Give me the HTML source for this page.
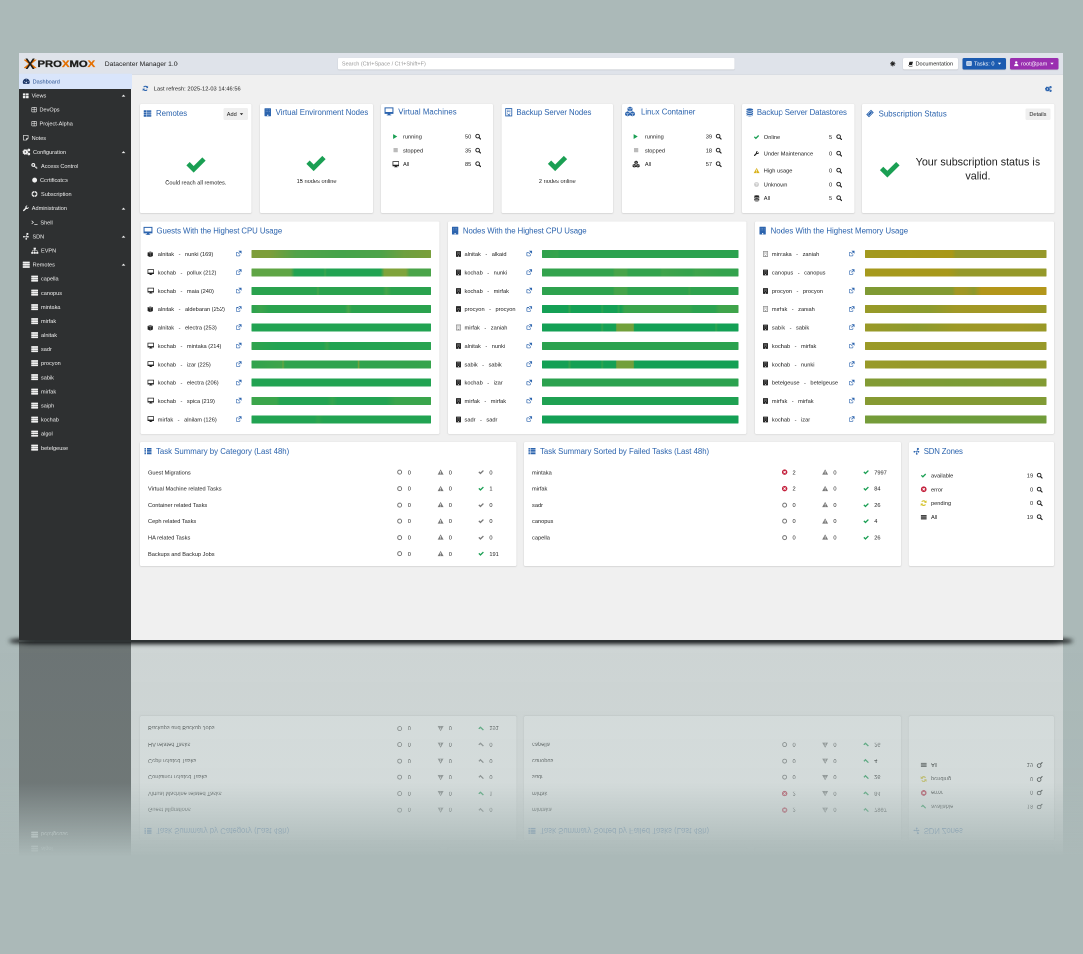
<!DOCTYPE html>
<html lang="en"><head><meta charset="utf-8"><title>Proxmox Datacenter Manager</title>
<style>
html,body{margin:0;padding:0}
body{width:1083px;height:954px;overflow:hidden;position:relative;background:#abb9b8;font-family:"Liberation Sans",sans-serif}
.app{position:absolute;left:0;top:0;width:2088.0px;height:1175.4px;transform-origin:0 0;overflow:hidden;color:#222;will-change:transform}
.cbg{position:absolute;left:224px;top:43.4px;right:0;bottom:-6px;background:#f0f0f0}
.abs{position:absolute;white-space:nowrap}
svg.i{display:block}
.hdr{position:absolute;left:0;top:0;width:100%;height:43.8px;background:#dfe3ea;box-shadow:inset 0 -1.6px 0 #d8dbe1;z-index:2}
.logo{position:absolute;width:142px;height:22px}
.lt{position:absolute;top:0;font-size:18px;line-height:22px;letter-spacing:0;font-weight:bold;transform:scaleX(1.253);transform-origin:0 0;white-space:nowrap;-webkit-text-stroke:.55px}
.htitle{position:absolute;top:0;line-height:43.4px;font-size:13.500px;color:#222;white-space:nowrap}
.search{position:absolute;background:#fff;border-radius:2px;box-shadow:0 1px 2px rgba(0,0,0,.18)}
.search span{position:absolute;left:8px;top:0;line-height:23.6px;font-size:11px;color:#9a9a9a;white-space:nowrap}
.hbtn{position:absolute;border-radius:3px;display:flex;align-items:center;justify-content:center;gap:4px;font-size:11.200px;white-space:nowrap;box-shadow:0 1px 2px rgba(0,0,0,.2)}
.hbtn.doc{background:#fff;color:#222}
.hbtn.tasks{background:#1c5bb0;color:#fff}
.hbtn.user{background:#9a2fb0;color:#fff}
.side{z-index:3;position:absolute;left:0;top:43.4px;width:224px;bottom:-6px;background:#2e3031;color:#f0f0f0}
.sitem{position:absolute;left:0;width:224px;height:28.18px;font-size:11.100px;line-height:28.18px}
.sitem.sel{background:#d9e5fb;color:#27508f;width:226px;height:29.2px;box-shadow:0 -1.6px 0 #d9e5fb}
.st{top:0}
.content{position:absolute;left:0;top:0;width:100%;height:100%}
.card{position:absolute;background:#fff;border-radius:2px;box-shadow:0 1px 3px rgba(0,0,0,.16),0 0 1px rgba(0,0,0,.10)}
.ct{font-size:15.600px;line-height:21px;color:#2c64ae}
.bt{font-size:11.300px;line-height:16px;color:#222}
.bt.c{text-align:center}
.bt.r{text-align:right}
.sub{font-size:21.500px;line-height:28.400px;text-align:center;color:#222;white-space:nowrap}
.sbtn{background:#efefef;border-radius:3px;font-size:11.200px;display:flex;align-items:center;justify-content:center;gap:4px;color:#222}
.bar{height:16px;border-radius:1px}
</style></head><body>
<div style="position:absolute;left:0;top:0;width:1083px;height:954px;overflow:hidden">
<div class="app" style="transform:translate(19.0px,1229.2px) scale(0.5,-0.5)"><div class="hdr"><div class="logo" style="left:10px;top:10.8px"><svg width="24.400" height="21.500" viewBox="0 0 24 21" preserveAspectRatio="none" style="position:absolute;left:.2px;top:.2px;overflow:hidden"><clipPath id="lgc"><rect x="-1" y="2.300" width="26" height="16.400"/></clipPath><g clip-path="url(#lgc)" stroke="#e57000" stroke-width="3.700" fill="none"><path d="M-1.800 -.6L25.800 21.600M25.800 -.6L-1.800 21.600"/></g><g stroke="#1d1d1b" stroke-width="3.100" fill="none"><path d="M3.300 -2.100L20.700 23.100M20.700 -2.100L3.300 23.100"/></g></svg><span class="lt" style="left:27px"><b style="color:#1d1d1b">PRO</b><b style="color:#e57000">X</b><b style="color:#1d1d1b">MO</b><b style="color:#e57000">X</b></span></div><div class="htitle" style="left:171.4px">Datacenter Manager 1.0</div><div class="search" style="left:637.8px;width:792.8px;top:9.9px;height:23.6px"><span>Search (Ctrl+Space / Ctrl+Shift+F)</span></div><div class="abs" style="left:1742.1px;top:15.5px;color:#222"><svg class="i" width="11" height="11" viewBox="0 0 16 16" fill="currentColor" style=""><circle cx="8" cy="8" r="3.600"/><path d="M8 .5v15M.5 8h15M2.700 2.700l10.600 10.600M13.300 2.700L2.700 13.300" stroke="currentColor" stroke-width="2.600"/></svg></div><div class="hbtn doc" style="left:1768.2px;width:109.8px;top:9.7px;height:23.3px"><svg class="i" width="11" height="11" viewBox="0 0 16 16" fill="currentColor" style=""><path d="M4.500 2h10l-2.800 10H3.200A1.700 1.700 0 0 0 3.200 14.500H12l.5-1.500 1 .3-.8 2.700H3A3 3 0 0 1 1 12z"/></svg><span>Documentation</span></div><div class="hbtn tasks" style="left:1886.6px;width:87.8px;top:9.7px;height:23.3px"><svg class="i" width="12" height="12" viewBox="0 0 16 16" fill="currentColor" style=""><rect x="1" y="2" width="14" height="12" rx="1"/><path d="M3 5.500h10M3 8h10M3 10.500h10" stroke="#1c5bb0" stroke-width="1"/></svg><span>Tasks: 0</span><svg class="i" width="12" height="12" viewBox="0 0 16 16" fill="currentColor" style=""><path d="M3.500 6h9L8 11z"/></svg></div><div class="hbtn user" style="left:1982.2px;width:97.2px;top:9.7px;height:23.3px"><svg class="i" width="11" height="11" viewBox="0 0 16 16" fill="currentColor" style=""><circle cx="8" cy="4.300" r="3.500"/><path d="M1.800 15c0-4.500 2.200-6.500 6.200-6.500s6.200 2 6.200 6.500z"/></svg><span>root@pam</span><svg class="i" width="12" height="12" viewBox="0 0 16 16" fill="currentColor" style=""><path d="M3.500 6h9L8 11z"/></svg></div></div><div class="side"><div class="sitem sel" style="top:-0.55px"><span class="abs" style="left:7.4px;top:6.59px"><svg class="i" width="15" height="15" viewBox="0 0 16 16" fill="currentColor" style="color:#1b3566;"><path d="M8 2.5a7.3 7.3 0 0 0-6.2 11.2h12.4A7.3 7.3 0 0 0 8 2.5z"/><circle cx="8" cy="10.6" r="1.7" fill="#d9e5fb"/><circle cx="4" cy="9" r=".9" fill="#d9e5fb"/><circle cx="12" cy="9" r=".9" fill="#d9e5fb"/><circle cx="8" cy="5" r=".9" fill="#d9e5fb"/></svg></span><span class="abs st" style="left:27.3px">Dashboard</span></div><div class="sitem" style="top:27.63px"><span class="abs" style="left:7.1px;top:7.59px"><svg class="i" width="13" height="13" viewBox="0 0 16 16" fill="currentColor" style=""><rect x="1" y="2" width="6.3" height="5.3" rx=".6"/><rect x="8.7" y="2" width="6.3" height="5.3" rx=".6"/><rect x="1" y="8.7" width="6.3" height="5.3" rx=".6"/><rect x="8.7" y="8.7" width="6.3" height="5.3" rx=".6"/></svg></span><span class="abs st" style="left:25.2px">Views</span><span class="abs" style="left:202.8px;top:8.100px"><svg class="i" width="12" height="12" viewBox="0 0 16 16" fill="currentColor" style=""><path d="M3 11l5-5.500 5 5.500z"/></svg></span></div><div class="sitem" style="top:55.81px"><span class="abs" style="left:23.75px;top:7.84px"><svg class="i" width="12.5" height="12.5" viewBox="0 0 16 16" fill="currentColor" style=""><rect x="2" y="2" width="12" height="12" rx="1.5" fill="none" stroke="currentColor" stroke-width="1.5"/><path d="M8 2v12M2 8h12" stroke="currentColor" stroke-width="1.5" fill="none"/></svg></span><span class="abs st" style="left:41.1px">DevOps</span></div><div class="sitem" style="top:83.99px"><span class="abs" style="left:23.75px;top:7.84px"><svg class="i" width="12.5" height="12.5" viewBox="0 0 16 16" fill="currentColor" style=""><rect x="2" y="2" width="12" height="12" rx="1.5" fill="none" stroke="currentColor" stroke-width="1.5"/><path d="M8 2v12M2 8h12" stroke="currentColor" stroke-width="1.5" fill="none"/></svg></span><span class="abs st" style="left:41.1px">Project-Alpha</span></div><div class="sitem" style="top:112.17px"><span class="abs" style="left:7.1px;top:7.59px"><svg class="i" width="13" height="13" viewBox="0 0 16 16" fill="currentColor" style=""><path d="M2.2 2.2h11.6v7.3l-4.3 4.3H2.2z" fill="none" stroke="currentColor" stroke-width="1.6"/><path d="M9.5 13.8V9.5h4.3" fill="none" stroke="currentColor" stroke-width="1.3"/></svg></span><span class="abs st" style="left:25.2px">Notes</span></div><div class="sitem" style="top:140.35px"><span class="abs" style="left:7.3px;top:6.09px"><svg class="i" width="16" height="16" viewBox="0 0 16 16" fill="currentColor" style=""><circle cx="5.600" cy="8" r="3.100" fill="none" stroke="currentColor" stroke-width="3.400"/><circle cx="5.600" cy="8" r="4.900" fill="none" stroke="currentColor" stroke-width="1.400" stroke-dasharray="2.100 1.750"/><circle cx="12.600" cy="3.900" r="1.600" fill="none" stroke="currentColor" stroke-width="2.300"/><circle cx="12.600" cy="12.100" r="1.600" fill="none" stroke="currentColor" stroke-width="2.300"/></svg></span><span class="abs st" style="left:28.1px">Configuration</span><span class="abs" style="left:202.8px;top:8.100px"><svg class="i" width="12" height="12" viewBox="0 0 16 16" fill="currentColor" style=""><path d="M3 11l5-5.500 5 5.500z"/></svg></span></div><div class="sitem" style="top:168.53px"><span class="abs" style="left:24.0px;top:7.09px"><svg class="i" width="14" height="14" viewBox="0 0 16 16" fill="currentColor" style=""><circle cx="5.2" cy="5.6" r="3.2" fill="none" stroke="currentColor" stroke-width="2.6"/><path d="M7.6 8l5.6 5.6M11 11.4l1.6-1.6M13 13.4l1.4-1.4" stroke="currentColor" stroke-width="2" fill="none"/></svg></span><span class="abs st" style="left:44px">Access Control</span></div><div class="sitem" style="top:196.71px"><span class="abs" style="left:24.75px;top:7.84px"><svg class="i" width="12.5" height="12.5" viewBox="0 0 16 16" fill="currentColor" style=""><circle cx="8" cy="8" r="6.3"/></svg></span><span class="abs st" style="left:42px">Certificates</span></div><div class="sitem" style="top:224.89px"><span class="abs" style="left:24.0px;top:7.09px"><svg class="i" width="14" height="14" viewBox="0 0 16 16" fill="currentColor" style=""><circle cx="8" cy="8" r="5.2" fill="none" stroke="currentColor" stroke-width="3.4"/><path d="M8 1v4M8 11v4M1 8h4M11 8h4" stroke="#2e3031" stroke-width="1.1"/></svg></span><span class="abs st" style="left:44px">Subscription</span></div><div class="sitem" style="top:253.07px"><span class="abs" style="left:6.85px;top:7.34px"><svg class="i" width="13.5" height="13.5" viewBox="0 0 16 16" fill="currentColor" style=""><path d="M14.6 4.3l-2.5 2.5-2.3-.5-.5-2.3 2.5-2.5a4 4 0 0 0-5 5.2L1.6 11.900a1.700 1.700 0 0 0 2.400 2.400l5.200-5.200a4 4 0 0 0 5.400-4.800z"/></svg></span><span class="abs st" style="left:25.6px">Administration</span><span class="abs" style="left:202.8px;top:8.100px"><svg class="i" width="12" height="12" viewBox="0 0 16 16" fill="currentColor" style=""><path d="M3 11l5-5.500 5 5.500z"/></svg></span></div><div class="sitem" style="top:281.25px"><span class="abs" style="left:24.0px;top:7.09px"><svg class="i" width="14" height="14" viewBox="0 0 16 16" fill="currentColor" style=""><path d="M1.5 4l4 3.6-4 3.600" fill="none" stroke="currentColor" stroke-width="1.6"/><path d="M7.5 12.5h7.500" stroke="currentColor" stroke-width="1.600"/></svg></span><span class="abs st" style="left:42.8px">Shell</span></div><div class="sitem" style="top:309.43px"><span class="abs" style="left:7.4px;top:6.59px"><svg class="i" width="15" height="15" viewBox="0 0 16 16" fill="currentColor" style=""><circle cx="3" cy="9" r="1.900"/><circle cx="10.500" cy="3" r="2.300"/><circle cx="11.500" cy="9" r="1.900"/><circle cx="8" cy="13.500" r="1.900"/><path d="M3 9h8.500M7.500 9l3-6M7.500 9l.5 4.500" stroke="currentColor" stroke-width="1.200" fill="none"/></svg></span><span class="abs st" style="left:26.9px">SDN</span><span class="abs" style="left:202.8px;top:8.100px"><svg class="i" width="12" height="12" viewBox="0 0 16 16" fill="currentColor" style=""><path d="M3 11l5-5.500 5 5.500z"/></svg></span></div><div class="sitem" style="top:337.61px"><span class="abs" style="left:24.0px;top:6.59px"><svg class="i" width="15" height="15" viewBox="0 0 16 16" fill="currentColor" style=""><rect x="5.500" y="1.500" width="5" height="4"/><rect x="0.500" y="10.500" width="4.400" height="4"/><rect x="5.800" y="10.500" width="4.400" height="4"/><rect x="11.100" y="10.500" width="4.400" height="4"/><path d="M8 5v5.500M2.700 10.500V8h10.600v2.500" stroke="currentColor" stroke-width="1.100" fill="none"/></svg></span><span class="abs st" style="left:44px">EVPN</span></div><div class="sitem" style="top:365.79px"><span class="abs" style="left:7.4px;top:6.59px"><svg class="i" width="15" height="15" viewBox="0 0 16 16" fill="currentColor" style=""><rect x=".5" y="1.400" width="15" height="3.800" rx=".5"/><rect x=".5" y="6.100" width="15" height="3.800" rx=".5"/><rect x=".5" y="10.800" width="15" height="3.800" rx=".5"/><path d="M5.500 1.400v13.200" stroke="#fff" stroke-width=".9" opacity=".5"/><path d="M6 2.700h9M6 3.900h9M6 7.400h9M6 8.600h9M6 12.100h9M6 13.300h9" stroke="#fff" stroke-width=".45" opacity=".45"/></svg></span><span class="abs st" style="left:27.3px">Remotes</span><span class="abs" style="left:202.8px;top:8.100px"><svg class="i" width="12" height="12" viewBox="0 0 16 16" fill="currentColor" style=""><path d="M3 11l5-5.500 5 5.500z"/></svg></span></div><div class="sitem" style="top:393.97px"><span class="abs" style="left:24.05px;top:6.84px"><svg class="i" width="14.5" height="14.5" viewBox="0 0 16 16" fill="currentColor" style=""><rect x=".5" y="1.400" width="15" height="3.800" rx=".5"/><rect x=".5" y="6.100" width="15" height="3.800" rx=".5"/><rect x=".5" y="10.800" width="15" height="3.800" rx=".5"/><path d="M5.500 1.400v13.200" stroke="#fff" stroke-width=".9" opacity=".5"/><path d="M6 2.700h9M6 3.900h9M6 7.400h9M6 8.600h9M6 12.100h9M6 13.300h9" stroke="#fff" stroke-width=".45" opacity=".45"/></svg></span><span class="abs st" style="left:44px">capella</span></div><div class="sitem" style="top:422.15px"><span class="abs" style="left:24.05px;top:6.84px"><svg class="i" width="14.5" height="14.5" viewBox="0 0 16 16" fill="currentColor" style=""><rect x=".5" y="1.400" width="15" height="3.800" rx=".5"/><rect x=".5" y="6.100" width="15" height="3.800" rx=".5"/><rect x=".5" y="10.800" width="15" height="3.800" rx=".5"/><path d="M5.500 1.400v13.200" stroke="#fff" stroke-width=".9" opacity=".5"/><path d="M6 2.700h9M6 3.900h9M6 7.400h9M6 8.600h9M6 12.100h9M6 13.300h9" stroke="#fff" stroke-width=".45" opacity=".45"/></svg></span><span class="abs st" style="left:44px">canopus</span></div><div class="sitem" style="top:450.33px"><span class="abs" style="left:24.05px;top:6.84px"><svg class="i" width="14.5" height="14.5" viewBox="0 0 16 16" fill="currentColor" style=""><rect x=".5" y="1.400" width="15" height="3.800" rx=".5"/><rect x=".5" y="6.100" width="15" height="3.800" rx=".5"/><rect x=".5" y="10.800" width="15" height="3.800" rx=".5"/><path d="M5.500 1.400v13.200" stroke="#fff" stroke-width=".9" opacity=".5"/><path d="M6 2.700h9M6 3.900h9M6 7.400h9M6 8.600h9M6 12.100h9M6 13.300h9" stroke="#fff" stroke-width=".45" opacity=".45"/></svg></span><span class="abs st" style="left:44px">mintaka</span></div><div class="sitem" style="top:478.51px"><span class="abs" style="left:24.05px;top:6.84px"><svg class="i" width="14.5" height="14.5" viewBox="0 0 16 16" fill="currentColor" style=""><rect x=".5" y="1.400" width="15" height="3.800" rx=".5"/><rect x=".5" y="6.100" width="15" height="3.800" rx=".5"/><rect x=".5" y="10.800" width="15" height="3.800" rx=".5"/><path d="M5.500 1.400v13.200" stroke="#fff" stroke-width=".9" opacity=".5"/><path d="M6 2.700h9M6 3.900h9M6 7.400h9M6 8.600h9M6 12.100h9M6 13.300h9" stroke="#fff" stroke-width=".45" opacity=".45"/></svg></span><span class="abs st" style="left:44px">mirfak</span></div><div class="sitem" style="top:506.69px"><span class="abs" style="left:24.05px;top:6.84px"><svg class="i" width="14.5" height="14.5" viewBox="0 0 16 16" fill="currentColor" style=""><rect x=".5" y="1.400" width="15" height="3.800" rx=".5"/><rect x=".5" y="6.100" width="15" height="3.800" rx=".5"/><rect x=".5" y="10.800" width="15" height="3.800" rx=".5"/><path d="M5.500 1.400v13.200" stroke="#fff" stroke-width=".9" opacity=".5"/><path d="M6 2.700h9M6 3.900h9M6 7.400h9M6 8.600h9M6 12.100h9M6 13.300h9" stroke="#fff" stroke-width=".45" opacity=".45"/></svg></span><span class="abs st" style="left:44px">alnitak</span></div><div class="sitem" style="top:534.87px"><span class="abs" style="left:24.05px;top:6.84px"><svg class="i" width="14.5" height="14.5" viewBox="0 0 16 16" fill="currentColor" style=""><rect x=".5" y="1.400" width="15" height="3.800" rx=".5"/><rect x=".5" y="6.100" width="15" height="3.800" rx=".5"/><rect x=".5" y="10.800" width="15" height="3.800" rx=".5"/><path d="M5.500 1.400v13.200" stroke="#fff" stroke-width=".9" opacity=".5"/><path d="M6 2.700h9M6 3.900h9M6 7.400h9M6 8.600h9M6 12.100h9M6 13.300h9" stroke="#fff" stroke-width=".45" opacity=".45"/></svg></span><span class="abs st" style="left:44px">sadr</span></div><div class="sitem" style="top:563.05px"><span class="abs" style="left:24.05px;top:6.84px"><svg class="i" width="14.5" height="14.5" viewBox="0 0 16 16" fill="currentColor" style=""><rect x=".5" y="1.400" width="15" height="3.800" rx=".5"/><rect x=".5" y="6.100" width="15" height="3.800" rx=".5"/><rect x=".5" y="10.800" width="15" height="3.800" rx=".5"/><path d="M5.500 1.400v13.200" stroke="#fff" stroke-width=".9" opacity=".5"/><path d="M6 2.700h9M6 3.900h9M6 7.400h9M6 8.600h9M6 12.100h9M6 13.300h9" stroke="#fff" stroke-width=".45" opacity=".45"/></svg></span><span class="abs st" style="left:44px">procyon</span></div><div class="sitem" style="top:591.23px"><span class="abs" style="left:24.05px;top:6.84px"><svg class="i" width="14.5" height="14.5" viewBox="0 0 16 16" fill="currentColor" style=""><rect x=".5" y="1.400" width="15" height="3.800" rx=".5"/><rect x=".5" y="6.100" width="15" height="3.800" rx=".5"/><rect x=".5" y="10.800" width="15" height="3.800" rx=".5"/><path d="M5.500 1.400v13.200" stroke="#fff" stroke-width=".9" opacity=".5"/><path d="M6 2.700h9M6 3.900h9M6 7.400h9M6 8.600h9M6 12.100h9M6 13.300h9" stroke="#fff" stroke-width=".45" opacity=".45"/></svg></span><span class="abs st" style="left:44px">sabik</span></div><div class="sitem" style="top:619.41px"><span class="abs" style="left:24.05px;top:6.84px"><svg class="i" width="14.5" height="14.5" viewBox="0 0 16 16" fill="currentColor" style=""><rect x=".5" y="1.400" width="15" height="3.800" rx=".5"/><rect x=".5" y="6.100" width="15" height="3.800" rx=".5"/><rect x=".5" y="10.800" width="15" height="3.800" rx=".5"/><path d="M5.500 1.400v13.200" stroke="#fff" stroke-width=".9" opacity=".5"/><path d="M6 2.700h9M6 3.900h9M6 7.400h9M6 8.600h9M6 12.100h9M6 13.300h9" stroke="#fff" stroke-width=".45" opacity=".45"/></svg></span><span class="abs st" style="left:44px">mirfak</span></div><div class="sitem" style="top:647.59px"><span class="abs" style="left:24.05px;top:6.84px"><svg class="i" width="14.5" height="14.5" viewBox="0 0 16 16" fill="currentColor" style=""><rect x=".5" y="1.400" width="15" height="3.800" rx=".5"/><rect x=".5" y="6.100" width="15" height="3.800" rx=".5"/><rect x=".5" y="10.800" width="15" height="3.800" rx=".5"/><path d="M5.500 1.400v13.200" stroke="#fff" stroke-width=".9" opacity=".5"/><path d="M6 2.700h9M6 3.900h9M6 7.400h9M6 8.600h9M6 12.100h9M6 13.300h9" stroke="#fff" stroke-width=".45" opacity=".45"/></svg></span><span class="abs st" style="left:44px">saiph</span></div><div class="sitem" style="top:675.77px"><span class="abs" style="left:24.05px;top:6.84px"><svg class="i" width="14.5" height="14.5" viewBox="0 0 16 16" fill="currentColor" style=""><rect x=".5" y="1.400" width="15" height="3.800" rx=".5"/><rect x=".5" y="6.100" width="15" height="3.800" rx=".5"/><rect x=".5" y="10.800" width="15" height="3.800" rx=".5"/><path d="M5.500 1.400v13.200" stroke="#fff" stroke-width=".9" opacity=".5"/><path d="M6 2.700h9M6 3.900h9M6 7.400h9M6 8.600h9M6 12.100h9M6 13.300h9" stroke="#fff" stroke-width=".45" opacity=".45"/></svg></span><span class="abs st" style="left:44px">kochab</span></div><div class="sitem" style="top:703.95px"><span class="abs" style="left:24.05px;top:6.84px"><svg class="i" width="14.5" height="14.5" viewBox="0 0 16 16" fill="currentColor" style=""><rect x=".5" y="1.400" width="15" height="3.800" rx=".5"/><rect x=".5" y="6.100" width="15" height="3.800" rx=".5"/><rect x=".5" y="10.800" width="15" height="3.800" rx=".5"/><path d="M5.500 1.400v13.200" stroke="#fff" stroke-width=".9" opacity=".5"/><path d="M6 2.700h9M6 3.900h9M6 7.400h9M6 8.600h9M6 12.100h9M6 13.300h9" stroke="#fff" stroke-width=".45" opacity=".45"/></svg></span><span class="abs st" style="left:44px">algol</span></div><div class="sitem" style="top:732.13px"><span class="abs" style="left:24.05px;top:6.84px"><svg class="i" width="14.5" height="14.5" viewBox="0 0 16 16" fill="currentColor" style=""><rect x=".5" y="1.400" width="15" height="3.800" rx=".5"/><rect x=".5" y="6.100" width="15" height="3.800" rx=".5"/><rect x=".5" y="10.800" width="15" height="3.800" rx=".5"/><path d="M5.500 1.400v13.200" stroke="#fff" stroke-width=".9" opacity=".5"/><path d="M6 2.700h9M6 3.900h9M6 7.400h9M6 8.600h9M6 12.100h9M6 13.300h9" stroke="#fff" stroke-width=".45" opacity=".45"/></svg></span><span class="abs st" style="left:44px">betelgeuse</span></div></div><div class="cbg"></div><div class="content"><span class="abs" style="left:247.2px;top:65.2px"><svg class="i" width="11.5" height="11.5" viewBox="0 0 16 16" fill="currentColor" style="color:#2c64ae;"><path d="M13.300 6.300A5.600 5.600 0 0 0 3.200 4.700" fill="none" stroke="currentColor" stroke-width="3"/><path d="M2.700 9.700A5.600 5.600 0 0 0 12.800 11.300" fill="none" stroke="currentColor" stroke-width="3"/><path d="M15.500 .8v6.400H9.100zM.5 15.200V8.800h6.400z"/></svg></span><span class="abs bt" style="left:269.6px;top:63.2px"><span style="letter-spacing:.09px">Last refresh: 2025-12-03 14:46:56</span></span><span class="abs" style="left:2051.8px;top:65.2px"><svg class="i" width="14" height="14" viewBox="0 0 16 16" fill="currentColor" style="color:#2c64ae;"><circle cx="5.600" cy="8" r="3.100" fill="none" stroke="currentColor" stroke-width="3.400"/><circle cx="5.600" cy="8" r="4.900" fill="none" stroke="currentColor" stroke-width="1.400" stroke-dasharray="2.100 1.750"/><circle cx="12.600" cy="3.900" r="1.600" fill="none" stroke="currentColor" stroke-width="2.300"/><circle cx="12.600" cy="12.100" r="1.600" fill="none" stroke="currentColor" stroke-width="2.300"/></svg></span><div class="card" style="left:242.0px;top:102.0px;width:223.4px;height:218.2px"><span class="abs ct-i" style="left:7px;top:10.5px"><svg class="i" width="16" height="16" viewBox="0 0 16 16" fill="currentColor" style="color:#2c64ae;"><rect x=".5" y="1.400" width="15" height="3.800" rx=".5"/><rect x=".5" y="6.100" width="15" height="3.800" rx=".5"/><rect x=".5" y="10.800" width="15" height="3.800" rx=".5"/><path d="M5.500 1.400v13.200" stroke="#fff" stroke-width=".9" opacity=".5"/><path d="M6 2.700h9M6 3.900h9M6 7.400h9M6 8.600h9M6 12.100h9M6 13.300h9" stroke="#fff" stroke-width=".45" opacity=".45"/></svg></span><span class="abs ct" style="left:32px;top:8px;letter-spacing:-0.003px">Remotes</span><span class="sbtn abs" style="left:167.0px;top:8px;width:49.0px;height:24px">Add <svg class="i" width="12" height="12" viewBox="0 0 16 16" fill="currentColor" style=""><path d="M3.500 6h9L8 11z"/></svg></span><span class="abs" style="left:89.60000000000002px;top:99.0px"><svg class="i" width="44" height="44" viewBox="0 0 16 16" fill="currentColor" style="color:#1a9f53;"><path d="M1 8.6 L3.4 6.2 L6.3 9.1 L12.6 2.8 L15 5.2 L6.3 13.9 Z"/></svg></span><span class="abs bt c" style="left:0;width:100%;top:148.60000000000002px">Could reach all remotes.</span></div><div class="card" style="left:482.2px;top:102.0px;width:226.0px;height:218.2px"><span class="abs ct-i" style="left:7px;top:7.5px"><svg class="i" width="17" height="17" viewBox="0 0 16 16" fill="currentColor" style="color:#2c64ae;"><path d="M2.800 .4h10.400a.9.9 0 0 1 .9.9v13.400a.9.9 0 0 1-.9.900H2.800a.9.9 0 0 1-.9-.9V1.300a.9.9 0 0 1 .9-.9z"/><g fill="#fff" opacity=".4"><rect x="4.300" y="2.800" width="1.400" height="1.400"/><rect x="7.300" y="2.800" width="1.400" height="1.400"/><rect x="10.300" y="2.800" width="1.400" height="1.400"/><rect x="4.300" y="6" width="1.400" height="1.400"/><rect x="7.300" y="6" width="1.400" height="1.400"/><rect x="10.300" y="6" width="1.400" height="1.400"/></g><rect x="6.800" y="12.600" width="2.400" height="2.400" fill="#fff" opacity=".9"/></svg></span><span class="abs ct" style="left:31px;top:5.5px;letter-spacing:0.005px">Virtual Environment Nodes</span><span class="abs" style="left:90.19999999999999px;top:96.4px"><svg class="i" width="44" height="44" viewBox="0 0 16 16" fill="currentColor" style="color:#1a9f53;"><path d="M1 8.6 L3.4 6.2 L6.3 9.1 L12.6 2.8 L15 5.2 L6.3 13.9 Z"/></svg></span><span class="abs bt c" style="left:0;width:100%;top:146.0px">15 nodes online</span></div><div class="card" style="left:724.4px;top:102.0px;width:223.4px;height:218.2px"><span class="abs ct-i" style="left:7px;top:6.0px"><svg class="i" width="18" height="18" viewBox="0 0 16 16" fill="currentColor" style="color:#2c64ae;"><path d="M1 1.600h14v9.800H1z" fill="none" stroke="currentColor" stroke-width="1.800"/><path d="M1 8.800h14v2.600H1zM6 11.400h4l.5 2.300h1.500v1.100H4v-1.100h1.500z"/></svg></span><span class="abs ct" style="left:34px;top:4.5px;letter-spacing:0.135px">Virtual Machines</span><span class="abs" style="left:22.0px;top:59.0px"><svg class="i" width="12" height="12" viewBox="0 0 16 16" fill="currentColor" style="color:#1a9f53;"><path d="M3 1.500l11 6.500-11 6.500z"/></svg></span><span class="abs bt" style="left:43.60000000000002px;top:57.0px">running</span><span class="abs bt r" style="left:140.20000000000005px;width:40px;top:57.0px">50</span><span class="abs" style="left:187.40000000000003px;top:59.0px"><svg class="i" width="12.5" height="12.5" viewBox="0 0 16 16" fill="currentColor" style="color:#222;"><circle cx="6.700" cy="6.700" r="4.700" fill="none" stroke="currentColor" stroke-width="2.400"/><path d="M10.400 10.400l3.900 3.900" stroke="currentColor" stroke-width="2.900" stroke-linecap="round"/></svg></span><span class="abs" style="left:24.05px;top:87.45px"><svg class="i" width="10.5" height="10.5" viewBox="0 0 16 16" fill="currentColor" style="color:#bbb;"><rect x="1.500" y="1.500" width="13" height="13" rx="1"/></svg></span><span class="abs bt" style="left:43.60000000000002px;top:84.7px">stopped</span><span class="abs bt r" style="left:140.20000000000005px;width:40px;top:84.7px">35</span><span class="abs" style="left:187.40000000000003px;top:86.7px"><svg class="i" width="12.5" height="12.5" viewBox="0 0 16 16" fill="currentColor" style="color:#222;"><circle cx="6.700" cy="6.700" r="4.700" fill="none" stroke="currentColor" stroke-width="2.400"/><path d="M10.400 10.400l3.900 3.900" stroke="currentColor" stroke-width="2.900" stroke-linecap="round"/></svg></span><span class="abs" style="left:22.55px;top:113.65px"><svg class="i" width="13.5" height="13.5" viewBox="0 0 16 16" fill="currentColor" style="color:#222;"><path d="M1 1.600h14v9.800H1z" fill="none" stroke="currentColor" stroke-width="1.800"/><path d="M1 8.800h14v2.600H1zM6 11.400h4l.5 2.300h1.500v1.100H4v-1.100h1.500z"/></svg></span><span class="abs bt" style="left:43.60000000000002px;top:112.4px">All</span><span class="abs bt r" style="left:140.20000000000005px;width:40px;top:112.4px">85</span><span class="abs" style="left:187.40000000000003px;top:114.4px"><svg class="i" width="12.5" height="12.5" viewBox="0 0 16 16" fill="currentColor" style="color:#222;"><circle cx="6.700" cy="6.700" r="4.700" fill="none" stroke="currentColor" stroke-width="2.400"/><path d="M10.400 10.400l3.900 3.900" stroke="currentColor" stroke-width="2.900" stroke-linecap="round"/></svg></span></div><div class="card" style="left:964.8px;top:102.0px;width:223.4px;height:218.2px"><span class="abs ct-i" style="left:6px;top:7.5px"><svg class="i" width="17" height="17" viewBox="0 0 16 16" fill="currentColor" style="color:#2c64ae;"><path d="M2.300 1.100h11.400v13.800H2.300z" fill="none" stroke="currentColor" stroke-width="1.600"/><path d="M5 4h1.600M7.200 4h1.600M9.400 4H11M5 6.800h1.600M7.200 6.800h1.600M9.400 6.800H11M5 9.600h1.600M9.400 9.600H11M6.800 15v-2.800h2.400V15" stroke="currentColor" stroke-width="1.300" fill="none"/></svg></span><span class="abs ct" style="left:30px;top:5.5px;letter-spacing:-0.092px">Backup Server Nodes</span><span class="abs" style="left:89.79999999999995px;top:96.4px"><svg class="i" width="44" height="44" viewBox="0 0 16 16" fill="currentColor" style="color:#1a9f53;"><path d="M1 8.6 L3.4 6.2 L6.3 9.1 L12.6 2.8 L15 5.2 L6.3 13.9 Z"/></svg></span><span class="abs bt c" style="left:0;width:100%;top:146.0px">2 nodes online</span></div><div class="card" style="left:1206.0px;top:102.0px;width:223.8px;height:218.2px"><span class="abs ct-i" style="left:6px;top:5.0px"><svg class="i" width="20" height="20" viewBox="0 0 16 16" fill="currentColor" style="color:#2c64ae;"><path d="M8 .2l4 1.900v4L8 8 4 6.100v-4z"/><path d="M4.200 7.600l4 1.900v4.300l-4 1.900-4-1.900V9.500z"/><path d="M11.800 7.600l4 1.900v4.300l-4 1.900-4-1.900V9.500z"/><path d="M8 4.100v3.600M4.200 11.600v3.800M11.800 11.600v3.800M4.500 2.500L8 4.100l3.500-1.600M.600 9.900l3.600 1.700 3.600-1.700M8.200 9.900l3.600 1.700 3.600-1.700" stroke="#fff" stroke-width=".7" fill="none"/></svg></span><span class="abs ct" style="left:38px;top:4.5px;letter-spacing:-0.031px">Linux Container</span><span class="abs" style="left:21.4px;top:59.0px"><svg class="i" width="12" height="12" viewBox="0 0 16 16" fill="currentColor" style="color:#1a9f53;"><path d="M3 1.500l11 6.500-11 6.500z"/></svg></span><span class="abs bt" style="left:45.799999999999955px;top:57.0px">running</span><span class="abs bt r" style="left:140px;width:40px;top:57.0px">39</span><span class="abs" style="left:187.2000000000001px;top:59.0px"><svg class="i" width="12.5" height="12.5" viewBox="0 0 16 16" fill="currentColor" style="color:#222;"><circle cx="6.700" cy="6.700" r="4.700" fill="none" stroke="currentColor" stroke-width="2.400"/><path d="M10.400 10.400l3.900 3.900" stroke="currentColor" stroke-width="2.900" stroke-linecap="round"/></svg></span><span class="abs" style="left:23.45px;top:87.45px"><svg class="i" width="10.5" height="10.5" viewBox="0 0 16 16" fill="currentColor" style="color:#bbb;"><rect x="1.500" y="1.500" width="13" height="13" rx="1"/></svg></span><span class="abs bt" style="left:45.799999999999955px;top:84.7px">stopped</span><span class="abs bt r" style="left:140px;width:40px;top:84.7px">18</span><span class="abs" style="left:187.2000000000001px;top:86.7px"><svg class="i" width="12.5" height="12.5" viewBox="0 0 16 16" fill="currentColor" style="color:#222;"><circle cx="6.700" cy="6.700" r="4.700" fill="none" stroke="currentColor" stroke-width="2.400"/><path d="M10.400 10.400l3.900 3.900" stroke="currentColor" stroke-width="2.900" stroke-linecap="round"/></svg></span><span class="abs" style="left:21.15px;top:113.15px"><svg class="i" width="14.5" height="14.5" viewBox="0 0 16 16" fill="currentColor" style="color:#222;"><path d="M8 .2l4 1.900v4L8 8 4 6.100v-4z"/><path d="M4.200 7.600l4 1.900v4.300l-4 1.900-4-1.900V9.500z"/><path d="M11.800 7.600l4 1.900v4.300l-4 1.900-4-1.900V9.500z"/><path d="M8 4.100v3.600M4.200 11.600v3.800M11.800 11.600v3.800M4.500 2.500L8 4.100l3.500-1.600M.600 9.900l3.600 1.700 3.600-1.700M8.200 9.900l3.600 1.700 3.600-1.700" stroke="#fff" stroke-width=".7" fill="none"/></svg></span><span class="abs bt" style="left:45.799999999999955px;top:112.4px">All</span><span class="abs bt r" style="left:140px;width:40px;top:112.4px">57</span><span class="abs" style="left:187.2000000000001px;top:114.4px"><svg class="i" width="12.5" height="12.5" viewBox="0 0 16 16" fill="currentColor" style="color:#222;"><circle cx="6.700" cy="6.700" r="4.700" fill="none" stroke="currentColor" stroke-width="2.400"/><path d="M10.400 10.400l3.900 3.900" stroke="currentColor" stroke-width="2.900" stroke-linecap="round"/></svg></span></div><div class="card" style="left:1445.8px;top:102.0px;width:224.8px;height:218.2px"><span class="abs ct-i" style="left:7px;top:7.5px"><svg class="i" width="17" height="17" viewBox="0 0 16 16" fill="currentColor" style="color:#2c64ae;"><ellipse cx="8" cy="3" rx="6.200" ry="2.400"/><path d="M1.800 4.600c1 1.500 3.400 2 6.200 2s5.200-.5 6.200-2v2.800c-1 1.500-3.400 2-6.200 2s-5.200-.5-6.200-2zM1.800 8.800c1 1.500 3.400 2 6.200 2s5.200-.5 6.200-2v2.800c-1 1.500-3.400 2-6.200 2s-5.200-.5-6.200-2zM1.800 12.900c1 1.500 3.400 2 6.200 2s5.200-.5 6.200-2v.6c0 1.300-2.800 2.300-6.200 2.300s-6.200-1-6.200-2.300z"/></svg></span><span class="abs ct" style="left:30px;top:5.5px;letter-spacing:-0.087px">Backup Server Datastores</span><span class="abs" style="left:23.6px;top:59.8px"><svg class="i" width="12" height="12" viewBox="0 0 16 16" fill="currentColor" style="color:#1a9f53;"><path d="M1 8.6 L3.4 6.2 L6.3 9.1 L12.6 2.8 L15 5.2 L6.3 13.9 Z"/></svg></span><span class="abs bt" style="left:43.799999999999955px;top:57.80000000000001px">Online</span><span class="abs bt r" style="left:140.60000000000014px;width:40px;top:57.80000000000001px">5</span><span class="abs" style="left:188.00000000000006px;top:59.80000000000001px"><svg class="i" width="12.5" height="12.5" viewBox="0 0 16 16" fill="currentColor" style="color:#222;"><circle cx="6.700" cy="6.700" r="4.700" fill="none" stroke="currentColor" stroke-width="2.400"/><path d="M10.400 10.400l3.900 3.900" stroke="currentColor" stroke-width="2.900" stroke-linecap="round"/></svg></span><span class="abs" style="left:23.6px;top:93.4px"><svg class="i" width="12" height="12" viewBox="0 0 16 16" fill="currentColor" style="color:#222;"><path d="M14.6 4.3l-2.5 2.5-2.3-.5-.5-2.3 2.5-2.5a4 4 0 0 0-5 5.2L1.6 11.900a1.700 1.700 0 0 0 2.400 2.400l5.200-5.200a4 4 0 0 0 5.400-4.800z"/></svg></span><span class="abs bt" style="left:43.799999999999955px;top:91.4px">Under Maintenance</span><span class="abs bt r" style="left:140.60000000000014px;width:40px;top:91.4px">0</span><span class="abs" style="left:188.00000000000006px;top:93.4px"><svg class="i" width="12.5" height="12.5" viewBox="0 0 16 16" fill="currentColor" style="color:#222;"><circle cx="6.700" cy="6.700" r="4.700" fill="none" stroke="currentColor" stroke-width="2.400"/><path d="M10.400 10.400l3.900 3.900" stroke="currentColor" stroke-width="2.900" stroke-linecap="round"/></svg></span><span class="abs" style="left:23.35px;top:126.55px"><svg class="i" width="12.5" height="12.5" viewBox="0 0 16 16" fill="currentColor" style="color:#d9b21c;"><path d="M8 1L15.500 14.500H.5z"/><path d="M8 5.500v4.500" stroke="#fff" stroke-width="1.800"/><circle cx="8" cy="12" r="1" fill="#fff"/></svg></span><span class="abs bt" style="left:43.799999999999955px;top:124.80000000000001px">High usage</span><span class="abs bt r" style="left:140.60000000000014px;width:40px;top:124.80000000000001px">0</span><span class="abs" style="left:188.00000000000006px;top:126.80000000000001px"><svg class="i" width="12.5" height="12.5" viewBox="0 0 16 16" fill="currentColor" style="color:#222;"><circle cx="6.700" cy="6.700" r="4.700" fill="none" stroke="currentColor" stroke-width="2.400"/><path d="M10.400 10.400l3.900 3.900" stroke="currentColor" stroke-width="2.900" stroke-linecap="round"/></svg></span><span class="abs" style="left:23.6px;top:154.6px"><svg class="i" width="12" height="12" viewBox="0 0 16 16" fill="currentColor" style="color:#ccc;"><circle cx="8" cy="8" r="6.500"/><path d="M6 6.300a2 2 0 1 1 2.800 1.900c-.6.300-.8.700-.8 1.400" fill="none" stroke="#fff" stroke-width="1.500"/><circle cx="8" cy="11.800" r=".9" fill="#fff"/></svg></span><span class="abs bt" style="left:43.799999999999955px;top:152.60000000000002px">Unknown</span><span class="abs bt r" style="left:140.60000000000014px;width:40px;top:152.60000000000002px">0</span><span class="abs" style="left:188.00000000000006px;top:154.60000000000002px"><svg class="i" width="12.5" height="12.5" viewBox="0 0 16 16" fill="currentColor" style="color:#222;"><circle cx="6.700" cy="6.700" r="4.700" fill="none" stroke="currentColor" stroke-width="2.400"/><path d="M10.400 10.400l3.900 3.900" stroke="currentColor" stroke-width="2.900" stroke-linecap="round"/></svg></span><span class="abs" style="left:23.1px;top:181.9px"><svg class="i" width="13" height="13" viewBox="0 0 16 16" fill="currentColor" style="color:#222;"><ellipse cx="8" cy="3" rx="6.200" ry="2.400"/><path d="M1.800 4.600c1 1.500 3.400 2 6.200 2s5.200-.5 6.200-2v2.800c-1 1.500-3.400 2-6.200 2s-5.200-.5-6.200-2zM1.800 8.800c1 1.500 3.400 2 6.200 2s5.200-.5 6.200-2v2.800c-1 1.500-3.400 2-6.200 2s-5.200-.5-6.200-2zM1.800 12.900c1 1.500 3.400 2 6.200 2s5.200-.5 6.200-2v.6c0 1.300-2.800 2.300-6.200 2.300s-6.200-1-6.200-2.300z"/></svg></span><span class="abs bt" style="left:43.799999999999955px;top:180.39999999999998px">All</span><span class="abs bt r" style="left:140.60000000000014px;width:40px;top:180.39999999999998px">5</span><span class="abs" style="left:188.00000000000006px;top:182.39999999999998px"><svg class="i" width="12.5" height="12.5" viewBox="0 0 16 16" fill="currentColor" style="color:#222;"><circle cx="6.700" cy="6.700" r="4.700" fill="none" stroke="currentColor" stroke-width="2.400"/><path d="M10.400 10.400l3.900 3.900" stroke="currentColor" stroke-width="2.900" stroke-linecap="round"/></svg></span></div><div class="card" style="left:1685.6px;top:102.0px;width:385.2px;height:218.2px"><span class="abs ct-i" style="left:7px;top:10.100000000000001px"><svg class="i" width="18" height="18" viewBox="0 0 16 16" fill="currentColor" style="color:#2c64ae;"><path d="M9.800 1.300l4.900 4.900-8.500 8.500-4.900-4.900z"/><path d="M9.300 4l2.700 2.700-5.300 5.300L4 9.300z" fill="none" stroke="#fff" stroke-width=".8"/></svg></span><span class="abs ct" style="left:33.6px;top:8.6px;letter-spacing:0.105px">Subscription Status</span><span class="sbtn abs" style="left:327.0px;top:8.799999999999997px;width:50.4px;height:23.200px">Details</span><span class="abs" style="left:33.5px;top:107.9px"><svg class="i" width="45" height="45" viewBox="0 0 16 16" fill="currentColor" style="color:#1a9f53;"><path d="M1 8.6 L3.4 6.2 L6.3 9.1 L12.6 2.8 L15 5.2 L6.3 13.9 Z"/></svg></span><span class="abs sub" style="left:82.20000000000005px;width:300px;top:101.8px">Your subscription status is<br>valid.</span></div><div class="card" style="left:242.6px;top:337.4px;width:598.2px;height:424.6px"><span class="abs ct-i" style="left:6px;top:9.2px"><svg class="i" width="18" height="18" viewBox="0 0 16 16" fill="currentColor" style="color:#2c64ae;"><path d="M1 1.600h14v9.800H1z" fill="none" stroke="currentColor" stroke-width="1.800"/><path d="M1 8.800h14v2.600H1zM6 11.400h4l.5 2.300h1.500v1.100H4v-1.100h1.500z"/></svg></span><span class="abs ct" style="left:32.5px;top:7.7px;letter-spacing:-0.112px">Guests With the Highest CPU Usage</span><span class="abs" style="left:13.099999999999966px;top:58.3px"><svg class="i" width="13" height="13" viewBox="0 0 16 16" fill="currentColor" style="color:#222;"><path d="M8 .8l6.500 3v8.400L8 15.200 1.500 12.200V3.800z"/><path d="M8 .8l6.500 3L8 6.800 1.500 3.800z" fill="#fff" opacity=".35"/><path d="M8 6.800v8.400" stroke="#fff" stroke-width=".8" opacity=".6"/></svg></span><span class="abs bt" style="left:35.0px;top:56.8px">alnitak<span style="margin:0 9px">-</span>nunki (169)</span><span class="abs" style="left:190.59999999999997px;top:58.099999999999994px"><svg class="i" width="12.5" height="12.5" viewBox="0 0 16 16" fill="currentColor" style="color:#2c64ae;"><path d="M11.300 9.200v3.300a1.400 1.400 0 0 1-1.400 1.400H3.500a1.400 1.400 0 0 1-1.400-1.400V6.100a1.400 1.400 0 0 1 1.400-1.400H7.500" fill="none" stroke="currentColor" stroke-width="1.500"/><path d="M9.600 1.400h5v5zM13.800 2.200L7.400 8.600" stroke="currentColor" stroke-width="1.700" fill="currentColor"/></svg></span><span class="abs bar" style="left:222.39999999999998px;width:359.2px;top:56.8px;background:linear-gradient(to right,#7d9e3a 0%,#7d9e3a 10%,#52a348 25%,#45a34a 50%,#4da349 72%,#6fa03f 85%,#7a9f3c 100%)"></span><span class="abs" style="left:14.099999999999966px;top:95.02px"><svg class="i" width="13" height="13" viewBox="0 0 16 16" fill="currentColor" style="color:#222;"><path d="M1 1.600h14v9.800H1z" fill="none" stroke="currentColor" stroke-width="1.800"/><path d="M1 8.800h14v2.600H1zM6 11.400h4l.5 2.300h1.500v1.100H4v-1.100h1.500z"/></svg></span><span class="abs bt" style="left:35.0px;top:93.52px">kochab<span style="margin:0 9px">-</span>pollux (212)</span><span class="abs" style="left:190.59999999999997px;top:94.82px"><svg class="i" width="12.5" height="12.5" viewBox="0 0 16 16" fill="currentColor" style="color:#2c64ae;"><path d="M11.300 9.200v3.300a1.400 1.400 0 0 1-1.400 1.400H3.500a1.400 1.400 0 0 1-1.400-1.400V6.100a1.400 1.400 0 0 1 1.400-1.400H7.500" fill="none" stroke="currentColor" stroke-width="1.500"/><path d="M9.600 1.400h5v5zM13.800 2.200L7.400 8.600" stroke="currentColor" stroke-width="1.700" fill="currentColor"/></svg></span><span class="abs bar" style="left:222.39999999999998px;width:359.2px;top:93.52px;background:linear-gradient(to right,#5fa545 0%,#5fa545 22%,#22a352 24%,#22a352 40%,#3da64f 41%,#22a352 42%,#22a352 72%,#7fa33b 74%,#7fa33b 86%,#4aa449 88%,#4aa449 100%)"></span><span class="abs" style="left:14.099999999999966px;top:131.74px"><svg class="i" width="13" height="13" viewBox="0 0 16 16" fill="currentColor" style="color:#222;"><path d="M1 1.600h14v9.800H1z" fill="none" stroke="currentColor" stroke-width="1.800"/><path d="M1 8.800h14v2.600H1zM6 11.400h4l.5 2.300h1.500v1.100H4v-1.100h1.500z"/></svg></span><span class="abs bt" style="left:35.0px;top:130.24px">kochab<span style="margin:0 9px">-</span>maia (240)</span><span class="abs" style="left:190.59999999999997px;top:131.54000000000002px"><svg class="i" width="12.5" height="12.5" viewBox="0 0 16 16" fill="currentColor" style="color:#2c64ae;"><path d="M11.300 9.200v3.300a1.400 1.400 0 0 1-1.400 1.400H3.500a1.400 1.400 0 0 1-1.400-1.400V6.100a1.400 1.400 0 0 1 1.400-1.400H7.500" fill="none" stroke="currentColor" stroke-width="1.500"/><path d="M9.600 1.400h5v5zM13.800 2.200L7.400 8.600" stroke="currentColor" stroke-width="1.700" fill="currentColor"/></svg></span><span class="abs bar" style="left:222.39999999999998px;width:359.2px;top:130.24px;background:linear-gradient(to right,#2aa24e 0%,#2aa24e 36%,#45a54b 37%,#2aa24e 38%,#2aa24e 73%,#45a54b 75%,#2aa24e 78%,#2aa24e 100%)"></span><span class="abs" style="left:13.099999999999966px;top:168.45999999999998px"><svg class="i" width="13" height="13" viewBox="0 0 16 16" fill="currentColor" style="color:#222;"><path d="M8 .8l6.500 3v8.400L8 15.200 1.500 12.200V3.800z"/><path d="M8 .8l6.500 3L8 6.800 1.500 3.800z" fill="#fff" opacity=".35"/><path d="M8 6.800v8.400" stroke="#fff" stroke-width=".8" opacity=".6"/></svg></span><span class="abs bt" style="left:35.0px;top:166.95999999999998px">alnitak<span style="margin:0 9px">-</span>aldebaran (252)</span><span class="abs" style="left:190.59999999999997px;top:168.26px"><svg class="i" width="12.5" height="12.5" viewBox="0 0 16 16" fill="currentColor" style="color:#2c64ae;"><path d="M11.300 9.200v3.300a1.400 1.400 0 0 1-1.400 1.400H3.500a1.400 1.400 0 0 1-1.400-1.400V6.100a1.400 1.400 0 0 1 1.400-1.400H7.500" fill="none" stroke="currentColor" stroke-width="1.500"/><path d="M9.600 1.400h5v5zM13.800 2.200L7.400 8.600" stroke="currentColor" stroke-width="1.700" fill="currentColor"/></svg></span><span class="abs bar" style="left:222.39999999999998px;width:359.2px;top:166.95999999999998px;background:linear-gradient(to right,#2aa24e 0%,#3ba44c 5%,#2aa24e 10%,#2aa24e 52%,#4aa64a 54%,#2aa24e 56%,#2aa24e 100%)"></span><span class="abs" style="left:13.099999999999966px;top:205.18px"><svg class="i" width="13" height="13" viewBox="0 0 16 16" fill="currentColor" style="color:#222;"><path d="M8 .8l6.500 3v8.400L8 15.200 1.500 12.200V3.800z"/><path d="M8 .8l6.500 3L8 6.800 1.500 3.800z" fill="#fff" opacity=".35"/><path d="M8 6.800v8.400" stroke="#fff" stroke-width=".8" opacity=".6"/></svg></span><span class="abs bt" style="left:35.0px;top:203.68px">alnitak<span style="margin:0 9px">-</span>electra (253)</span><span class="abs" style="left:190.59999999999997px;top:204.98000000000002px"><svg class="i" width="12.5" height="12.5" viewBox="0 0 16 16" fill="currentColor" style="color:#2c64ae;"><path d="M11.300 9.200v3.300a1.400 1.400 0 0 1-1.400 1.400H3.500a1.400 1.400 0 0 1-1.400-1.400V6.100a1.400 1.400 0 0 1 1.400-1.400H7.500" fill="none" stroke="currentColor" stroke-width="1.500"/><path d="M9.600 1.400h5v5zM13.800 2.200L7.400 8.600" stroke="currentColor" stroke-width="1.700" fill="currentColor"/></svg></span><span class="abs bar" style="left:222.39999999999998px;width:359.2px;top:203.68px;background:linear-gradient(to right,#22a352 0%,#22a352 100%)"></span><span class="abs" style="left:14.099999999999966px;top:241.89999999999998px"><svg class="i" width="13" height="13" viewBox="0 0 16 16" fill="currentColor" style="color:#222;"><path d="M1 1.600h14v9.800H1z" fill="none" stroke="currentColor" stroke-width="1.800"/><path d="M1 8.800h14v2.600H1zM6 11.400h4l.5 2.300h1.500v1.100H4v-1.100h1.500z"/></svg></span><span class="abs bt" style="left:35.0px;top:240.39999999999998px">kochab<span style="margin:0 9px">-</span>mintaka (214)</span><span class="abs" style="left:190.59999999999997px;top:241.7px"><svg class="i" width="12.5" height="12.5" viewBox="0 0 16 16" fill="currentColor" style="color:#2c64ae;"><path d="M11.300 9.200v3.300a1.400 1.400 0 0 1-1.400 1.400H3.500a1.400 1.400 0 0 1-1.400-1.400V6.100a1.400 1.400 0 0 1 1.400-1.400H7.500" fill="none" stroke="currentColor" stroke-width="1.500"/><path d="M9.600 1.400h5v5zM13.800 2.200L7.400 8.600" stroke="currentColor" stroke-width="1.700" fill="currentColor"/></svg></span><span class="abs bar" style="left:222.39999999999998px;width:359.2px;top:240.39999999999998px;background:linear-gradient(to right,#30a34e 0%,#22a352 15%,#22a352 40%,#3aa54c 42%,#22a352 44%,#2aa350 100%)"></span><span class="abs" style="left:14.099999999999966px;top:278.62px"><svg class="i" width="13" height="13" viewBox="0 0 16 16" fill="currentColor" style="color:#222;"><path d="M1 1.600h14v9.800H1z" fill="none" stroke="currentColor" stroke-width="1.800"/><path d="M1 8.800h14v2.600H1zM6 11.400h4l.5 2.300h1.500v1.100H4v-1.100h1.500z"/></svg></span><span class="abs bt" style="left:35.0px;top:277.12px">kochab<span style="margin:0 9px">-</span>izar (225)</span><span class="abs" style="left:190.59999999999997px;top:278.42px"><svg class="i" width="12.5" height="12.5" viewBox="0 0 16 16" fill="currentColor" style="color:#2c64ae;"><path d="M11.300 9.200v3.300a1.400 1.400 0 0 1-1.400 1.400H3.500a1.400 1.400 0 0 1-1.400-1.400V6.100a1.400 1.400 0 0 1 1.400-1.400H7.500" fill="none" stroke="currentColor" stroke-width="1.500"/><path d="M9.600 1.400h5v5zM13.800 2.200L7.400 8.600" stroke="currentColor" stroke-width="1.700" fill="currentColor"/></svg></span><span class="abs bar" style="left:222.39999999999998px;width:359.2px;top:277.12px;background:linear-gradient(to right,#2fa34e 0%,#3fa54b 17%,#6aa640 17.5%,#2fa34e 18.5%,#2fa34e 59%,#7aa63c 59.5%,#2fa34e 60.5%,#36a44c 100%)"></span><span class="abs" style="left:14.099999999999966px;top:315.34px"><svg class="i" width="13" height="13" viewBox="0 0 16 16" fill="currentColor" style="color:#222;"><path d="M1 1.600h14v9.800H1z" fill="none" stroke="currentColor" stroke-width="1.800"/><path d="M1 8.800h14v2.600H1zM6 11.400h4l.5 2.300h1.500v1.100H4v-1.100h1.500z"/></svg></span><span class="abs bt" style="left:35.0px;top:313.84px">kochab<span style="margin:0 9px">-</span>electra (206)</span><span class="abs" style="left:190.59999999999997px;top:315.14px"><svg class="i" width="12.5" height="12.5" viewBox="0 0 16 16" fill="currentColor" style="color:#2c64ae;"><path d="M11.300 9.200v3.300a1.400 1.400 0 0 1-1.400 1.400H3.500a1.400 1.400 0 0 1-1.400-1.400V6.100a1.400 1.400 0 0 1 1.400-1.400H7.500" fill="none" stroke="currentColor" stroke-width="1.500"/><path d="M9.600 1.400h5v5zM13.800 2.200L7.400 8.600" stroke="currentColor" stroke-width="1.700" fill="currentColor"/></svg></span><span class="abs bar" style="left:222.39999999999998px;width:359.2px;top:313.84px;background:linear-gradient(to right,#22a352 0%,#22a352 100%)"></span><span class="abs" style="left:14.099999999999966px;top:352.06px"><svg class="i" width="13" height="13" viewBox="0 0 16 16" fill="currentColor" style="color:#222;"><path d="M1 1.600h14v9.800H1z" fill="none" stroke="currentColor" stroke-width="1.800"/><path d="M1 8.800h14v2.600H1zM6 11.400h4l.5 2.300h1.500v1.100H4v-1.100h1.500z"/></svg></span><span class="abs bt" style="left:35.0px;top:350.56px">kochab<span style="margin:0 9px">-</span>spica (219)</span><span class="abs" style="left:190.59999999999997px;top:351.86px"><svg class="i" width="12.5" height="12.5" viewBox="0 0 16 16" fill="currentColor" style="color:#2c64ae;"><path d="M11.300 9.200v3.300a1.400 1.400 0 0 1-1.400 1.400H3.500a1.400 1.400 0 0 1-1.400-1.400V6.100a1.400 1.400 0 0 1 1.400-1.400H7.500" fill="none" stroke="currentColor" stroke-width="1.500"/><path d="M9.600 1.400h5v5zM13.800 2.200L7.400 8.600" stroke="currentColor" stroke-width="1.700" fill="currentColor"/></svg></span><span class="abs bar" style="left:222.39999999999998px;width:359.2px;top:350.56px;background:linear-gradient(to right,#3ba54b 0%,#3ba54b 14%,#22a352 16%,#22a352 42%,#35a54d 45%,#22a352 48%,#22a352 75%,#3aa54c 80%,#3aa54c 100%)"></span><span class="abs" style="left:14.099999999999966px;top:388.78000000000003px"><svg class="i" width="13" height="13" viewBox="0 0 16 16" fill="currentColor" style="color:#222;"><path d="M1 1.600h14v9.800H1z" fill="none" stroke="currentColor" stroke-width="1.800"/><path d="M1 8.800h14v2.600H1zM6 11.400h4l.5 2.300h1.500v1.100H4v-1.100h1.500z"/></svg></span><span class="abs bt" style="left:35.0px;top:387.28000000000003px">mirfak<span style="margin:0 9px">-</span>alnilam (126)</span><span class="abs" style="left:190.59999999999997px;top:388.58000000000004px"><svg class="i" width="12.5" height="12.5" viewBox="0 0 16 16" fill="currentColor" style="color:#2c64ae;"><path d="M11.300 9.200v3.300a1.400 1.400 0 0 1-1.400 1.400H3.500a1.400 1.400 0 0 1-1.400-1.400V6.100a1.400 1.400 0 0 1 1.400-1.400H7.500" fill="none" stroke="currentColor" stroke-width="1.500"/><path d="M9.600 1.400h5v5zM13.800 2.200L7.400 8.600" stroke="currentColor" stroke-width="1.700" fill="currentColor"/></svg></span><span class="abs bar" style="left:222.39999999999998px;width:359.2px;top:387.28000000000003px;background:linear-gradient(to right,#22a352 0%,#22a352 35%,#2fa54e 37%,#22a352 40%,#22a352 100%)"></span></div><div class="card" style="left:857.8px;top:337.4px;width:597.2px;height:424.6px"><span class="abs ct-i" style="left:6px;top:9.95px"><svg class="i" width="16.5" height="16.5" viewBox="0 0 16 16" fill="currentColor" style="color:#2c64ae;"><path d="M2.800 .4h10.400a.9.9 0 0 1 .9.9v13.400a.9.9 0 0 1-.9.900H2.800a.9.9 0 0 1-.9-.9V1.300a.9.9 0 0 1 .9-.9z"/><g fill="#fff" opacity=".4"><rect x="4.300" y="2.800" width="1.400" height="1.400"/><rect x="7.300" y="2.800" width="1.400" height="1.400"/><rect x="10.300" y="2.800" width="1.400" height="1.400"/><rect x="4.300" y="6" width="1.400" height="1.400"/><rect x="7.300" y="6" width="1.400" height="1.400"/><rect x="10.300" y="6" width="1.400" height="1.400"/></g><rect x="6.800" y="12.600" width="2.400" height="2.400" fill="#fff" opacity=".9"/></svg></span><span class="abs ct" style="left:30px;top:7.7px;letter-spacing:-0.099px">Nodes With the Highest CPU Usage</span><span class="abs" style="left:14.900000000000091px;top:58.8px"><svg class="i" width="12" height="12" viewBox="0 0 16 16" fill="currentColor" style="color:#222;"><path d="M2 .3h12a.6.6 0 0 1 .6.6v14.200a.6.6 0 0 1-.6.600H2a.6.6 0 0 1-.6-.6V.9A.6.6 0 0 1 2 .3z"/><g fill="#fff" opacity=".75"><rect x="4" y="2.600" width="1.500" height="1.500"/><rect x="7.250" y="2.600" width="1.500" height="1.500"/><rect x="10.500" y="2.600" width="1.500" height="1.500"/><rect x="4" y="5.800" width="1.500" height="1.500"/><rect x="7.250" y="5.800" width="1.500" height="1.500"/><rect x="10.500" y="5.800" width="1.500" height="1.500"/><rect x="4" y="9" width="1.500" height="1.500"/><rect x="10.500" y="9" width="1.500" height="1.500"/><rect x="6.700" y="12.300" width="2.600" height="2.600"/></g></svg></span><span class="abs bt" style="left:33.200000000000045px;top:56.8px">alnitak<span style="margin:0 9px">-</span>alkaid</span><span class="abs" style="left:156.40000000000015px;top:58.099999999999994px"><svg class="i" width="12.5" height="12.5" viewBox="0 0 16 16" fill="currentColor" style="color:#2c64ae;"><path d="M11.300 9.200v3.300a1.400 1.400 0 0 1-1.400 1.400H3.500a1.400 1.400 0 0 1-1.400-1.400V6.100a1.400 1.400 0 0 1 1.400-1.400H7.500" fill="none" stroke="currentColor" stroke-width="1.500"/><path d="M9.600 1.400h5v5zM13.800 2.200L7.400 8.600" stroke="currentColor" stroke-width="1.700" fill="currentColor"/></svg></span><span class="abs bar" style="left:187.79999999999995px;width:393.6px;top:56.8px;background:linear-gradient(to right,#2fa24e 0%,#36a34c 8%,#2ba24f 9%,#2ba24f 100%)"></span><span class="abs" style="left:14.900000000000091px;top:95.52px"><svg class="i" width="12" height="12" viewBox="0 0 16 16" fill="currentColor" style="color:#222;"><path d="M2 .3h12a.6.6 0 0 1 .6.6v14.200a.6.6 0 0 1-.6.600H2a.6.6 0 0 1-.6-.6V.9A.6.6 0 0 1 2 .3z"/><g fill="#fff" opacity=".75"><rect x="4" y="2.600" width="1.500" height="1.500"/><rect x="7.250" y="2.600" width="1.500" height="1.500"/><rect x="10.500" y="2.600" width="1.500" height="1.500"/><rect x="4" y="5.800" width="1.500" height="1.500"/><rect x="7.250" y="5.800" width="1.500" height="1.500"/><rect x="10.500" y="5.800" width="1.500" height="1.500"/><rect x="4" y="9" width="1.500" height="1.500"/><rect x="10.500" y="9" width="1.500" height="1.500"/><rect x="6.700" y="12.300" width="2.600" height="2.600"/></g></svg></span><span class="abs bt" style="left:33.200000000000045px;top:93.52px">kochab<span style="margin:0 9px">-</span>nunki</span><span class="abs" style="left:156.40000000000015px;top:94.82px"><svg class="i" width="12.5" height="12.5" viewBox="0 0 16 16" fill="currentColor" style="color:#2c64ae;"><path d="M11.300 9.200v3.300a1.400 1.400 0 0 1-1.400 1.400H3.500a1.400 1.400 0 0 1-1.400-1.400V6.100a1.400 1.400 0 0 1 1.400-1.400H7.500" fill="none" stroke="currentColor" stroke-width="1.500"/><path d="M9.600 1.400h5v5zM13.800 2.200L7.400 8.600" stroke="currentColor" stroke-width="1.700" fill="currentColor"/></svg></span><span class="abs bar" style="left:187.79999999999995px;width:393.6px;top:93.52px;background:linear-gradient(to right,#33a34d 0%,#33a34d 36%,#48a449 37%,#48a449 43%,#33a34d 44%,#33a34d 60%,#40a44b 61%,#33a34d 76%,#3ea44b 78%,#33a34d 92%,#33a34d 100%)"></span><span class="abs" style="left:14.900000000000091px;top:132.24px"><svg class="i" width="12" height="12" viewBox="0 0 16 16" fill="currentColor" style="color:#222;"><path d="M2 .3h12a.6.6 0 0 1 .6.6v14.200a.6.6 0 0 1-.6.600H2a.6.6 0 0 1-.6-.6V.9A.6.6 0 0 1 2 .3z"/><g fill="#fff" opacity=".75"><rect x="4" y="2.600" width="1.500" height="1.500"/><rect x="7.250" y="2.600" width="1.500" height="1.500"/><rect x="10.500" y="2.600" width="1.500" height="1.500"/><rect x="4" y="5.800" width="1.500" height="1.500"/><rect x="7.250" y="5.800" width="1.500" height="1.500"/><rect x="10.500" y="5.800" width="1.500" height="1.500"/><rect x="4" y="9" width="1.500" height="1.500"/><rect x="10.500" y="9" width="1.500" height="1.500"/><rect x="6.700" y="12.300" width="2.600" height="2.600"/></g></svg></span><span class="abs bt" style="left:33.200000000000045px;top:130.24px">kochab<span style="margin:0 9px">-</span>mirfak</span><span class="abs" style="left:156.40000000000015px;top:131.54000000000002px"><svg class="i" width="12.5" height="12.5" viewBox="0 0 16 16" fill="currentColor" style="color:#2c64ae;"><path d="M11.300 9.200v3.300a1.400 1.400 0 0 1-1.400 1.400H3.500a1.400 1.400 0 0 1-1.400-1.400V6.100a1.400 1.400 0 0 1 1.400-1.400H7.500" fill="none" stroke="currentColor" stroke-width="1.500"/><path d="M9.600 1.400h5v5zM13.800 2.200L7.400 8.600" stroke="currentColor" stroke-width="1.700" fill="currentColor"/></svg></span><span class="abs bar" style="left:187.79999999999995px;width:393.6px;top:130.24px;background:linear-gradient(to right,#2ea24e 0%,#2ea24e 36%,#45a44a 37%,#45a44a 43%,#2ea24e 44%,#2ea24e 74%,#3fa44b 75%,#2ea24e 76%,#2ea24e 100%)"></span><span class="abs" style="left:14.900000000000091px;top:168.95999999999998px"><svg class="i" width="12" height="12" viewBox="0 0 16 16" fill="currentColor" style="color:#222;"><path d="M2 .3h12a.6.6 0 0 1 .6.6v14.200a.6.6 0 0 1-.6.600H2a.6.6 0 0 1-.6-.6V.9A.6.6 0 0 1 2 .3z"/><g fill="#fff" opacity=".75"><rect x="4" y="2.600" width="1.500" height="1.500"/><rect x="7.250" y="2.600" width="1.500" height="1.500"/><rect x="10.500" y="2.600" width="1.500" height="1.500"/><rect x="4" y="5.800" width="1.500" height="1.500"/><rect x="7.250" y="5.800" width="1.500" height="1.500"/><rect x="10.500" y="5.800" width="1.500" height="1.500"/><rect x="4" y="9" width="1.500" height="1.500"/><rect x="10.500" y="9" width="1.500" height="1.500"/><rect x="6.700" y="12.300" width="2.600" height="2.600"/></g></svg></span><span class="abs bt" style="left:33.200000000000045px;top:166.95999999999998px">procyon<span style="margin:0 9px">-</span>procyon</span><span class="abs" style="left:156.40000000000015px;top:168.26px"><svg class="i" width="12.5" height="12.5" viewBox="0 0 16 16" fill="currentColor" style="color:#2c64ae;"><path d="M11.300 9.200v3.300a1.400 1.400 0 0 1-1.400 1.400H3.500a1.400 1.400 0 0 1-1.400-1.400V6.100a1.400 1.400 0 0 1 1.400-1.400H7.500" fill="none" stroke="currentColor" stroke-width="1.500"/><path d="M9.600 1.400h5v5zM13.800 2.200L7.400 8.600" stroke="currentColor" stroke-width="1.700" fill="currentColor"/></svg></span><span class="abs bar" style="left:187.79999999999995px;width:393.6px;top:166.95999999999998px;background:linear-gradient(to right,#14a055 0%,#14a055 13%,#35a54f 14%,#14a055 15%,#14a055 30%,#30a550 30.5%,#14a055 31.5%,#14a055 38%,#30a550 39%,#14a055 40%,#3aa44c 42%,#3aa44c 75%,#2ba250 77%,#2ba250 88%,#3fa44b 90%,#3fa44b 100%)"></span><span class="abs" style="left:14.900000000000091px;top:205.68px"><svg class="i" width="12" height="12" viewBox="0 0 16 16" fill="currentColor" style="color:#777;"><path d="M2.300 1.100h11.400v13.800H2.300z" fill="none" stroke="currentColor" stroke-width="1.600"/><path d="M5 4h1.600M7.200 4h1.600M9.400 4H11M5 6.800h1.600M7.200 6.800h1.600M9.400 6.800H11M5 9.600h1.600M9.400 9.600H11M6.800 15v-2.800h2.400V15" stroke="currentColor" stroke-width="1.300" fill="none"/></svg></span><span class="abs bt" style="left:33.200000000000045px;top:203.68px">mirfak<span style="margin:0 9px">-</span>zaniah</span><span class="abs" style="left:156.40000000000015px;top:204.98000000000002px"><svg class="i" width="12.5" height="12.5" viewBox="0 0 16 16" fill="currentColor" style="color:#2c64ae;"><path d="M11.300 9.200v3.300a1.400 1.400 0 0 1-1.400 1.400H3.500a1.400 1.400 0 0 1-1.400-1.400V6.100a1.400 1.400 0 0 1 1.400-1.400H7.500" fill="none" stroke="currentColor" stroke-width="1.500"/><path d="M9.600 1.400h5v5zM13.800 2.200L7.400 8.600" stroke="currentColor" stroke-width="1.700" fill="currentColor"/></svg></span><span class="abs bar" style="left:187.79999999999995px;width:393.6px;top:203.68px;background:linear-gradient(to right,#14a055 0%,#14a055 30%,#35a54f 30.5%,#14a055 31.5%,#14a055 37.5%,#72a03b 38%,#72a03b 46.5%,#14a055 47%,#14a055 88%,#35a54f 88.5%,#14a055 89.5%,#14a055 100%)"></span><span class="abs" style="left:14.900000000000091px;top:242.39999999999998px"><svg class="i" width="12" height="12" viewBox="0 0 16 16" fill="currentColor" style="color:#222;"><path d="M2 .3h12a.6.6 0 0 1 .6.6v14.200a.6.6 0 0 1-.6.600H2a.6.6 0 0 1-.6-.6V.9A.6.6 0 0 1 2 .3z"/><g fill="#fff" opacity=".75"><rect x="4" y="2.600" width="1.500" height="1.500"/><rect x="7.250" y="2.600" width="1.500" height="1.500"/><rect x="10.500" y="2.600" width="1.500" height="1.500"/><rect x="4" y="5.800" width="1.500" height="1.500"/><rect x="7.250" y="5.800" width="1.500" height="1.500"/><rect x="10.500" y="5.800" width="1.500" height="1.500"/><rect x="4" y="9" width="1.500" height="1.500"/><rect x="10.500" y="9" width="1.500" height="1.500"/><rect x="6.700" y="12.300" width="2.600" height="2.600"/></g></svg></span><span class="abs bt" style="left:33.200000000000045px;top:240.39999999999998px">alnitak<span style="margin:0 9px">-</span>nunki</span><span class="abs" style="left:156.40000000000015px;top:241.7px"><svg class="i" width="12.5" height="12.5" viewBox="0 0 16 16" fill="currentColor" style="color:#2c64ae;"><path d="M11.300 9.200v3.300a1.400 1.400 0 0 1-1.400 1.400H3.500a1.400 1.400 0 0 1-1.400-1.400V6.100a1.400 1.400 0 0 1 1.400-1.400H7.500" fill="none" stroke="currentColor" stroke-width="1.500"/><path d="M9.600 1.400h5v5zM13.800 2.200L7.400 8.600" stroke="currentColor" stroke-width="1.700" fill="currentColor"/></svg></span><span class="abs bar" style="left:187.79999999999995px;width:393.6px;top:240.39999999999998px;background:linear-gradient(to right,#2ba24f 0%,#2ba24f 100%)"></span><span class="abs" style="left:14.900000000000091px;top:279.12px"><svg class="i" width="12" height="12" viewBox="0 0 16 16" fill="currentColor" style="color:#222;"><path d="M2 .3h12a.6.6 0 0 1 .6.6v14.200a.6.6 0 0 1-.6.600H2a.6.6 0 0 1-.6-.6V.9A.6.6 0 0 1 2 .3z"/><g fill="#fff" opacity=".75"><rect x="4" y="2.600" width="1.500" height="1.500"/><rect x="7.250" y="2.600" width="1.500" height="1.500"/><rect x="10.500" y="2.600" width="1.500" height="1.500"/><rect x="4" y="5.800" width="1.500" height="1.500"/><rect x="7.250" y="5.800" width="1.500" height="1.500"/><rect x="10.500" y="5.800" width="1.500" height="1.500"/><rect x="4" y="9" width="1.500" height="1.500"/><rect x="10.500" y="9" width="1.500" height="1.500"/><rect x="6.700" y="12.300" width="2.600" height="2.600"/></g></svg></span><span class="abs bt" style="left:33.200000000000045px;top:277.12px">sabik<span style="margin:0 9px">-</span>sabik</span><span class="abs" style="left:156.40000000000015px;top:278.42px"><svg class="i" width="12.5" height="12.5" viewBox="0 0 16 16" fill="currentColor" style="color:#2c64ae;"><path d="M11.300 9.200v3.300a1.400 1.400 0 0 1-1.400 1.400H3.500a1.400 1.400 0 0 1-1.400-1.400V6.100a1.400 1.400 0 0 1 1.400-1.400H7.500" fill="none" stroke="currentColor" stroke-width="1.500"/><path d="M9.600 1.400h5v5zM13.800 2.200L7.400 8.600" stroke="currentColor" stroke-width="1.700" fill="currentColor"/></svg></span><span class="abs bar" style="left:187.79999999999995px;width:393.6px;top:277.12px;background:linear-gradient(to right,#14a055 0%,#14a055 13%,#35a54f 14%,#14a055 15%,#14a055 30%,#35a54f 30.5%,#14a055 31.5%,#14a055 37.5%,#72a03b 38%,#72a03b 46.5%,#14a055 47%,#14a055 100%)"></span><span class="abs" style="left:14.900000000000091px;top:315.84px"><svg class="i" width="12" height="12" viewBox="0 0 16 16" fill="currentColor" style="color:#222;"><path d="M2 .3h12a.6.6 0 0 1 .6.6v14.200a.6.6 0 0 1-.6.600H2a.6.6 0 0 1-.6-.6V.9A.6.6 0 0 1 2 .3z"/><g fill="#fff" opacity=".75"><rect x="4" y="2.600" width="1.500" height="1.500"/><rect x="7.250" y="2.600" width="1.500" height="1.500"/><rect x="10.500" y="2.600" width="1.500" height="1.500"/><rect x="4" y="5.800" width="1.500" height="1.500"/><rect x="7.250" y="5.800" width="1.500" height="1.500"/><rect x="10.500" y="5.800" width="1.500" height="1.500"/><rect x="4" y="9" width="1.500" height="1.500"/><rect x="10.500" y="9" width="1.500" height="1.500"/><rect x="6.700" y="12.300" width="2.600" height="2.600"/></g></svg></span><span class="abs bt" style="left:33.200000000000045px;top:313.84px">kochab<span style="margin:0 9px">-</span>izar</span><span class="abs" style="left:156.40000000000015px;top:315.14px"><svg class="i" width="12.5" height="12.5" viewBox="0 0 16 16" fill="currentColor" style="color:#2c64ae;"><path d="M11.300 9.200v3.300a1.400 1.400 0 0 1-1.400 1.400H3.500a1.400 1.400 0 0 1-1.400-1.400V6.100a1.400 1.400 0 0 1 1.400-1.400H7.500" fill="none" stroke="currentColor" stroke-width="1.500"/><path d="M9.600 1.400h5v5zM13.800 2.200L7.400 8.600" stroke="currentColor" stroke-width="1.700" fill="currentColor"/></svg></span><span class="abs bar" style="left:187.79999999999995px;width:393.6px;top:313.84px;background:linear-gradient(to right,#2ba24f 0%,#2ba24f 100%)"></span><span class="abs" style="left:14.900000000000091px;top:352.56px"><svg class="i" width="12" height="12" viewBox="0 0 16 16" fill="currentColor" style="color:#222;"><path d="M2 .3h12a.6.6 0 0 1 .6.6v14.200a.6.6 0 0 1-.6.600H2a.6.6 0 0 1-.6-.6V.9A.6.6 0 0 1 2 .3z"/><g fill="#fff" opacity=".75"><rect x="4" y="2.600" width="1.500" height="1.500"/><rect x="7.250" y="2.600" width="1.500" height="1.500"/><rect x="10.500" y="2.600" width="1.500" height="1.500"/><rect x="4" y="5.800" width="1.500" height="1.500"/><rect x="7.250" y="5.800" width="1.500" height="1.500"/><rect x="10.500" y="5.800" width="1.500" height="1.500"/><rect x="4" y="9" width="1.500" height="1.500"/><rect x="10.500" y="9" width="1.500" height="1.500"/><rect x="6.700" y="12.300" width="2.600" height="2.600"/></g></svg></span><span class="abs bt" style="left:33.200000000000045px;top:350.56px">mirfak<span style="margin:0 9px">-</span>mirfak</span><span class="abs" style="left:156.40000000000015px;top:351.86px"><svg class="i" width="12.5" height="12.5" viewBox="0 0 16 16" fill="currentColor" style="color:#2c64ae;"><path d="M11.300 9.200v3.300a1.400 1.400 0 0 1-1.400 1.400H3.500a1.400 1.400 0 0 1-1.400-1.400V6.100a1.400 1.400 0 0 1 1.400-1.400H7.500" fill="none" stroke="currentColor" stroke-width="1.500"/><path d="M9.600 1.400h5v5zM13.800 2.200L7.400 8.600" stroke="currentColor" stroke-width="1.700" fill="currentColor"/></svg></span><span class="abs bar" style="left:187.79999999999995px;width:393.6px;top:350.56px;background:linear-gradient(to right,#1fa152 0%,#1fa152 100%)"></span><span class="abs" style="left:14.900000000000091px;top:389.28000000000003px"><svg class="i" width="12" height="12" viewBox="0 0 16 16" fill="currentColor" style="color:#222;"><path d="M2 .3h12a.6.6 0 0 1 .6.6v14.200a.6.6 0 0 1-.6.600H2a.6.6 0 0 1-.6-.6V.9A.6.6 0 0 1 2 .3z"/><g fill="#fff" opacity=".75"><rect x="4" y="2.600" width="1.500" height="1.500"/><rect x="7.250" y="2.600" width="1.500" height="1.500"/><rect x="10.500" y="2.600" width="1.500" height="1.500"/><rect x="4" y="5.800" width="1.500" height="1.500"/><rect x="7.250" y="5.800" width="1.500" height="1.500"/><rect x="10.500" y="5.800" width="1.500" height="1.500"/><rect x="4" y="9" width="1.500" height="1.500"/><rect x="10.500" y="9" width="1.500" height="1.500"/><rect x="6.700" y="12.300" width="2.600" height="2.600"/></g></svg></span><span class="abs bt" style="left:33.200000000000045px;top:387.28000000000003px">sadr<span style="margin:0 9px">-</span>sadr</span><span class="abs" style="left:156.40000000000015px;top:388.58000000000004px"><svg class="i" width="12.5" height="12.5" viewBox="0 0 16 16" fill="currentColor" style="color:#2c64ae;"><path d="M11.300 9.200v3.300a1.400 1.400 0 0 1-1.400 1.400H3.500a1.400 1.400 0 0 1-1.400-1.400V6.100a1.400 1.400 0 0 1 1.400-1.400H7.500" fill="none" stroke="currentColor" stroke-width="1.500"/><path d="M9.600 1.400h5v5zM13.800 2.200L7.400 8.600" stroke="currentColor" stroke-width="1.700" fill="currentColor"/></svg></span><span class="abs bar" style="left:187.79999999999995px;width:393.6px;top:387.28000000000003px;background:linear-gradient(to right,#14a055 0%,#14a055 100%)"></span></div><div class="card" style="left:1471.8px;top:337.4px;width:597.8px;height:424.6px"><span class="abs ct-i" style="left:7.2px;top:9.95px"><svg class="i" width="16.5" height="16.5" viewBox="0 0 16 16" fill="currentColor" style="color:#2c64ae;"><path d="M2.800 .4h10.400a.9.9 0 0 1 .9.9v13.400a.9.9 0 0 1-.9.900H2.800a.9.9 0 0 1-.9-.9V1.300a.9.9 0 0 1 .9-.9z"/><g fill="#fff" opacity=".4"><rect x="4.300" y="2.800" width="1.400" height="1.400"/><rect x="7.300" y="2.800" width="1.400" height="1.400"/><rect x="10.300" y="2.800" width="1.400" height="1.400"/><rect x="4.300" y="6" width="1.400" height="1.400"/><rect x="7.300" y="6" width="1.400" height="1.400"/><rect x="10.300" y="6" width="1.400" height="1.400"/></g><rect x="6.800" y="12.600" width="2.400" height="2.400" fill="#fff" opacity=".9"/></svg></span><span class="abs ct" style="left:31.5px;top:7.7px;letter-spacing:0.029px">Nodes With the Highest Memory Usage</span><span class="abs" style="left:15.700000000000045px;top:58.8px"><svg class="i" width="12" height="12" viewBox="0 0 16 16" fill="currentColor" style="color:#777;"><path d="M2.300 1.100h11.400v13.800H2.300z" fill="none" stroke="currentColor" stroke-width="1.600"/><path d="M5 4h1.600M7.200 4h1.600M9.400 4H11M5 6.800h1.600M7.200 6.800h1.600M9.400 6.800H11M5 9.600h1.600M9.400 9.600H11M6.800 15v-2.800h2.400V15" stroke="currentColor" stroke-width="1.300" fill="none"/></svg></span><span class="abs bt" style="left:34.0px;top:56.8px">mintaka<span style="margin:0 9px">-</span>zaniah</span><span class="abs" style="left:187.2000000000001px;top:58.099999999999994px"><svg class="i" width="12.5" height="12.5" viewBox="0 0 16 16" fill="currentColor" style="color:#2c64ae;"><path d="M11.300 9.200v3.300a1.400 1.400 0 0 1-1.400 1.400H3.500a1.400 1.400 0 0 1-1.400-1.400V6.100a1.400 1.400 0 0 1 1.400-1.400H7.500" fill="none" stroke="currentColor" stroke-width="1.500"/><path d="M9.600 1.400h5v5zM13.800 2.200L7.400 8.600" stroke="currentColor" stroke-width="1.700" fill="currentColor"/></svg></span><span class="abs bar" style="left:219.79999999999995px;width:363.0px;top:56.8px;background:linear-gradient(to right,#a39a20 0%,#a99818 48%,#94982a 50%,#96982a 100%)"></span><span class="abs" style="left:15.700000000000045px;top:95.52px"><svg class="i" width="12" height="12" viewBox="0 0 16 16" fill="currentColor" style="color:#222;"><path d="M2 .3h12a.6.6 0 0 1 .6.6v14.200a.6.6 0 0 1-.6.600H2a.6.6 0 0 1-.6-.6V.9A.6.6 0 0 1 2 .3z"/><g fill="#fff" opacity=".75"><rect x="4" y="2.600" width="1.500" height="1.500"/><rect x="7.250" y="2.600" width="1.500" height="1.500"/><rect x="10.500" y="2.600" width="1.500" height="1.500"/><rect x="4" y="5.800" width="1.500" height="1.500"/><rect x="7.250" y="5.800" width="1.500" height="1.500"/><rect x="10.500" y="5.800" width="1.500" height="1.500"/><rect x="4" y="9" width="1.500" height="1.500"/><rect x="10.500" y="9" width="1.500" height="1.500"/><rect x="6.700" y="12.300" width="2.600" height="2.600"/></g></svg></span><span class="abs bt" style="left:34.0px;top:93.52px">canopus<span style="margin:0 9px">-</span>canopus</span><span class="abs" style="left:187.2000000000001px;top:94.82px"><svg class="i" width="12.5" height="12.5" viewBox="0 0 16 16" fill="currentColor" style="color:#2c64ae;"><path d="M11.300 9.200v3.300a1.400 1.400 0 0 1-1.400 1.400H3.500a1.400 1.400 0 0 1-1.400-1.400V6.100a1.400 1.400 0 0 1 1.400-1.400H7.500" fill="none" stroke="currentColor" stroke-width="1.500"/><path d="M9.600 1.400h5v5zM13.800 2.200L7.400 8.600" stroke="currentColor" stroke-width="1.700" fill="currentColor"/></svg></span><span class="abs bar" style="left:219.79999999999995px;width:363.0px;top:93.52px;background:linear-gradient(to right,#a69a1e 0%,#a8981a 46%,#95992a 52%,#95992a 100%)"></span><span class="abs" style="left:15.700000000000045px;top:132.24px"><svg class="i" width="12" height="12" viewBox="0 0 16 16" fill="currentColor" style="color:#222;"><path d="M2 .3h12a.6.6 0 0 1 .6.6v14.200a.6.6 0 0 1-.6.600H2a.6.6 0 0 1-.6-.6V.9A.6.6 0 0 1 2 .3z"/><g fill="#fff" opacity=".75"><rect x="4" y="2.600" width="1.500" height="1.500"/><rect x="7.250" y="2.600" width="1.500" height="1.500"/><rect x="10.500" y="2.600" width="1.500" height="1.500"/><rect x="4" y="5.800" width="1.500" height="1.500"/><rect x="7.250" y="5.800" width="1.500" height="1.500"/><rect x="10.500" y="5.800" width="1.500" height="1.500"/><rect x="4" y="9" width="1.500" height="1.500"/><rect x="10.500" y="9" width="1.500" height="1.500"/><rect x="6.700" y="12.300" width="2.600" height="2.600"/></g></svg></span><span class="abs bt" style="left:34.0px;top:130.24px">procyon<span style="margin:0 9px">-</span>procyon</span><span class="abs" style="left:187.2000000000001px;top:131.54000000000002px"><svg class="i" width="12.5" height="12.5" viewBox="0 0 16 16" fill="currentColor" style="color:#2c64ae;"><path d="M11.300 9.200v3.300a1.400 1.400 0 0 1-1.400 1.400H3.500a1.400 1.400 0 0 1-1.400-1.400V6.100a1.400 1.400 0 0 1 1.400-1.400H7.500" fill="none" stroke="currentColor" stroke-width="1.500"/><path d="M9.600 1.400h5v5zM13.800 2.200L7.400 8.600" stroke="currentColor" stroke-width="1.700" fill="currentColor"/></svg></span><span class="abs bar" style="left:219.79999999999995px;width:363.0px;top:130.24px;background:linear-gradient(to right,#7f9a34 0%,#849a32 48%,#a39724 50%,#9f9726 56%,#8c9a2e 60%,#b3961a 64%,#b3961a 100%)"></span><span class="abs" style="left:15.700000000000045px;top:168.95999999999998px"><svg class="i" width="12" height="12" viewBox="0 0 16 16" fill="currentColor" style="color:#777;"><path d="M2.300 1.100h11.400v13.800H2.300z" fill="none" stroke="currentColor" stroke-width="1.600"/><path d="M5 4h1.600M7.200 4h1.600M9.400 4H11M5 6.800h1.600M7.200 6.800h1.600M9.400 6.800H11M5 9.600h1.600M9.400 9.600H11M6.800 15v-2.800h2.400V15" stroke="currentColor" stroke-width="1.300" fill="none"/></svg></span><span class="abs bt" style="left:34.0px;top:166.95999999999998px">mirfak<span style="margin:0 9px">-</span>zaniah</span><span class="abs" style="left:187.2000000000001px;top:168.26px"><svg class="i" width="12.5" height="12.5" viewBox="0 0 16 16" fill="currentColor" style="color:#2c64ae;"><path d="M11.300 9.200v3.300a1.400 1.400 0 0 1-1.400 1.400H3.500a1.400 1.400 0 0 1-1.400-1.400V6.100a1.400 1.400 0 0 1 1.400-1.400H7.500" fill="none" stroke="currentColor" stroke-width="1.500"/><path d="M9.600 1.400h5v5zM13.800 2.200L7.400 8.600" stroke="currentColor" stroke-width="1.700" fill="currentColor"/></svg></span><span class="abs bar" style="left:219.79999999999995px;width:363.0px;top:166.95999999999998px;background:linear-gradient(to right,#999a28 0%,#8b9b2f 35%,#a19826 50%,#a49725 85%,#9a9928 100%)"></span><span class="abs" style="left:15.700000000000045px;top:205.68px"><svg class="i" width="12" height="12" viewBox="0 0 16 16" fill="currentColor" style="color:#222;"><path d="M2 .3h12a.6.6 0 0 1 .6.6v14.200a.6.6 0 0 1-.6.600H2a.6.6 0 0 1-.6-.6V.9A.6.6 0 0 1 2 .3z"/><g fill="#fff" opacity=".75"><rect x="4" y="2.600" width="1.500" height="1.500"/><rect x="7.250" y="2.600" width="1.500" height="1.500"/><rect x="10.500" y="2.600" width="1.500" height="1.500"/><rect x="4" y="5.800" width="1.500" height="1.500"/><rect x="7.250" y="5.800" width="1.500" height="1.500"/><rect x="10.500" y="5.800" width="1.500" height="1.500"/><rect x="4" y="9" width="1.500" height="1.500"/><rect x="10.500" y="9" width="1.500" height="1.500"/><rect x="6.700" y="12.300" width="2.600" height="2.600"/></g></svg></span><span class="abs bt" style="left:34.0px;top:203.68px">sabik<span style="margin:0 9px">-</span>sabik</span><span class="abs" style="left:187.2000000000001px;top:204.98000000000002px"><svg class="i" width="12.5" height="12.5" viewBox="0 0 16 16" fill="currentColor" style="color:#2c64ae;"><path d="M11.300 9.200v3.300a1.400 1.400 0 0 1-1.400 1.400H3.500a1.400 1.400 0 0 1-1.400-1.400V6.100a1.400 1.400 0 0 1 1.400-1.400H7.500" fill="none" stroke="currentColor" stroke-width="1.500"/><path d="M9.600 1.400h5v5zM13.800 2.200L7.400 8.600" stroke="currentColor" stroke-width="1.700" fill="currentColor"/></svg></span><span class="abs bar" style="left:219.79999999999995px;width:363.0px;top:203.68px;background:linear-gradient(to right,#9a9928 0%,#8c9b2e 30%,#9d9927 50%,#a09826 85%,#999928 100%)"></span><span class="abs" style="left:15.700000000000045px;top:242.39999999999998px"><svg class="i" width="12" height="12" viewBox="0 0 16 16" fill="currentColor" style="color:#222;"><path d="M2 .3h12a.6.6 0 0 1 .6.6v14.200a.6.6 0 0 1-.6.600H2a.6.6 0 0 1-.6-.6V.9A.6.6 0 0 1 2 .3z"/><g fill="#fff" opacity=".75"><rect x="4" y="2.600" width="1.500" height="1.500"/><rect x="7.250" y="2.600" width="1.500" height="1.500"/><rect x="10.500" y="2.600" width="1.500" height="1.500"/><rect x="4" y="5.800" width="1.500" height="1.500"/><rect x="7.250" y="5.800" width="1.500" height="1.500"/><rect x="10.500" y="5.800" width="1.500" height="1.500"/><rect x="4" y="9" width="1.500" height="1.500"/><rect x="10.500" y="9" width="1.500" height="1.500"/><rect x="6.700" y="12.300" width="2.600" height="2.600"/></g></svg></span><span class="abs bt" style="left:34.0px;top:240.39999999999998px">kochab<span style="margin:0 9px">-</span>mirfak</span><span class="abs" style="left:187.2000000000001px;top:241.7px"><svg class="i" width="12.5" height="12.5" viewBox="0 0 16 16" fill="currentColor" style="color:#2c64ae;"><path d="M11.300 9.200v3.300a1.400 1.400 0 0 1-1.400 1.400H3.500a1.400 1.400 0 0 1-1.400-1.400V6.100a1.400 1.400 0 0 1 1.400-1.400H7.500" fill="none" stroke="currentColor" stroke-width="1.500"/><path d="M9.600 1.400h5v5zM13.800 2.200L7.400 8.600" stroke="currentColor" stroke-width="1.700" fill="currentColor"/></svg></span><span class="abs bar" style="left:219.79999999999995px;width:363.0px;top:240.39999999999998px;background:linear-gradient(to right,#9b9a27 0%,#98992a 100%)"></span><span class="abs" style="left:15.700000000000045px;top:279.12px"><svg class="i" width="12" height="12" viewBox="0 0 16 16" fill="currentColor" style="color:#222;"><path d="M2 .3h12a.6.6 0 0 1 .6.6v14.200a.6.6 0 0 1-.6.600H2a.6.6 0 0 1-.6-.6V.9A.6.6 0 0 1 2 .3z"/><g fill="#fff" opacity=".75"><rect x="4" y="2.600" width="1.500" height="1.500"/><rect x="7.250" y="2.600" width="1.500" height="1.500"/><rect x="10.500" y="2.600" width="1.500" height="1.500"/><rect x="4" y="5.800" width="1.500" height="1.500"/><rect x="7.250" y="5.800" width="1.500" height="1.500"/><rect x="10.500" y="5.800" width="1.500" height="1.500"/><rect x="4" y="9" width="1.500" height="1.500"/><rect x="10.500" y="9" width="1.500" height="1.500"/><rect x="6.700" y="12.300" width="2.600" height="2.600"/></g></svg></span><span class="abs bt" style="left:34.0px;top:277.12px">kochab<span style="margin:0 9px">-</span>nunki</span><span class="abs" style="left:187.2000000000001px;top:278.42px"><svg class="i" width="12.5" height="12.5" viewBox="0 0 16 16" fill="currentColor" style="color:#2c64ae;"><path d="M11.300 9.200v3.300a1.400 1.400 0 0 1-1.400 1.400H3.500a1.400 1.400 0 0 1-1.400-1.400V6.100a1.400 1.400 0 0 1 1.400-1.400H7.500" fill="none" stroke="currentColor" stroke-width="1.500"/><path d="M9.600 1.400h5v5zM13.800 2.200L7.400 8.600" stroke="currentColor" stroke-width="1.700" fill="currentColor"/></svg></span><span class="abs bar" style="left:219.79999999999995px;width:363.0px;top:277.12px;background:linear-gradient(to right,#999a28 0%,#93992b 100%)"></span><span class="abs" style="left:15.700000000000045px;top:315.84px"><svg class="i" width="12" height="12" viewBox="0 0 16 16" fill="currentColor" style="color:#222;"><path d="M2 .3h12a.6.6 0 0 1 .6.6v14.200a.6.6 0 0 1-.6.600H2a.6.6 0 0 1-.6-.6V.9A.6.6 0 0 1 2 .3z"/><g fill="#fff" opacity=".75"><rect x="4" y="2.600" width="1.500" height="1.500"/><rect x="7.250" y="2.600" width="1.500" height="1.500"/><rect x="10.500" y="2.600" width="1.500" height="1.500"/><rect x="4" y="5.800" width="1.500" height="1.500"/><rect x="7.250" y="5.800" width="1.500" height="1.500"/><rect x="10.500" y="5.800" width="1.500" height="1.500"/><rect x="4" y="9" width="1.500" height="1.500"/><rect x="10.500" y="9" width="1.500" height="1.500"/><rect x="6.700" y="12.300" width="2.600" height="2.600"/></g></svg></span><span class="abs bt" style="left:34.0px;top:313.84px">betelgeuse<span style="margin:0 9px">-</span>betelgeuse</span><span class="abs" style="left:187.2000000000001px;top:315.14px"><svg class="i" width="12.5" height="12.5" viewBox="0 0 16 16" fill="currentColor" style="color:#2c64ae;"><path d="M11.300 9.200v3.300a1.400 1.400 0 0 1-1.400 1.400H3.500a1.400 1.400 0 0 1-1.400-1.400V6.100a1.400 1.400 0 0 1 1.400-1.400H7.500" fill="none" stroke="currentColor" stroke-width="1.500"/><path d="M9.600 1.400h5v5zM13.800 2.200L7.400 8.600" stroke="currentColor" stroke-width="1.700" fill="currentColor"/></svg></span><span class="abs bar" style="left:219.79999999999995px;width:363.0px;top:313.84px;background:linear-gradient(to right,#839b34 0%,#7c9d38 50%,#839b34 100%)"></span><span class="abs" style="left:15.700000000000045px;top:352.56px"><svg class="i" width="12" height="12" viewBox="0 0 16 16" fill="currentColor" style="color:#222;"><path d="M2 .3h12a.6.6 0 0 1 .6.6v14.200a.6.6 0 0 1-.6.600H2a.6.6 0 0 1-.6-.6V.9A.6.6 0 0 1 2 .3z"/><g fill="#fff" opacity=".75"><rect x="4" y="2.600" width="1.500" height="1.500"/><rect x="7.250" y="2.600" width="1.500" height="1.500"/><rect x="10.500" y="2.600" width="1.500" height="1.500"/><rect x="4" y="5.800" width="1.500" height="1.500"/><rect x="7.250" y="5.800" width="1.500" height="1.500"/><rect x="10.500" y="5.800" width="1.500" height="1.500"/><rect x="4" y="9" width="1.500" height="1.500"/><rect x="10.500" y="9" width="1.500" height="1.500"/><rect x="6.700" y="12.300" width="2.600" height="2.600"/></g></svg></span><span class="abs bt" style="left:34.0px;top:350.56px">mirfak<span style="margin:0 9px">-</span>mirfak</span><span class="abs" style="left:187.2000000000001px;top:351.86px"><svg class="i" width="12.5" height="12.5" viewBox="0 0 16 16" fill="currentColor" style="color:#2c64ae;"><path d="M11.300 9.200v3.300a1.400 1.400 0 0 1-1.400 1.400H3.500a1.400 1.400 0 0 1-1.400-1.400V6.100a1.400 1.400 0 0 1 1.400-1.400H7.500" fill="none" stroke="currentColor" stroke-width="1.500"/><path d="M9.600 1.400h5v5zM13.800 2.200L7.400 8.600" stroke="currentColor" stroke-width="1.700" fill="currentColor"/></svg></span><span class="abs bar" style="left:219.79999999999995px;width:363.0px;top:350.56px;background:linear-gradient(to right,#879a32 0%,#819b35 100%)"></span><span class="abs" style="left:15.700000000000045px;top:389.28000000000003px"><svg class="i" width="12" height="12" viewBox="0 0 16 16" fill="currentColor" style="color:#222;"><path d="M2 .3h12a.6.6 0 0 1 .6.6v14.200a.6.6 0 0 1-.6.600H2a.6.6 0 0 1-.6-.6V.9A.6.6 0 0 1 2 .3z"/><g fill="#fff" opacity=".75"><rect x="4" y="2.600" width="1.500" height="1.500"/><rect x="7.250" y="2.600" width="1.500" height="1.500"/><rect x="10.500" y="2.600" width="1.500" height="1.500"/><rect x="4" y="5.800" width="1.500" height="1.500"/><rect x="7.250" y="5.800" width="1.500" height="1.500"/><rect x="10.500" y="5.800" width="1.500" height="1.500"/><rect x="4" y="9" width="1.500" height="1.500"/><rect x="10.500" y="9" width="1.500" height="1.500"/><rect x="6.700" y="12.300" width="2.600" height="2.600"/></g></svg></span><span class="abs bt" style="left:34.0px;top:387.28000000000003px">kochab<span style="margin:0 9px">-</span>izar</span><span class="abs" style="left:187.2000000000001px;top:388.58000000000004px"><svg class="i" width="12.5" height="12.5" viewBox="0 0 16 16" fill="currentColor" style="color:#2c64ae;"><path d="M11.300 9.200v3.300a1.400 1.400 0 0 1-1.400 1.400H3.500a1.400 1.400 0 0 1-1.400-1.400V6.100a1.400 1.400 0 0 1 1.400-1.400H7.500" fill="none" stroke="currentColor" stroke-width="1.500"/><path d="M9.600 1.400h5v5zM13.800 2.200L7.400 8.600" stroke="currentColor" stroke-width="1.700" fill="currentColor"/></svg></span><span class="abs bar" style="left:219.79999999999995px;width:363.0px;top:387.28000000000003px;background:linear-gradient(to right,#769c39 0%,#6c9d3d 50%,#729c3a 100%)"></span></div><div class="card" style="left:242.0px;top:777.8px;width:752.6px;height:248.2px"><span class="abs ct-i" style="left:8px;top:10.600000000000001px"><svg class="i" width="16" height="16" viewBox="0 0 16 16" fill="currentColor" style="color:#2c64ae;"><rect x="1" y="2" width="2.800" height="2.600"/><rect x="5" y="2" width="10" height="2.600"/><rect x="1" y="5.300" width="2.800" height="2.600"/><rect x="5" y="5.300" width="10" height="2.600"/><rect x="1" y="8.600" width="2.800" height="2.600"/><rect x="5" y="8.600" width="10" height="2.600"/><rect x="1" y="11.900" width="2.800" height="2.600"/><rect x="5" y="11.900" width="10" height="2.600"/></svg></span><span class="abs ct" style="left:32px;top:8.1px;letter-spacing:0.012px">Task Summary by Category (Last 48h)</span><span class="abs bt" style="left:16px;top:52.80000000000007px">Guest Migrations</span><span class="abs" style="left:513.0px;top:54.600000000000065px"><svg class="i" width="12.5" height="12.5" viewBox="0 0 16 16" fill="currentColor" style="color:#777;"><circle cx="8" cy="8" r="5" fill="none" stroke="currentColor" stroke-width="2.600"/></svg></span><span class="abs bt" style="left:535.4px;top:52.80000000000007px">0</span><span class="abs" style="left:595.0px;top:54.30000000000007px"><svg class="i" width="12.5" height="12.5" viewBox="0 0 16 16" fill="currentColor" style="color:#777;"><path d="M8 1L15.500 14.500H.5z"/><path d="M8 5.500v4.500" stroke="#fff" stroke-width="1.800"/><circle cx="8" cy="12" r="1" fill="#fff"/></svg></span><span class="abs bt" style="left:617.4px;top:52.80000000000007px">0</span><span class="abs" style="left:676.1999999999999px;top:54.600000000000065px"><svg class="i" width="12.5" height="12.5" viewBox="0 0 16 16" fill="currentColor" style="color:#777;"><path d="M1 8.6 L3.4 6.2 L6.3 9.1 L12.6 2.8 L15 5.2 L6.3 13.9 Z"/></svg></span><span class="abs bt" style="left:698.8px;top:52.80000000000007px">0</span><span class="abs bt" style="left:16px;top:85.40000000000006px">Virtual Machine related Tasks</span><span class="abs" style="left:513.0px;top:87.20000000000006px"><svg class="i" width="12.5" height="12.5" viewBox="0 0 16 16" fill="currentColor" style="color:#777;"><circle cx="8" cy="8" r="5" fill="none" stroke="currentColor" stroke-width="2.600"/></svg></span><span class="abs bt" style="left:535.4px;top:85.40000000000006px">0</span><span class="abs" style="left:595.0px;top:86.90000000000006px"><svg class="i" width="12.5" height="12.5" viewBox="0 0 16 16" fill="currentColor" style="color:#777;"><path d="M8 1L15.500 14.500H.5z"/><path d="M8 5.500v4.500" stroke="#fff" stroke-width="1.800"/><circle cx="8" cy="12" r="1" fill="#fff"/></svg></span><span class="abs bt" style="left:617.4px;top:85.40000000000006px">0</span><span class="abs" style="left:676.1999999999999px;top:87.20000000000006px"><svg class="i" width="12.5" height="12.5" viewBox="0 0 16 16" fill="currentColor" style="color:#1a9f53;"><path d="M1 8.6 L3.4 6.2 L6.3 9.1 L12.6 2.8 L15 5.2 L6.3 13.9 Z"/></svg></span><span class="abs bt" style="left:698.8px;top:85.40000000000006px">1</span><span class="abs bt" style="left:16px;top:118.00000000000007px">Container related Tasks</span><span class="abs" style="left:513.0px;top:119.80000000000007px"><svg class="i" width="12.5" height="12.5" viewBox="0 0 16 16" fill="currentColor" style="color:#777;"><circle cx="8" cy="8" r="5" fill="none" stroke="currentColor" stroke-width="2.600"/></svg></span><span class="abs bt" style="left:535.4px;top:118.00000000000007px">0</span><span class="abs" style="left:595.0px;top:119.50000000000007px"><svg class="i" width="12.5" height="12.5" viewBox="0 0 16 16" fill="currentColor" style="color:#777;"><path d="M8 1L15.500 14.500H.5z"/><path d="M8 5.500v4.500" stroke="#fff" stroke-width="1.800"/><circle cx="8" cy="12" r="1" fill="#fff"/></svg></span><span class="abs bt" style="left:617.4px;top:118.00000000000007px">0</span><span class="abs" style="left:676.1999999999999px;top:119.80000000000007px"><svg class="i" width="12.5" height="12.5" viewBox="0 0 16 16" fill="currentColor" style="color:#777;"><path d="M1 8.6 L3.4 6.2 L6.3 9.1 L12.6 2.8 L15 5.2 L6.3 13.9 Z"/></svg></span><span class="abs bt" style="left:698.8px;top:118.00000000000007px">0</span><span class="abs bt" style="left:16px;top:150.60000000000008px">Ceph related Tasks</span><span class="abs" style="left:513.0px;top:152.4000000000001px"><svg class="i" width="12.5" height="12.5" viewBox="0 0 16 16" fill="currentColor" style="color:#777;"><circle cx="8" cy="8" r="5" fill="none" stroke="currentColor" stroke-width="2.600"/></svg></span><span class="abs bt" style="left:535.4px;top:150.60000000000008px">0</span><span class="abs" style="left:595.0px;top:152.10000000000008px"><svg class="i" width="12.5" height="12.5" viewBox="0 0 16 16" fill="currentColor" style="color:#777;"><path d="M8 1L15.500 14.500H.5z"/><path d="M8 5.500v4.500" stroke="#fff" stroke-width="1.800"/><circle cx="8" cy="12" r="1" fill="#fff"/></svg></span><span class="abs bt" style="left:617.4px;top:150.60000000000008px">0</span><span class="abs" style="left:676.1999999999999px;top:152.4000000000001px"><svg class="i" width="12.5" height="12.5" viewBox="0 0 16 16" fill="currentColor" style="color:#777;"><path d="M1 8.6 L3.4 6.2 L6.3 9.1 L12.6 2.8 L15 5.2 L6.3 13.9 Z"/></svg></span><span class="abs bt" style="left:698.8px;top:150.60000000000008px">0</span><span class="abs bt" style="left:16px;top:183.20000000000007px">HA related Tasks</span><span class="abs" style="left:513.0px;top:185.00000000000009px"><svg class="i" width="12.5" height="12.5" viewBox="0 0 16 16" fill="currentColor" style="color:#777;"><circle cx="8" cy="8" r="5" fill="none" stroke="currentColor" stroke-width="2.600"/></svg></span><span class="abs bt" style="left:535.4px;top:183.20000000000007px">0</span><span class="abs" style="left:595.0px;top:184.70000000000007px"><svg class="i" width="12.5" height="12.5" viewBox="0 0 16 16" fill="currentColor" style="color:#777;"><path d="M8 1L15.500 14.500H.5z"/><path d="M8 5.500v4.500" stroke="#fff" stroke-width="1.800"/><circle cx="8" cy="12" r="1" fill="#fff"/></svg></span><span class="abs bt" style="left:617.4px;top:183.20000000000007px">0</span><span class="abs" style="left:676.1999999999999px;top:185.00000000000009px"><svg class="i" width="12.5" height="12.5" viewBox="0 0 16 16" fill="currentColor" style="color:#777;"><path d="M1 8.6 L3.4 6.2 L6.3 9.1 L12.6 2.8 L15 5.2 L6.3 13.9 Z"/></svg></span><span class="abs bt" style="left:698.8px;top:183.20000000000007px">0</span><span class="abs bt" style="left:16px;top:215.80000000000007px">Backups and Backup Jobs</span><span class="abs" style="left:513.0px;top:217.60000000000008px"><svg class="i" width="12.5" height="12.5" viewBox="0 0 16 16" fill="currentColor" style="color:#777;"><circle cx="8" cy="8" r="5" fill="none" stroke="currentColor" stroke-width="2.600"/></svg></span><span class="abs bt" style="left:535.4px;top:215.80000000000007px">0</span><span class="abs" style="left:595.0px;top:217.30000000000007px"><svg class="i" width="12.5" height="12.5" viewBox="0 0 16 16" fill="currentColor" style="color:#777;"><path d="M8 1L15.500 14.500H.5z"/><path d="M8 5.500v4.500" stroke="#fff" stroke-width="1.800"/><circle cx="8" cy="12" r="1" fill="#fff"/></svg></span><span class="abs bt" style="left:617.4px;top:215.80000000000007px">0</span><span class="abs" style="left:676.1999999999999px;top:217.60000000000008px"><svg class="i" width="12.5" height="12.5" viewBox="0 0 16 16" fill="currentColor" style="color:#1a9f53;"><path d="M1 8.6 L3.4 6.2 L6.3 9.1 L12.6 2.8 L15 5.2 L6.3 13.9 Z"/></svg></span><span class="abs bt" style="left:698.8px;top:215.80000000000007px">191</span></div><div class="card" style="left:1010.0px;top:777.8px;width:753.6px;height:248.2px"><span class="abs ct-i" style="left:8px;top:10.600000000000001px"><svg class="i" width="16" height="16" viewBox="0 0 16 16" fill="currentColor" style="color:#2c64ae;"><rect x="1" y="2" width="2.800" height="2.600"/><rect x="5" y="2" width="10" height="2.600"/><rect x="1" y="5.300" width="2.800" height="2.600"/><rect x="5" y="5.300" width="10" height="2.600"/><rect x="1" y="8.600" width="2.800" height="2.600"/><rect x="5" y="8.600" width="10" height="2.600"/><rect x="1" y="11.900" width="2.800" height="2.600"/><rect x="5" y="11.900" width="10" height="2.600"/></svg></span><span class="abs ct" style="left:32px;top:8.1px;letter-spacing:-0.026px">Task Summary Sorted by Failed Tasks (Last 48h)</span><span class="abs bt" style="left:16px;top:52.80000000000007px">mintaka</span><span class="abs" style="left:514.5999999999999px;top:54.600000000000065px"><svg class="i" width="12.5" height="12.5" viewBox="0 0 16 16" fill="currentColor" style="color:#c4203c;"><circle cx="8" cy="8" r="7"/><path d="M5.300 5.300l5.400 5.400M10.700 5.300l-5.400 5.400" stroke="#fff" stroke-width="2.300"/></svg></span><span class="abs bt" style="left:537.0px;top:52.80000000000007px">2</span><span class="abs" style="left:596.3999999999999px;top:54.30000000000007px"><svg class="i" width="12.5" height="12.5" viewBox="0 0 16 16" fill="currentColor" style="color:#777;"><path d="M8 1L15.500 14.500H.5z"/><path d="M8 5.500v4.500" stroke="#fff" stroke-width="1.800"/><circle cx="8" cy="12" r="1" fill="#fff"/></svg></span><span class="abs bt" style="left:618.8px;top:52.80000000000007px">0</span><span class="abs" style="left:677.8px;top:54.600000000000065px"><svg class="i" width="12.5" height="12.5" viewBox="0 0 16 16" fill="currentColor" style="color:#1a9f53;"><path d="M1 8.6 L3.4 6.2 L6.3 9.1 L12.6 2.8 L15 5.2 L6.3 13.9 Z"/></svg></span><span class="abs bt" style="left:700.4000000000001px;top:52.80000000000007px">7997</span><span class="abs bt" style="left:16px;top:85.40000000000006px">mirfak</span><span class="abs" style="left:514.5999999999999px;top:87.20000000000006px"><svg class="i" width="12.5" height="12.5" viewBox="0 0 16 16" fill="currentColor" style="color:#c4203c;"><circle cx="8" cy="8" r="7"/><path d="M5.300 5.300l5.400 5.400M10.700 5.300l-5.400 5.400" stroke="#fff" stroke-width="2.300"/></svg></span><span class="abs bt" style="left:537.0px;top:85.40000000000006px">2</span><span class="abs" style="left:596.3999999999999px;top:86.90000000000006px"><svg class="i" width="12.5" height="12.5" viewBox="0 0 16 16" fill="currentColor" style="color:#777;"><path d="M8 1L15.500 14.500H.5z"/><path d="M8 5.500v4.500" stroke="#fff" stroke-width="1.800"/><circle cx="8" cy="12" r="1" fill="#fff"/></svg></span><span class="abs bt" style="left:618.8px;top:85.40000000000006px">0</span><span class="abs" style="left:677.8px;top:87.20000000000006px"><svg class="i" width="12.5" height="12.5" viewBox="0 0 16 16" fill="currentColor" style="color:#1a9f53;"><path d="M1 8.6 L3.4 6.2 L6.3 9.1 L12.6 2.8 L15 5.2 L6.3 13.9 Z"/></svg></span><span class="abs bt" style="left:700.4000000000001px;top:85.40000000000006px">84</span><span class="abs bt" style="left:16px;top:118.00000000000007px">sadr</span><span class="abs" style="left:514.5999999999999px;top:119.80000000000007px"><svg class="i" width="12.5" height="12.5" viewBox="0 0 16 16" fill="currentColor" style="color:#777;"><circle cx="8" cy="8" r="5" fill="none" stroke="currentColor" stroke-width="2.600"/></svg></span><span class="abs bt" style="left:537.0px;top:118.00000000000007px">0</span><span class="abs" style="left:596.3999999999999px;top:119.50000000000007px"><svg class="i" width="12.5" height="12.5" viewBox="0 0 16 16" fill="currentColor" style="color:#777;"><path d="M8 1L15.500 14.500H.5z"/><path d="M8 5.500v4.500" stroke="#fff" stroke-width="1.800"/><circle cx="8" cy="12" r="1" fill="#fff"/></svg></span><span class="abs bt" style="left:618.8px;top:118.00000000000007px">0</span><span class="abs" style="left:677.8px;top:119.80000000000007px"><svg class="i" width="12.5" height="12.5" viewBox="0 0 16 16" fill="currentColor" style="color:#1a9f53;"><path d="M1 8.6 L3.4 6.2 L6.3 9.1 L12.6 2.8 L15 5.2 L6.3 13.9 Z"/></svg></span><span class="abs bt" style="left:700.4000000000001px;top:118.00000000000007px">26</span><span class="abs bt" style="left:16px;top:150.60000000000008px">canopus</span><span class="abs" style="left:514.5999999999999px;top:152.4000000000001px"><svg class="i" width="12.5" height="12.5" viewBox="0 0 16 16" fill="currentColor" style="color:#777;"><circle cx="8" cy="8" r="5" fill="none" stroke="currentColor" stroke-width="2.600"/></svg></span><span class="abs bt" style="left:537.0px;top:150.60000000000008px">0</span><span class="abs" style="left:596.3999999999999px;top:152.10000000000008px"><svg class="i" width="12.5" height="12.5" viewBox="0 0 16 16" fill="currentColor" style="color:#777;"><path d="M8 1L15.500 14.500H.5z"/><path d="M8 5.500v4.500" stroke="#fff" stroke-width="1.800"/><circle cx="8" cy="12" r="1" fill="#fff"/></svg></span><span class="abs bt" style="left:618.8px;top:150.60000000000008px">0</span><span class="abs" style="left:677.8px;top:152.4000000000001px"><svg class="i" width="12.5" height="12.5" viewBox="0 0 16 16" fill="currentColor" style="color:#1a9f53;"><path d="M1 8.6 L3.4 6.2 L6.3 9.1 L12.6 2.8 L15 5.2 L6.3 13.9 Z"/></svg></span><span class="abs bt" style="left:700.4000000000001px;top:150.60000000000008px">4</span><span class="abs bt" style="left:16px;top:183.20000000000007px">capella</span><span class="abs" style="left:514.5999999999999px;top:185.00000000000009px"><svg class="i" width="12.5" height="12.5" viewBox="0 0 16 16" fill="currentColor" style="color:#777;"><circle cx="8" cy="8" r="5" fill="none" stroke="currentColor" stroke-width="2.600"/></svg></span><span class="abs bt" style="left:537.0px;top:183.20000000000007px">0</span><span class="abs" style="left:596.3999999999999px;top:184.70000000000007px"><svg class="i" width="12.5" height="12.5" viewBox="0 0 16 16" fill="currentColor" style="color:#777;"><path d="M8 1L15.500 14.500H.5z"/><path d="M8 5.500v4.500" stroke="#fff" stroke-width="1.800"/><circle cx="8" cy="12" r="1" fill="#fff"/></svg></span><span class="abs bt" style="left:618.8px;top:183.20000000000007px">0</span><span class="abs" style="left:677.8px;top:185.00000000000009px"><svg class="i" width="12.5" height="12.5" viewBox="0 0 16 16" fill="currentColor" style="color:#1a9f53;"><path d="M1 8.6 L3.4 6.2 L6.3 9.1 L12.6 2.8 L15 5.2 L6.3 13.9 Z"/></svg></span><span class="abs bt" style="left:700.4000000000001px;top:183.20000000000007px">26</span></div><div class="card" style="left:1780.2px;top:777.8px;width:289.8px;height:248.2px"><span class="abs ct-i" style="left:8px;top:11.100000000000001px"><svg class="i" width="15" height="15" viewBox="0 0 16 16" fill="currentColor" style="color:#2c64ae;"><circle cx="3" cy="9" r="1.900"/><circle cx="10.500" cy="3" r="2.300"/><circle cx="11.500" cy="9" r="1.900"/><circle cx="8" cy="13.500" r="1.900"/><path d="M3 9h8.500M7.500 9l3-6M7.500 9l.5 4.500" stroke="currentColor" stroke-width="1.200" fill="none"/></svg></span><span class="abs ct" style="left:29.3px;top:8.1px;letter-spacing:-0.292px">SDN Zones</span><span class="abs" style="left:23.2px;top:61.2px"><svg class="i" width="12" height="12" viewBox="0 0 16 16" fill="currentColor" style="color:#1a9f53;"><path d="M1 8.6 L3.4 6.2 L6.3 9.1 L12.6 2.8 L15 5.2 L6.3 13.9 Z"/></svg></span><span class="abs bt" style="left:43.799999999999955px;top:59.200000000000045px">available</span><span class="abs bt r" style="left:207.99999999999977px;width:40px;top:59.200000000000045px">19</span><span class="abs" style="left:255.00000000000006px;top:61.200000000000045px"><svg class="i" width="12.5" height="12.5" viewBox="0 0 16 16" fill="currentColor" style="color:#222;"><circle cx="6.700" cy="6.700" r="4.700" fill="none" stroke="currentColor" stroke-width="2.400"/><path d="M10.400 10.400l3.900 3.900" stroke="currentColor" stroke-width="2.900" stroke-linecap="round"/></svg></span><span class="abs" style="left:22.7px;top:88.4px"><svg class="i" width="13" height="13" viewBox="0 0 16 16" fill="currentColor" style="color:#c4203c;"><circle cx="8" cy="8" r="7"/><path d="M5.300 5.300l5.400 5.400M10.700 5.300l-5.400 5.400" stroke="#fff" stroke-width="2.300"/></svg></span><span class="abs bt" style="left:43.799999999999955px;top:86.90000000000005px">error</span><span class="abs bt r" style="left:207.99999999999977px;width:40px;top:86.90000000000005px">0</span><span class="abs" style="left:255.00000000000006px;top:88.90000000000005px"><svg class="i" width="12.5" height="12.5" viewBox="0 0 16 16" fill="currentColor" style="color:#222;"><circle cx="6.700" cy="6.700" r="4.700" fill="none" stroke="currentColor" stroke-width="2.400"/><path d="M10.400 10.400l3.900 3.900" stroke="currentColor" stroke-width="2.900" stroke-linecap="round"/></svg></span><span class="abs" style="left:22.95px;top:116.35px"><svg class="i" width="12.5" height="12.5" viewBox="0 0 16 16" fill="currentColor" style="color:#d6c430;"><path d="M13.300 6.300A5.600 5.600 0 0 0 3.200 4.700" fill="none" stroke="currentColor" stroke-width="3"/><path d="M2.700 9.700A5.600 5.600 0 0 0 12.800 11.300" fill="none" stroke="currentColor" stroke-width="3"/><path d="M15.500 .8v6.400H9.100zM.5 15.200V8.800h6.400z"/></svg></span><span class="abs bt" style="left:43.799999999999955px;top:114.60000000000005px">pending</span><span class="abs bt r" style="left:207.99999999999977px;width:40px;top:114.60000000000005px">0</span><span class="abs" style="left:255.00000000000006px;top:116.60000000000005px"><svg class="i" width="12.5" height="12.5" viewBox="0 0 16 16" fill="currentColor" style="color:#222;"><circle cx="6.700" cy="6.700" r="4.700" fill="none" stroke="currentColor" stroke-width="2.400"/><path d="M10.400 10.400l3.900 3.900" stroke="currentColor" stroke-width="2.900" stroke-linecap="round"/></svg></span><span class="abs" style="left:22.7px;top:143.8px"><svg class="i" width="13" height="13" viewBox="0 0 16 16" fill="currentColor" style="color:#444;"><rect x="1" y="2.500" width="14" height="11" rx=".6"/><path d="M1 6.200h14M1 9.800h14" stroke="#fff" stroke-width=".9" opacity=".7"/></svg></span><span class="abs bt" style="left:43.799999999999955px;top:142.30000000000004px">All</span><span class="abs bt r" style="left:207.99999999999977px;width:40px;top:142.30000000000004px">19</span><span class="abs" style="left:255.00000000000006px;top:144.30000000000004px"><svg class="i" width="12.5" height="12.5" viewBox="0 0 16 16" fill="currentColor" style="color:#222;"><circle cx="6.700" cy="6.700" r="4.700" fill="none" stroke="currentColor" stroke-width="2.400"/><path d="M10.400 10.400l3.900 3.900" stroke="currentColor" stroke-width="2.900" stroke-linecap="round"/></svg></span></div></div></div>
<div style="position:absolute;left:0;top:639px;width:1083px;height:224px;background:linear-gradient(to bottom,rgba(171,185,184,.5) 0,rgba(171,185,184,.52) 64%,rgba(171,185,184,1) 97%)"></div>
<div style="position:absolute;left:0;top:862px;width:1083px;height:92px;background:rgb(171,185,184)"></div>
<div style="position:absolute;left:9px;top:637.6px;width:1064px;height:6.6px;border-radius:30px/3.3px;background:rgb(20,23,24);filter:blur(2px)"></div>
<div class="app" style="transform:translate(19.0px,53.0px) scale(0.5)"><div class="hdr"><div class="logo" style="left:10px;top:10.8px"><svg width="24.400" height="21.500" viewBox="0 0 24 21" preserveAspectRatio="none" style="position:absolute;left:.2px;top:.2px;overflow:hidden"><clipPath id="lgc"><rect x="-1" y="2.300" width="26" height="16.400"/></clipPath><g clip-path="url(#lgc)" stroke="#e57000" stroke-width="3.700" fill="none"><path d="M-1.800 -.6L25.800 21.600M25.800 -.6L-1.800 21.600"/></g><g stroke="#1d1d1b" stroke-width="3.100" fill="none"><path d="M3.300 -2.100L20.700 23.100M20.700 -2.100L3.300 23.100"/></g></svg><span class="lt" style="left:27px"><b style="color:#1d1d1b">PRO</b><b style="color:#e57000">X</b><b style="color:#1d1d1b">MO</b><b style="color:#e57000">X</b></span></div><div class="htitle" style="left:171.4px">Datacenter Manager 1.0</div><div class="search" style="left:637.8px;width:792.8px;top:9.9px;height:23.6px"><span>Search (Ctrl+Space / Ctrl+Shift+F)</span></div><div class="abs" style="left:1742.1px;top:15.5px;color:#222"><svg class="i" width="11" height="11" viewBox="0 0 16 16" fill="currentColor" style=""><circle cx="8" cy="8" r="3.600"/><path d="M8 .5v15M.5 8h15M2.700 2.700l10.600 10.600M13.300 2.700L2.700 13.300" stroke="currentColor" stroke-width="2.600"/></svg></div><div class="hbtn doc" style="left:1768.2px;width:109.8px;top:9.7px;height:23.3px"><svg class="i" width="11" height="11" viewBox="0 0 16 16" fill="currentColor" style=""><path d="M4.500 2h10l-2.800 10H3.200A1.700 1.700 0 0 0 3.200 14.500H12l.5-1.500 1 .3-.8 2.700H3A3 3 0 0 1 1 12z"/></svg><span>Documentation</span></div><div class="hbtn tasks" style="left:1886.6px;width:87.8px;top:9.7px;height:23.3px"><svg class="i" width="12" height="12" viewBox="0 0 16 16" fill="currentColor" style=""><rect x="1" y="2" width="14" height="12" rx="1"/><path d="M3 5.500h10M3 8h10M3 10.500h10" stroke="#1c5bb0" stroke-width="1"/></svg><span>Tasks: 0</span><svg class="i" width="12" height="12" viewBox="0 0 16 16" fill="currentColor" style=""><path d="M3.500 6h9L8 11z"/></svg></div><div class="hbtn user" style="left:1982.2px;width:97.2px;top:9.7px;height:23.3px"><svg class="i" width="11" height="11" viewBox="0 0 16 16" fill="currentColor" style=""><circle cx="8" cy="4.300" r="3.500"/><path d="M1.800 15c0-4.500 2.200-6.500 6.200-6.500s6.200 2 6.200 6.500z"/></svg><span>root@pam</span><svg class="i" width="12" height="12" viewBox="0 0 16 16" fill="currentColor" style=""><path d="M3.500 6h9L8 11z"/></svg></div></div><div class="side"><div class="sitem sel" style="top:-0.55px"><span class="abs" style="left:7.4px;top:6.59px"><svg class="i" width="15" height="15" viewBox="0 0 16 16" fill="currentColor" style="color:#1b3566;"><path d="M8 2.5a7.3 7.3 0 0 0-6.2 11.2h12.4A7.3 7.3 0 0 0 8 2.5z"/><circle cx="8" cy="10.6" r="1.7" fill="#d9e5fb"/><circle cx="4" cy="9" r=".9" fill="#d9e5fb"/><circle cx="12" cy="9" r=".9" fill="#d9e5fb"/><circle cx="8" cy="5" r=".9" fill="#d9e5fb"/></svg></span><span class="abs st" style="left:27.3px">Dashboard</span></div><div class="sitem" style="top:27.63px"><span class="abs" style="left:7.1px;top:7.59px"><svg class="i" width="13" height="13" viewBox="0 0 16 16" fill="currentColor" style=""><rect x="1" y="2" width="6.3" height="5.3" rx=".6"/><rect x="8.7" y="2" width="6.3" height="5.3" rx=".6"/><rect x="1" y="8.7" width="6.3" height="5.3" rx=".6"/><rect x="8.7" y="8.7" width="6.3" height="5.3" rx=".6"/></svg></span><span class="abs st" style="left:25.2px">Views</span><span class="abs" style="left:202.8px;top:8.100px"><svg class="i" width="12" height="12" viewBox="0 0 16 16" fill="currentColor" style=""><path d="M3 11l5-5.500 5 5.500z"/></svg></span></div><div class="sitem" style="top:55.81px"><span class="abs" style="left:23.75px;top:7.84px"><svg class="i" width="12.5" height="12.5" viewBox="0 0 16 16" fill="currentColor" style=""><rect x="2" y="2" width="12" height="12" rx="1.5" fill="none" stroke="currentColor" stroke-width="1.5"/><path d="M8 2v12M2 8h12" stroke="currentColor" stroke-width="1.5" fill="none"/></svg></span><span class="abs st" style="left:41.1px">DevOps</span></div><div class="sitem" style="top:83.99px"><span class="abs" style="left:23.75px;top:7.84px"><svg class="i" width="12.5" height="12.5" viewBox="0 0 16 16" fill="currentColor" style=""><rect x="2" y="2" width="12" height="12" rx="1.5" fill="none" stroke="currentColor" stroke-width="1.5"/><path d="M8 2v12M2 8h12" stroke="currentColor" stroke-width="1.5" fill="none"/></svg></span><span class="abs st" style="left:41.1px">Project-Alpha</span></div><div class="sitem" style="top:112.17px"><span class="abs" style="left:7.1px;top:7.59px"><svg class="i" width="13" height="13" viewBox="0 0 16 16" fill="currentColor" style=""><path d="M2.2 2.2h11.6v7.3l-4.3 4.3H2.2z" fill="none" stroke="currentColor" stroke-width="1.6"/><path d="M9.5 13.8V9.5h4.3" fill="none" stroke="currentColor" stroke-width="1.3"/></svg></span><span class="abs st" style="left:25.2px">Notes</span></div><div class="sitem" style="top:140.35px"><span class="abs" style="left:7.3px;top:6.09px"><svg class="i" width="16" height="16" viewBox="0 0 16 16" fill="currentColor" style=""><circle cx="5.600" cy="8" r="3.100" fill="none" stroke="currentColor" stroke-width="3.400"/><circle cx="5.600" cy="8" r="4.900" fill="none" stroke="currentColor" stroke-width="1.400" stroke-dasharray="2.100 1.750"/><circle cx="12.600" cy="3.900" r="1.600" fill="none" stroke="currentColor" stroke-width="2.300"/><circle cx="12.600" cy="12.100" r="1.600" fill="none" stroke="currentColor" stroke-width="2.300"/></svg></span><span class="abs st" style="left:28.1px">Configuration</span><span class="abs" style="left:202.8px;top:8.100px"><svg class="i" width="12" height="12" viewBox="0 0 16 16" fill="currentColor" style=""><path d="M3 11l5-5.500 5 5.500z"/></svg></span></div><div class="sitem" style="top:168.53px"><span class="abs" style="left:24.0px;top:7.09px"><svg class="i" width="14" height="14" viewBox="0 0 16 16" fill="currentColor" style=""><circle cx="5.2" cy="5.6" r="3.2" fill="none" stroke="currentColor" stroke-width="2.6"/><path d="M7.6 8l5.6 5.6M11 11.4l1.6-1.6M13 13.4l1.4-1.4" stroke="currentColor" stroke-width="2" fill="none"/></svg></span><span class="abs st" style="left:44px">Access Control</span></div><div class="sitem" style="top:196.71px"><span class="abs" style="left:24.75px;top:7.84px"><svg class="i" width="12.5" height="12.5" viewBox="0 0 16 16" fill="currentColor" style=""><circle cx="8" cy="8" r="6.3"/></svg></span><span class="abs st" style="left:42px">Certificates</span></div><div class="sitem" style="top:224.89px"><span class="abs" style="left:24.0px;top:7.09px"><svg class="i" width="14" height="14" viewBox="0 0 16 16" fill="currentColor" style=""><circle cx="8" cy="8" r="5.2" fill="none" stroke="currentColor" stroke-width="3.4"/><path d="M8 1v4M8 11v4M1 8h4M11 8h4" stroke="#2e3031" stroke-width="1.1"/></svg></span><span class="abs st" style="left:44px">Subscription</span></div><div class="sitem" style="top:253.07px"><span class="abs" style="left:6.85px;top:7.34px"><svg class="i" width="13.5" height="13.5" viewBox="0 0 16 16" fill="currentColor" style=""><path d="M14.6 4.3l-2.5 2.5-2.3-.5-.5-2.3 2.5-2.5a4 4 0 0 0-5 5.2L1.6 11.900a1.700 1.700 0 0 0 2.400 2.400l5.200-5.200a4 4 0 0 0 5.400-4.800z"/></svg></span><span class="abs st" style="left:25.6px">Administration</span><span class="abs" style="left:202.8px;top:8.100px"><svg class="i" width="12" height="12" viewBox="0 0 16 16" fill="currentColor" style=""><path d="M3 11l5-5.500 5 5.500z"/></svg></span></div><div class="sitem" style="top:281.25px"><span class="abs" style="left:24.0px;top:7.09px"><svg class="i" width="14" height="14" viewBox="0 0 16 16" fill="currentColor" style=""><path d="M1.5 4l4 3.6-4 3.600" fill="none" stroke="currentColor" stroke-width="1.6"/><path d="M7.5 12.5h7.500" stroke="currentColor" stroke-width="1.600"/></svg></span><span class="abs st" style="left:42.8px">Shell</span></div><div class="sitem" style="top:309.43px"><span class="abs" style="left:7.4px;top:6.59px"><svg class="i" width="15" height="15" viewBox="0 0 16 16" fill="currentColor" style=""><circle cx="3" cy="9" r="1.900"/><circle cx="10.500" cy="3" r="2.300"/><circle cx="11.500" cy="9" r="1.900"/><circle cx="8" cy="13.500" r="1.900"/><path d="M3 9h8.500M7.500 9l3-6M7.500 9l.5 4.500" stroke="currentColor" stroke-width="1.200" fill="none"/></svg></span><span class="abs st" style="left:26.9px">SDN</span><span class="abs" style="left:202.8px;top:8.100px"><svg class="i" width="12" height="12" viewBox="0 0 16 16" fill="currentColor" style=""><path d="M3 11l5-5.500 5 5.500z"/></svg></span></div><div class="sitem" style="top:337.61px"><span class="abs" style="left:24.0px;top:6.59px"><svg class="i" width="15" height="15" viewBox="0 0 16 16" fill="currentColor" style=""><rect x="5.500" y="1.500" width="5" height="4"/><rect x="0.500" y="10.500" width="4.400" height="4"/><rect x="5.800" y="10.500" width="4.400" height="4"/><rect x="11.100" y="10.500" width="4.400" height="4"/><path d="M8 5v5.500M2.700 10.500V8h10.600v2.500" stroke="currentColor" stroke-width="1.100" fill="none"/></svg></span><span class="abs st" style="left:44px">EVPN</span></div><div class="sitem" style="top:365.79px"><span class="abs" style="left:7.4px;top:6.59px"><svg class="i" width="15" height="15" viewBox="0 0 16 16" fill="currentColor" style=""><rect x=".5" y="1.400" width="15" height="3.800" rx=".5"/><rect x=".5" y="6.100" width="15" height="3.800" rx=".5"/><rect x=".5" y="10.800" width="15" height="3.800" rx=".5"/><path d="M5.500 1.400v13.200" stroke="#fff" stroke-width=".9" opacity=".5"/><path d="M6 2.700h9M6 3.900h9M6 7.400h9M6 8.600h9M6 12.100h9M6 13.300h9" stroke="#fff" stroke-width=".45" opacity=".45"/></svg></span><span class="abs st" style="left:27.3px">Remotes</span><span class="abs" style="left:202.8px;top:8.100px"><svg class="i" width="12" height="12" viewBox="0 0 16 16" fill="currentColor" style=""><path d="M3 11l5-5.500 5 5.500z"/></svg></span></div><div class="sitem" style="top:393.97px"><span class="abs" style="left:24.05px;top:6.84px"><svg class="i" width="14.5" height="14.5" viewBox="0 0 16 16" fill="currentColor" style=""><rect x=".5" y="1.400" width="15" height="3.800" rx=".5"/><rect x=".5" y="6.100" width="15" height="3.800" rx=".5"/><rect x=".5" y="10.800" width="15" height="3.800" rx=".5"/><path d="M5.500 1.400v13.200" stroke="#fff" stroke-width=".9" opacity=".5"/><path d="M6 2.700h9M6 3.900h9M6 7.400h9M6 8.600h9M6 12.100h9M6 13.300h9" stroke="#fff" stroke-width=".45" opacity=".45"/></svg></span><span class="abs st" style="left:44px">capella</span></div><div class="sitem" style="top:422.15px"><span class="abs" style="left:24.05px;top:6.84px"><svg class="i" width="14.5" height="14.5" viewBox="0 0 16 16" fill="currentColor" style=""><rect x=".5" y="1.400" width="15" height="3.800" rx=".5"/><rect x=".5" y="6.100" width="15" height="3.800" rx=".5"/><rect x=".5" y="10.800" width="15" height="3.800" rx=".5"/><path d="M5.500 1.400v13.200" stroke="#fff" stroke-width=".9" opacity=".5"/><path d="M6 2.700h9M6 3.900h9M6 7.400h9M6 8.600h9M6 12.100h9M6 13.300h9" stroke="#fff" stroke-width=".45" opacity=".45"/></svg></span><span class="abs st" style="left:44px">canopus</span></div><div class="sitem" style="top:450.33px"><span class="abs" style="left:24.05px;top:6.84px"><svg class="i" width="14.5" height="14.5" viewBox="0 0 16 16" fill="currentColor" style=""><rect x=".5" y="1.400" width="15" height="3.800" rx=".5"/><rect x=".5" y="6.100" width="15" height="3.800" rx=".5"/><rect x=".5" y="10.800" width="15" height="3.800" rx=".5"/><path d="M5.500 1.400v13.200" stroke="#fff" stroke-width=".9" opacity=".5"/><path d="M6 2.700h9M6 3.900h9M6 7.400h9M6 8.600h9M6 12.100h9M6 13.300h9" stroke="#fff" stroke-width=".45" opacity=".45"/></svg></span><span class="abs st" style="left:44px">mintaka</span></div><div class="sitem" style="top:478.51px"><span class="abs" style="left:24.05px;top:6.84px"><svg class="i" width="14.5" height="14.5" viewBox="0 0 16 16" fill="currentColor" style=""><rect x=".5" y="1.400" width="15" height="3.800" rx=".5"/><rect x=".5" y="6.100" width="15" height="3.800" rx=".5"/><rect x=".5" y="10.800" width="15" height="3.800" rx=".5"/><path d="M5.500 1.400v13.200" stroke="#fff" stroke-width=".9" opacity=".5"/><path d="M6 2.700h9M6 3.900h9M6 7.400h9M6 8.600h9M6 12.100h9M6 13.300h9" stroke="#fff" stroke-width=".45" opacity=".45"/></svg></span><span class="abs st" style="left:44px">mirfak</span></div><div class="sitem" style="top:506.69px"><span class="abs" style="left:24.05px;top:6.84px"><svg class="i" width="14.5" height="14.5" viewBox="0 0 16 16" fill="currentColor" style=""><rect x=".5" y="1.400" width="15" height="3.800" rx=".5"/><rect x=".5" y="6.100" width="15" height="3.800" rx=".5"/><rect x=".5" y="10.800" width="15" height="3.800" rx=".5"/><path d="M5.500 1.400v13.200" stroke="#fff" stroke-width=".9" opacity=".5"/><path d="M6 2.700h9M6 3.900h9M6 7.400h9M6 8.600h9M6 12.100h9M6 13.300h9" stroke="#fff" stroke-width=".45" opacity=".45"/></svg></span><span class="abs st" style="left:44px">alnitak</span></div><div class="sitem" style="top:534.87px"><span class="abs" style="left:24.05px;top:6.84px"><svg class="i" width="14.5" height="14.5" viewBox="0 0 16 16" fill="currentColor" style=""><rect x=".5" y="1.400" width="15" height="3.800" rx=".5"/><rect x=".5" y="6.100" width="15" height="3.800" rx=".5"/><rect x=".5" y="10.800" width="15" height="3.800" rx=".5"/><path d="M5.500 1.400v13.200" stroke="#fff" stroke-width=".9" opacity=".5"/><path d="M6 2.700h9M6 3.900h9M6 7.400h9M6 8.600h9M6 12.100h9M6 13.300h9" stroke="#fff" stroke-width=".45" opacity=".45"/></svg></span><span class="abs st" style="left:44px">sadr</span></div><div class="sitem" style="top:563.05px"><span class="abs" style="left:24.05px;top:6.84px"><svg class="i" width="14.5" height="14.5" viewBox="0 0 16 16" fill="currentColor" style=""><rect x=".5" y="1.400" width="15" height="3.800" rx=".5"/><rect x=".5" y="6.100" width="15" height="3.800" rx=".5"/><rect x=".5" y="10.800" width="15" height="3.800" rx=".5"/><path d="M5.500 1.400v13.200" stroke="#fff" stroke-width=".9" opacity=".5"/><path d="M6 2.700h9M6 3.900h9M6 7.400h9M6 8.600h9M6 12.100h9M6 13.300h9" stroke="#fff" stroke-width=".45" opacity=".45"/></svg></span><span class="abs st" style="left:44px">procyon</span></div><div class="sitem" style="top:591.23px"><span class="abs" style="left:24.05px;top:6.84px"><svg class="i" width="14.5" height="14.5" viewBox="0 0 16 16" fill="currentColor" style=""><rect x=".5" y="1.400" width="15" height="3.800" rx=".5"/><rect x=".5" y="6.100" width="15" height="3.800" rx=".5"/><rect x=".5" y="10.800" width="15" height="3.800" rx=".5"/><path d="M5.500 1.400v13.200" stroke="#fff" stroke-width=".9" opacity=".5"/><path d="M6 2.700h9M6 3.900h9M6 7.400h9M6 8.600h9M6 12.100h9M6 13.300h9" stroke="#fff" stroke-width=".45" opacity=".45"/></svg></span><span class="abs st" style="left:44px">sabik</span></div><div class="sitem" style="top:619.41px"><span class="abs" style="left:24.05px;top:6.84px"><svg class="i" width="14.5" height="14.5" viewBox="0 0 16 16" fill="currentColor" style=""><rect x=".5" y="1.400" width="15" height="3.800" rx=".5"/><rect x=".5" y="6.100" width="15" height="3.800" rx=".5"/><rect x=".5" y="10.800" width="15" height="3.800" rx=".5"/><path d="M5.500 1.400v13.200" stroke="#fff" stroke-width=".9" opacity=".5"/><path d="M6 2.700h9M6 3.900h9M6 7.400h9M6 8.600h9M6 12.100h9M6 13.300h9" stroke="#fff" stroke-width=".45" opacity=".45"/></svg></span><span class="abs st" style="left:44px">mirfak</span></div><div class="sitem" style="top:647.59px"><span class="abs" style="left:24.05px;top:6.84px"><svg class="i" width="14.5" height="14.5" viewBox="0 0 16 16" fill="currentColor" style=""><rect x=".5" y="1.400" width="15" height="3.800" rx=".5"/><rect x=".5" y="6.100" width="15" height="3.800" rx=".5"/><rect x=".5" y="10.800" width="15" height="3.800" rx=".5"/><path d="M5.500 1.400v13.200" stroke="#fff" stroke-width=".9" opacity=".5"/><path d="M6 2.700h9M6 3.900h9M6 7.400h9M6 8.600h9M6 12.100h9M6 13.300h9" stroke="#fff" stroke-width=".45" opacity=".45"/></svg></span><span class="abs st" style="left:44px">saiph</span></div><div class="sitem" style="top:675.77px"><span class="abs" style="left:24.05px;top:6.84px"><svg class="i" width="14.5" height="14.5" viewBox="0 0 16 16" fill="currentColor" style=""><rect x=".5" y="1.400" width="15" height="3.800" rx=".5"/><rect x=".5" y="6.100" width="15" height="3.800" rx=".5"/><rect x=".5" y="10.800" width="15" height="3.800" rx=".5"/><path d="M5.500 1.400v13.200" stroke="#fff" stroke-width=".9" opacity=".5"/><path d="M6 2.700h9M6 3.900h9M6 7.400h9M6 8.600h9M6 12.100h9M6 13.300h9" stroke="#fff" stroke-width=".45" opacity=".45"/></svg></span><span class="abs st" style="left:44px">kochab</span></div><div class="sitem" style="top:703.95px"><span class="abs" style="left:24.05px;top:6.84px"><svg class="i" width="14.5" height="14.5" viewBox="0 0 16 16" fill="currentColor" style=""><rect x=".5" y="1.400" width="15" height="3.800" rx=".5"/><rect x=".5" y="6.100" width="15" height="3.800" rx=".5"/><rect x=".5" y="10.800" width="15" height="3.800" rx=".5"/><path d="M5.500 1.400v13.200" stroke="#fff" stroke-width=".9" opacity=".5"/><path d="M6 2.700h9M6 3.900h9M6 7.400h9M6 8.600h9M6 12.100h9M6 13.300h9" stroke="#fff" stroke-width=".45" opacity=".45"/></svg></span><span class="abs st" style="left:44px">algol</span></div><div class="sitem" style="top:732.13px"><span class="abs" style="left:24.05px;top:6.84px"><svg class="i" width="14.5" height="14.5" viewBox="0 0 16 16" fill="currentColor" style=""><rect x=".5" y="1.400" width="15" height="3.800" rx=".5"/><rect x=".5" y="6.100" width="15" height="3.800" rx=".5"/><rect x=".5" y="10.800" width="15" height="3.800" rx=".5"/><path d="M5.500 1.400v13.200" stroke="#fff" stroke-width=".9" opacity=".5"/><path d="M6 2.700h9M6 3.900h9M6 7.400h9M6 8.600h9M6 12.100h9M6 13.300h9" stroke="#fff" stroke-width=".45" opacity=".45"/></svg></span><span class="abs st" style="left:44px">betelgeuse</span></div></div><div class="cbg"></div><div class="content"><span class="abs" style="left:247.2px;top:65.2px"><svg class="i" width="11.5" height="11.5" viewBox="0 0 16 16" fill="currentColor" style="color:#2c64ae;"><path d="M13.300 6.300A5.600 5.600 0 0 0 3.200 4.700" fill="none" stroke="currentColor" stroke-width="3"/><path d="M2.700 9.700A5.600 5.600 0 0 0 12.800 11.300" fill="none" stroke="currentColor" stroke-width="3"/><path d="M15.500 .8v6.400H9.100zM.5 15.200V8.800h6.400z"/></svg></span><span class="abs bt" style="left:269.6px;top:63.2px"><span style="letter-spacing:.09px">Last refresh: 2025-12-03 14:46:56</span></span><span class="abs" style="left:2051.8px;top:65.2px"><svg class="i" width="14" height="14" viewBox="0 0 16 16" fill="currentColor" style="color:#2c64ae;"><circle cx="5.600" cy="8" r="3.100" fill="none" stroke="currentColor" stroke-width="3.400"/><circle cx="5.600" cy="8" r="4.900" fill="none" stroke="currentColor" stroke-width="1.400" stroke-dasharray="2.100 1.750"/><circle cx="12.600" cy="3.900" r="1.600" fill="none" stroke="currentColor" stroke-width="2.300"/><circle cx="12.600" cy="12.100" r="1.600" fill="none" stroke="currentColor" stroke-width="2.300"/></svg></span><div class="card" style="left:242.0px;top:102.0px;width:223.4px;height:218.2px"><span class="abs ct-i" style="left:7px;top:10.5px"><svg class="i" width="16" height="16" viewBox="0 0 16 16" fill="currentColor" style="color:#2c64ae;"><rect x=".5" y="1.400" width="15" height="3.800" rx=".5"/><rect x=".5" y="6.100" width="15" height="3.800" rx=".5"/><rect x=".5" y="10.800" width="15" height="3.800" rx=".5"/><path d="M5.500 1.400v13.200" stroke="#fff" stroke-width=".9" opacity=".5"/><path d="M6 2.700h9M6 3.900h9M6 7.400h9M6 8.600h9M6 12.100h9M6 13.300h9" stroke="#fff" stroke-width=".45" opacity=".45"/></svg></span><span class="abs ct" style="left:32px;top:8px;letter-spacing:-0.003px">Remotes</span><span class="sbtn abs" style="left:167.0px;top:8px;width:49.0px;height:24px">Add <svg class="i" width="12" height="12" viewBox="0 0 16 16" fill="currentColor" style=""><path d="M3.500 6h9L8 11z"/></svg></span><span class="abs" style="left:89.60000000000002px;top:99.0px"><svg class="i" width="44" height="44" viewBox="0 0 16 16" fill="currentColor" style="color:#1a9f53;"><path d="M1 8.6 L3.4 6.2 L6.3 9.1 L12.6 2.8 L15 5.2 L6.3 13.9 Z"/></svg></span><span class="abs bt c" style="left:0;width:100%;top:148.60000000000002px">Could reach all remotes.</span></div><div class="card" style="left:482.2px;top:102.0px;width:226.0px;height:218.2px"><span class="abs ct-i" style="left:7px;top:7.5px"><svg class="i" width="17" height="17" viewBox="0 0 16 16" fill="currentColor" style="color:#2c64ae;"><path d="M2.800 .4h10.400a.9.9 0 0 1 .9.9v13.400a.9.9 0 0 1-.9.900H2.800a.9.9 0 0 1-.9-.9V1.300a.9.9 0 0 1 .9-.9z"/><g fill="#fff" opacity=".4"><rect x="4.300" y="2.800" width="1.400" height="1.400"/><rect x="7.300" y="2.800" width="1.400" height="1.400"/><rect x="10.300" y="2.800" width="1.400" height="1.400"/><rect x="4.300" y="6" width="1.400" height="1.400"/><rect x="7.300" y="6" width="1.400" height="1.400"/><rect x="10.300" y="6" width="1.400" height="1.400"/></g><rect x="6.800" y="12.600" width="2.400" height="2.400" fill="#fff" opacity=".9"/></svg></span><span class="abs ct" style="left:31px;top:5.5px;letter-spacing:0.005px">Virtual Environment Nodes</span><span class="abs" style="left:90.19999999999999px;top:96.4px"><svg class="i" width="44" height="44" viewBox="0 0 16 16" fill="currentColor" style="color:#1a9f53;"><path d="M1 8.6 L3.4 6.2 L6.3 9.1 L12.6 2.8 L15 5.2 L6.3 13.9 Z"/></svg></span><span class="abs bt c" style="left:0;width:100%;top:146.0px">15 nodes online</span></div><div class="card" style="left:724.4px;top:102.0px;width:223.4px;height:218.2px"><span class="abs ct-i" style="left:7px;top:6.0px"><svg class="i" width="18" height="18" viewBox="0 0 16 16" fill="currentColor" style="color:#2c64ae;"><path d="M1 1.600h14v9.800H1z" fill="none" stroke="currentColor" stroke-width="1.800"/><path d="M1 8.800h14v2.600H1zM6 11.400h4l.5 2.300h1.500v1.100H4v-1.100h1.500z"/></svg></span><span class="abs ct" style="left:34px;top:4.5px;letter-spacing:0.135px">Virtual Machines</span><span class="abs" style="left:22.0px;top:59.0px"><svg class="i" width="12" height="12" viewBox="0 0 16 16" fill="currentColor" style="color:#1a9f53;"><path d="M3 1.500l11 6.500-11 6.500z"/></svg></span><span class="abs bt" style="left:43.60000000000002px;top:57.0px">running</span><span class="abs bt r" style="left:140.20000000000005px;width:40px;top:57.0px">50</span><span class="abs" style="left:187.40000000000003px;top:59.0px"><svg class="i" width="12.5" height="12.5" viewBox="0 0 16 16" fill="currentColor" style="color:#222;"><circle cx="6.700" cy="6.700" r="4.700" fill="none" stroke="currentColor" stroke-width="2.400"/><path d="M10.400 10.400l3.900 3.900" stroke="currentColor" stroke-width="2.900" stroke-linecap="round"/></svg></span><span class="abs" style="left:24.05px;top:87.45px"><svg class="i" width="10.5" height="10.5" viewBox="0 0 16 16" fill="currentColor" style="color:#bbb;"><rect x="1.500" y="1.500" width="13" height="13" rx="1"/></svg></span><span class="abs bt" style="left:43.60000000000002px;top:84.7px">stopped</span><span class="abs bt r" style="left:140.20000000000005px;width:40px;top:84.7px">35</span><span class="abs" style="left:187.40000000000003px;top:86.7px"><svg class="i" width="12.5" height="12.5" viewBox="0 0 16 16" fill="currentColor" style="color:#222;"><circle cx="6.700" cy="6.700" r="4.700" fill="none" stroke="currentColor" stroke-width="2.400"/><path d="M10.400 10.400l3.900 3.900" stroke="currentColor" stroke-width="2.900" stroke-linecap="round"/></svg></span><span class="abs" style="left:22.55px;top:113.65px"><svg class="i" width="13.5" height="13.5" viewBox="0 0 16 16" fill="currentColor" style="color:#222;"><path d="M1 1.600h14v9.800H1z" fill="none" stroke="currentColor" stroke-width="1.800"/><path d="M1 8.800h14v2.600H1zM6 11.400h4l.5 2.300h1.500v1.100H4v-1.100h1.500z"/></svg></span><span class="abs bt" style="left:43.60000000000002px;top:112.4px">All</span><span class="abs bt r" style="left:140.20000000000005px;width:40px;top:112.4px">85</span><span class="abs" style="left:187.40000000000003px;top:114.4px"><svg class="i" width="12.5" height="12.5" viewBox="0 0 16 16" fill="currentColor" style="color:#222;"><circle cx="6.700" cy="6.700" r="4.700" fill="none" stroke="currentColor" stroke-width="2.400"/><path d="M10.400 10.400l3.900 3.900" stroke="currentColor" stroke-width="2.900" stroke-linecap="round"/></svg></span></div><div class="card" style="left:964.8px;top:102.0px;width:223.4px;height:218.2px"><span class="abs ct-i" style="left:6px;top:7.5px"><svg class="i" width="17" height="17" viewBox="0 0 16 16" fill="currentColor" style="color:#2c64ae;"><path d="M2.300 1.100h11.400v13.800H2.300z" fill="none" stroke="currentColor" stroke-width="1.600"/><path d="M5 4h1.600M7.200 4h1.600M9.400 4H11M5 6.800h1.600M7.200 6.800h1.600M9.400 6.800H11M5 9.600h1.600M9.400 9.600H11M6.800 15v-2.800h2.400V15" stroke="currentColor" stroke-width="1.300" fill="none"/></svg></span><span class="abs ct" style="left:30px;top:5.5px;letter-spacing:-0.092px">Backup Server Nodes</span><span class="abs" style="left:89.79999999999995px;top:96.4px"><svg class="i" width="44" height="44" viewBox="0 0 16 16" fill="currentColor" style="color:#1a9f53;"><path d="M1 8.6 L3.4 6.2 L6.3 9.1 L12.6 2.8 L15 5.2 L6.3 13.9 Z"/></svg></span><span class="abs bt c" style="left:0;width:100%;top:146.0px">2 nodes online</span></div><div class="card" style="left:1206.0px;top:102.0px;width:223.8px;height:218.2px"><span class="abs ct-i" style="left:6px;top:5.0px"><svg class="i" width="20" height="20" viewBox="0 0 16 16" fill="currentColor" style="color:#2c64ae;"><path d="M8 .2l4 1.900v4L8 8 4 6.100v-4z"/><path d="M4.200 7.600l4 1.900v4.300l-4 1.900-4-1.900V9.500z"/><path d="M11.800 7.600l4 1.900v4.300l-4 1.900-4-1.900V9.500z"/><path d="M8 4.100v3.600M4.200 11.600v3.800M11.800 11.600v3.800M4.500 2.500L8 4.100l3.500-1.600M.600 9.900l3.600 1.700 3.600-1.700M8.200 9.900l3.600 1.700 3.600-1.700" stroke="#fff" stroke-width=".7" fill="none"/></svg></span><span class="abs ct" style="left:38px;top:4.5px;letter-spacing:-0.031px">Linux Container</span><span class="abs" style="left:21.4px;top:59.0px"><svg class="i" width="12" height="12" viewBox="0 0 16 16" fill="currentColor" style="color:#1a9f53;"><path d="M3 1.500l11 6.500-11 6.500z"/></svg></span><span class="abs bt" style="left:45.799999999999955px;top:57.0px">running</span><span class="abs bt r" style="left:140px;width:40px;top:57.0px">39</span><span class="abs" style="left:187.2000000000001px;top:59.0px"><svg class="i" width="12.5" height="12.5" viewBox="0 0 16 16" fill="currentColor" style="color:#222;"><circle cx="6.700" cy="6.700" r="4.700" fill="none" stroke="currentColor" stroke-width="2.400"/><path d="M10.400 10.400l3.900 3.900" stroke="currentColor" stroke-width="2.900" stroke-linecap="round"/></svg></span><span class="abs" style="left:23.45px;top:87.45px"><svg class="i" width="10.5" height="10.5" viewBox="0 0 16 16" fill="currentColor" style="color:#bbb;"><rect x="1.500" y="1.500" width="13" height="13" rx="1"/></svg></span><span class="abs bt" style="left:45.799999999999955px;top:84.7px">stopped</span><span class="abs bt r" style="left:140px;width:40px;top:84.7px">18</span><span class="abs" style="left:187.2000000000001px;top:86.7px"><svg class="i" width="12.5" height="12.5" viewBox="0 0 16 16" fill="currentColor" style="color:#222;"><circle cx="6.700" cy="6.700" r="4.700" fill="none" stroke="currentColor" stroke-width="2.400"/><path d="M10.400 10.400l3.900 3.900" stroke="currentColor" stroke-width="2.900" stroke-linecap="round"/></svg></span><span class="abs" style="left:21.15px;top:113.15px"><svg class="i" width="14.5" height="14.5" viewBox="0 0 16 16" fill="currentColor" style="color:#222;"><path d="M8 .2l4 1.900v4L8 8 4 6.100v-4z"/><path d="M4.200 7.600l4 1.900v4.300l-4 1.900-4-1.900V9.500z"/><path d="M11.800 7.600l4 1.900v4.300l-4 1.900-4-1.900V9.500z"/><path d="M8 4.100v3.600M4.200 11.600v3.800M11.800 11.600v3.800M4.500 2.500L8 4.100l3.500-1.600M.600 9.900l3.600 1.700 3.600-1.700M8.200 9.900l3.600 1.700 3.600-1.700" stroke="#fff" stroke-width=".7" fill="none"/></svg></span><span class="abs bt" style="left:45.799999999999955px;top:112.4px">All</span><span class="abs bt r" style="left:140px;width:40px;top:112.4px">57</span><span class="abs" style="left:187.2000000000001px;top:114.4px"><svg class="i" width="12.5" height="12.5" viewBox="0 0 16 16" fill="currentColor" style="color:#222;"><circle cx="6.700" cy="6.700" r="4.700" fill="none" stroke="currentColor" stroke-width="2.400"/><path d="M10.400 10.400l3.900 3.900" stroke="currentColor" stroke-width="2.900" stroke-linecap="round"/></svg></span></div><div class="card" style="left:1445.8px;top:102.0px;width:224.8px;height:218.2px"><span class="abs ct-i" style="left:7px;top:7.5px"><svg class="i" width="17" height="17" viewBox="0 0 16 16" fill="currentColor" style="color:#2c64ae;"><ellipse cx="8" cy="3" rx="6.200" ry="2.400"/><path d="M1.800 4.600c1 1.500 3.400 2 6.200 2s5.200-.5 6.200-2v2.800c-1 1.500-3.400 2-6.200 2s-5.200-.5-6.200-2zM1.800 8.800c1 1.500 3.400 2 6.200 2s5.200-.5 6.200-2v2.800c-1 1.500-3.400 2-6.200 2s-5.200-.5-6.200-2zM1.800 12.900c1 1.500 3.400 2 6.200 2s5.200-.5 6.200-2v.6c0 1.300-2.800 2.300-6.200 2.300s-6.200-1-6.200-2.300z"/></svg></span><span class="abs ct" style="left:30px;top:5.5px;letter-spacing:-0.087px">Backup Server Datastores</span><span class="abs" style="left:23.6px;top:59.8px"><svg class="i" width="12" height="12" viewBox="0 0 16 16" fill="currentColor" style="color:#1a9f53;"><path d="M1 8.6 L3.4 6.2 L6.3 9.1 L12.6 2.8 L15 5.2 L6.3 13.9 Z"/></svg></span><span class="abs bt" style="left:43.799999999999955px;top:57.80000000000001px">Online</span><span class="abs bt r" style="left:140.60000000000014px;width:40px;top:57.80000000000001px">5</span><span class="abs" style="left:188.00000000000006px;top:59.80000000000001px"><svg class="i" width="12.5" height="12.5" viewBox="0 0 16 16" fill="currentColor" style="color:#222;"><circle cx="6.700" cy="6.700" r="4.700" fill="none" stroke="currentColor" stroke-width="2.400"/><path d="M10.400 10.400l3.900 3.900" stroke="currentColor" stroke-width="2.900" stroke-linecap="round"/></svg></span><span class="abs" style="left:23.6px;top:93.4px"><svg class="i" width="12" height="12" viewBox="0 0 16 16" fill="currentColor" style="color:#222;"><path d="M14.6 4.3l-2.5 2.5-2.3-.5-.5-2.3 2.5-2.5a4 4 0 0 0-5 5.2L1.6 11.900a1.700 1.700 0 0 0 2.400 2.400l5.200-5.200a4 4 0 0 0 5.400-4.800z"/></svg></span><span class="abs bt" style="left:43.799999999999955px;top:91.4px">Under Maintenance</span><span class="abs bt r" style="left:140.60000000000014px;width:40px;top:91.4px">0</span><span class="abs" style="left:188.00000000000006px;top:93.4px"><svg class="i" width="12.5" height="12.5" viewBox="0 0 16 16" fill="currentColor" style="color:#222;"><circle cx="6.700" cy="6.700" r="4.700" fill="none" stroke="currentColor" stroke-width="2.400"/><path d="M10.400 10.400l3.900 3.900" stroke="currentColor" stroke-width="2.900" stroke-linecap="round"/></svg></span><span class="abs" style="left:23.35px;top:126.55px"><svg class="i" width="12.5" height="12.5" viewBox="0 0 16 16" fill="currentColor" style="color:#d9b21c;"><path d="M8 1L15.500 14.500H.5z"/><path d="M8 5.500v4.500" stroke="#fff" stroke-width="1.800"/><circle cx="8" cy="12" r="1" fill="#fff"/></svg></span><span class="abs bt" style="left:43.799999999999955px;top:124.80000000000001px">High usage</span><span class="abs bt r" style="left:140.60000000000014px;width:40px;top:124.80000000000001px">0</span><span class="abs" style="left:188.00000000000006px;top:126.80000000000001px"><svg class="i" width="12.5" height="12.5" viewBox="0 0 16 16" fill="currentColor" style="color:#222;"><circle cx="6.700" cy="6.700" r="4.700" fill="none" stroke="currentColor" stroke-width="2.400"/><path d="M10.400 10.400l3.900 3.900" stroke="currentColor" stroke-width="2.900" stroke-linecap="round"/></svg></span><span class="abs" style="left:23.6px;top:154.6px"><svg class="i" width="12" height="12" viewBox="0 0 16 16" fill="currentColor" style="color:#ccc;"><circle cx="8" cy="8" r="6.500"/><path d="M6 6.300a2 2 0 1 1 2.800 1.900c-.6.300-.8.700-.8 1.400" fill="none" stroke="#fff" stroke-width="1.500"/><circle cx="8" cy="11.800" r=".9" fill="#fff"/></svg></span><span class="abs bt" style="left:43.799999999999955px;top:152.60000000000002px">Unknown</span><span class="abs bt r" style="left:140.60000000000014px;width:40px;top:152.60000000000002px">0</span><span class="abs" style="left:188.00000000000006px;top:154.60000000000002px"><svg class="i" width="12.5" height="12.5" viewBox="0 0 16 16" fill="currentColor" style="color:#222;"><circle cx="6.700" cy="6.700" r="4.700" fill="none" stroke="currentColor" stroke-width="2.400"/><path d="M10.400 10.400l3.900 3.900" stroke="currentColor" stroke-width="2.900" stroke-linecap="round"/></svg></span><span class="abs" style="left:23.1px;top:181.9px"><svg class="i" width="13" height="13" viewBox="0 0 16 16" fill="currentColor" style="color:#222;"><ellipse cx="8" cy="3" rx="6.200" ry="2.400"/><path d="M1.800 4.600c1 1.500 3.400 2 6.200 2s5.200-.5 6.200-2v2.800c-1 1.500-3.400 2-6.200 2s-5.200-.5-6.200-2zM1.800 8.800c1 1.500 3.400 2 6.200 2s5.200-.5 6.200-2v2.800c-1 1.500-3.400 2-6.200 2s-5.200-.5-6.200-2zM1.800 12.900c1 1.500 3.400 2 6.200 2s5.200-.5 6.200-2v.6c0 1.300-2.800 2.300-6.200 2.300s-6.200-1-6.200-2.300z"/></svg></span><span class="abs bt" style="left:43.799999999999955px;top:180.39999999999998px">All</span><span class="abs bt r" style="left:140.60000000000014px;width:40px;top:180.39999999999998px">5</span><span class="abs" style="left:188.00000000000006px;top:182.39999999999998px"><svg class="i" width="12.5" height="12.5" viewBox="0 0 16 16" fill="currentColor" style="color:#222;"><circle cx="6.700" cy="6.700" r="4.700" fill="none" stroke="currentColor" stroke-width="2.400"/><path d="M10.400 10.400l3.900 3.900" stroke="currentColor" stroke-width="2.900" stroke-linecap="round"/></svg></span></div><div class="card" style="left:1685.6px;top:102.0px;width:385.2px;height:218.2px"><span class="abs ct-i" style="left:7px;top:10.100000000000001px"><svg class="i" width="18" height="18" viewBox="0 0 16 16" fill="currentColor" style="color:#2c64ae;"><path d="M9.800 1.300l4.900 4.900-8.500 8.500-4.900-4.900z"/><path d="M9.300 4l2.700 2.700-5.300 5.300L4 9.300z" fill="none" stroke="#fff" stroke-width=".8"/></svg></span><span class="abs ct" style="left:33.6px;top:8.6px;letter-spacing:0.105px">Subscription Status</span><span class="sbtn abs" style="left:327.0px;top:8.799999999999997px;width:50.4px;height:23.200px">Details</span><span class="abs" style="left:33.5px;top:107.9px"><svg class="i" width="45" height="45" viewBox="0 0 16 16" fill="currentColor" style="color:#1a9f53;"><path d="M1 8.6 L3.4 6.2 L6.3 9.1 L12.6 2.8 L15 5.2 L6.3 13.9 Z"/></svg></span><span class="abs sub" style="left:82.20000000000005px;width:300px;top:101.8px">Your subscription status is<br>valid.</span></div><div class="card" style="left:242.6px;top:337.4px;width:598.2px;height:424.6px"><span class="abs ct-i" style="left:6px;top:9.2px"><svg class="i" width="18" height="18" viewBox="0 0 16 16" fill="currentColor" style="color:#2c64ae;"><path d="M1 1.600h14v9.800H1z" fill="none" stroke="currentColor" stroke-width="1.800"/><path d="M1 8.800h14v2.600H1zM6 11.400h4l.5 2.300h1.500v1.100H4v-1.100h1.500z"/></svg></span><span class="abs ct" style="left:32.5px;top:7.7px;letter-spacing:-0.112px">Guests With the Highest CPU Usage</span><span class="abs" style="left:13.099999999999966px;top:58.3px"><svg class="i" width="13" height="13" viewBox="0 0 16 16" fill="currentColor" style="color:#222;"><path d="M8 .8l6.500 3v8.400L8 15.200 1.500 12.200V3.800z"/><path d="M8 .8l6.500 3L8 6.800 1.500 3.800z" fill="#fff" opacity=".35"/><path d="M8 6.800v8.400" stroke="#fff" stroke-width=".8" opacity=".6"/></svg></span><span class="abs bt" style="left:35.0px;top:56.8px">alnitak<span style="margin:0 9px">-</span>nunki (169)</span><span class="abs" style="left:190.59999999999997px;top:58.099999999999994px"><svg class="i" width="12.5" height="12.5" viewBox="0 0 16 16" fill="currentColor" style="color:#2c64ae;"><path d="M11.300 9.200v3.300a1.400 1.400 0 0 1-1.400 1.400H3.500a1.400 1.400 0 0 1-1.400-1.400V6.100a1.400 1.400 0 0 1 1.400-1.400H7.500" fill="none" stroke="currentColor" stroke-width="1.500"/><path d="M9.600 1.400h5v5zM13.800 2.200L7.400 8.600" stroke="currentColor" stroke-width="1.700" fill="currentColor"/></svg></span><span class="abs bar" style="left:222.39999999999998px;width:359.2px;top:56.8px;background:linear-gradient(to right,#7d9e3a 0%,#7d9e3a 10%,#52a348 25%,#45a34a 50%,#4da349 72%,#6fa03f 85%,#7a9f3c 100%)"></span><span class="abs" style="left:14.099999999999966px;top:95.02px"><svg class="i" width="13" height="13" viewBox="0 0 16 16" fill="currentColor" style="color:#222;"><path d="M1 1.600h14v9.800H1z" fill="none" stroke="currentColor" stroke-width="1.800"/><path d="M1 8.800h14v2.600H1zM6 11.400h4l.5 2.300h1.500v1.100H4v-1.100h1.500z"/></svg></span><span class="abs bt" style="left:35.0px;top:93.52px">kochab<span style="margin:0 9px">-</span>pollux (212)</span><span class="abs" style="left:190.59999999999997px;top:94.82px"><svg class="i" width="12.5" height="12.5" viewBox="0 0 16 16" fill="currentColor" style="color:#2c64ae;"><path d="M11.300 9.200v3.300a1.400 1.400 0 0 1-1.400 1.400H3.500a1.400 1.400 0 0 1-1.400-1.400V6.100a1.400 1.400 0 0 1 1.400-1.400H7.500" fill="none" stroke="currentColor" stroke-width="1.500"/><path d="M9.600 1.400h5v5zM13.800 2.200L7.400 8.600" stroke="currentColor" stroke-width="1.700" fill="currentColor"/></svg></span><span class="abs bar" style="left:222.39999999999998px;width:359.2px;top:93.52px;background:linear-gradient(to right,#5fa545 0%,#5fa545 22%,#22a352 24%,#22a352 40%,#3da64f 41%,#22a352 42%,#22a352 72%,#7fa33b 74%,#7fa33b 86%,#4aa449 88%,#4aa449 100%)"></span><span class="abs" style="left:14.099999999999966px;top:131.74px"><svg class="i" width="13" height="13" viewBox="0 0 16 16" fill="currentColor" style="color:#222;"><path d="M1 1.600h14v9.800H1z" fill="none" stroke="currentColor" stroke-width="1.800"/><path d="M1 8.800h14v2.600H1zM6 11.400h4l.5 2.300h1.500v1.100H4v-1.100h1.500z"/></svg></span><span class="abs bt" style="left:35.0px;top:130.24px">kochab<span style="margin:0 9px">-</span>maia (240)</span><span class="abs" style="left:190.59999999999997px;top:131.54000000000002px"><svg class="i" width="12.5" height="12.5" viewBox="0 0 16 16" fill="currentColor" style="color:#2c64ae;"><path d="M11.300 9.200v3.300a1.400 1.400 0 0 1-1.400 1.400H3.500a1.400 1.400 0 0 1-1.400-1.400V6.100a1.400 1.400 0 0 1 1.400-1.400H7.500" fill="none" stroke="currentColor" stroke-width="1.500"/><path d="M9.600 1.400h5v5zM13.800 2.200L7.400 8.600" stroke="currentColor" stroke-width="1.700" fill="currentColor"/></svg></span><span class="abs bar" style="left:222.39999999999998px;width:359.2px;top:130.24px;background:linear-gradient(to right,#2aa24e 0%,#2aa24e 36%,#45a54b 37%,#2aa24e 38%,#2aa24e 73%,#45a54b 75%,#2aa24e 78%,#2aa24e 100%)"></span><span class="abs" style="left:13.099999999999966px;top:168.45999999999998px"><svg class="i" width="13" height="13" viewBox="0 0 16 16" fill="currentColor" style="color:#222;"><path d="M8 .8l6.500 3v8.400L8 15.200 1.500 12.200V3.800z"/><path d="M8 .8l6.500 3L8 6.800 1.500 3.800z" fill="#fff" opacity=".35"/><path d="M8 6.800v8.400" stroke="#fff" stroke-width=".8" opacity=".6"/></svg></span><span class="abs bt" style="left:35.0px;top:166.95999999999998px">alnitak<span style="margin:0 9px">-</span>aldebaran (252)</span><span class="abs" style="left:190.59999999999997px;top:168.26px"><svg class="i" width="12.5" height="12.5" viewBox="0 0 16 16" fill="currentColor" style="color:#2c64ae;"><path d="M11.300 9.200v3.300a1.400 1.400 0 0 1-1.400 1.400H3.500a1.400 1.400 0 0 1-1.400-1.400V6.100a1.400 1.400 0 0 1 1.400-1.400H7.500" fill="none" stroke="currentColor" stroke-width="1.500"/><path d="M9.600 1.400h5v5zM13.800 2.200L7.400 8.600" stroke="currentColor" stroke-width="1.700" fill="currentColor"/></svg></span><span class="abs bar" style="left:222.39999999999998px;width:359.2px;top:166.95999999999998px;background:linear-gradient(to right,#2aa24e 0%,#3ba44c 5%,#2aa24e 10%,#2aa24e 52%,#4aa64a 54%,#2aa24e 56%,#2aa24e 100%)"></span><span class="abs" style="left:13.099999999999966px;top:205.18px"><svg class="i" width="13" height="13" viewBox="0 0 16 16" fill="currentColor" style="color:#222;"><path d="M8 .8l6.500 3v8.400L8 15.200 1.500 12.200V3.800z"/><path d="M8 .8l6.500 3L8 6.800 1.500 3.800z" fill="#fff" opacity=".35"/><path d="M8 6.800v8.400" stroke="#fff" stroke-width=".8" opacity=".6"/></svg></span><span class="abs bt" style="left:35.0px;top:203.68px">alnitak<span style="margin:0 9px">-</span>electra (253)</span><span class="abs" style="left:190.59999999999997px;top:204.98000000000002px"><svg class="i" width="12.5" height="12.5" viewBox="0 0 16 16" fill="currentColor" style="color:#2c64ae;"><path d="M11.300 9.200v3.300a1.400 1.400 0 0 1-1.400 1.400H3.500a1.400 1.400 0 0 1-1.400-1.400V6.100a1.400 1.400 0 0 1 1.400-1.400H7.500" fill="none" stroke="currentColor" stroke-width="1.500"/><path d="M9.600 1.400h5v5zM13.800 2.200L7.400 8.600" stroke="currentColor" stroke-width="1.700" fill="currentColor"/></svg></span><span class="abs bar" style="left:222.39999999999998px;width:359.2px;top:203.68px;background:linear-gradient(to right,#22a352 0%,#22a352 100%)"></span><span class="abs" style="left:14.099999999999966px;top:241.89999999999998px"><svg class="i" width="13" height="13" viewBox="0 0 16 16" fill="currentColor" style="color:#222;"><path d="M1 1.600h14v9.800H1z" fill="none" stroke="currentColor" stroke-width="1.800"/><path d="M1 8.800h14v2.600H1zM6 11.400h4l.5 2.300h1.500v1.100H4v-1.100h1.500z"/></svg></span><span class="abs bt" style="left:35.0px;top:240.39999999999998px">kochab<span style="margin:0 9px">-</span>mintaka (214)</span><span class="abs" style="left:190.59999999999997px;top:241.7px"><svg class="i" width="12.5" height="12.5" viewBox="0 0 16 16" fill="currentColor" style="color:#2c64ae;"><path d="M11.300 9.200v3.300a1.400 1.400 0 0 1-1.400 1.400H3.500a1.400 1.400 0 0 1-1.400-1.400V6.100a1.400 1.400 0 0 1 1.400-1.400H7.500" fill="none" stroke="currentColor" stroke-width="1.500"/><path d="M9.600 1.400h5v5zM13.800 2.200L7.400 8.600" stroke="currentColor" stroke-width="1.700" fill="currentColor"/></svg></span><span class="abs bar" style="left:222.39999999999998px;width:359.2px;top:240.39999999999998px;background:linear-gradient(to right,#30a34e 0%,#22a352 15%,#22a352 40%,#3aa54c 42%,#22a352 44%,#2aa350 100%)"></span><span class="abs" style="left:14.099999999999966px;top:278.62px"><svg class="i" width="13" height="13" viewBox="0 0 16 16" fill="currentColor" style="color:#222;"><path d="M1 1.600h14v9.800H1z" fill="none" stroke="currentColor" stroke-width="1.800"/><path d="M1 8.800h14v2.600H1zM6 11.400h4l.5 2.300h1.500v1.100H4v-1.100h1.500z"/></svg></span><span class="abs bt" style="left:35.0px;top:277.12px">kochab<span style="margin:0 9px">-</span>izar (225)</span><span class="abs" style="left:190.59999999999997px;top:278.42px"><svg class="i" width="12.5" height="12.5" viewBox="0 0 16 16" fill="currentColor" style="color:#2c64ae;"><path d="M11.300 9.200v3.300a1.400 1.400 0 0 1-1.400 1.400H3.500a1.400 1.400 0 0 1-1.400-1.400V6.100a1.400 1.400 0 0 1 1.400-1.400H7.500" fill="none" stroke="currentColor" stroke-width="1.500"/><path d="M9.600 1.400h5v5zM13.800 2.200L7.400 8.600" stroke="currentColor" stroke-width="1.700" fill="currentColor"/></svg></span><span class="abs bar" style="left:222.39999999999998px;width:359.2px;top:277.12px;background:linear-gradient(to right,#2fa34e 0%,#3fa54b 17%,#6aa640 17.5%,#2fa34e 18.5%,#2fa34e 59%,#7aa63c 59.5%,#2fa34e 60.5%,#36a44c 100%)"></span><span class="abs" style="left:14.099999999999966px;top:315.34px"><svg class="i" width="13" height="13" viewBox="0 0 16 16" fill="currentColor" style="color:#222;"><path d="M1 1.600h14v9.800H1z" fill="none" stroke="currentColor" stroke-width="1.800"/><path d="M1 8.800h14v2.600H1zM6 11.400h4l.5 2.300h1.500v1.100H4v-1.100h1.500z"/></svg></span><span class="abs bt" style="left:35.0px;top:313.84px">kochab<span style="margin:0 9px">-</span>electra (206)</span><span class="abs" style="left:190.59999999999997px;top:315.14px"><svg class="i" width="12.5" height="12.5" viewBox="0 0 16 16" fill="currentColor" style="color:#2c64ae;"><path d="M11.300 9.200v3.300a1.400 1.400 0 0 1-1.400 1.400H3.500a1.400 1.400 0 0 1-1.400-1.400V6.100a1.400 1.400 0 0 1 1.400-1.400H7.500" fill="none" stroke="currentColor" stroke-width="1.500"/><path d="M9.600 1.400h5v5zM13.800 2.200L7.400 8.600" stroke="currentColor" stroke-width="1.700" fill="currentColor"/></svg></span><span class="abs bar" style="left:222.39999999999998px;width:359.2px;top:313.84px;background:linear-gradient(to right,#22a352 0%,#22a352 100%)"></span><span class="abs" style="left:14.099999999999966px;top:352.06px"><svg class="i" width="13" height="13" viewBox="0 0 16 16" fill="currentColor" style="color:#222;"><path d="M1 1.600h14v9.800H1z" fill="none" stroke="currentColor" stroke-width="1.800"/><path d="M1 8.800h14v2.600H1zM6 11.400h4l.5 2.300h1.500v1.100H4v-1.100h1.500z"/></svg></span><span class="abs bt" style="left:35.0px;top:350.56px">kochab<span style="margin:0 9px">-</span>spica (219)</span><span class="abs" style="left:190.59999999999997px;top:351.86px"><svg class="i" width="12.5" height="12.5" viewBox="0 0 16 16" fill="currentColor" style="color:#2c64ae;"><path d="M11.300 9.200v3.300a1.400 1.400 0 0 1-1.400 1.400H3.500a1.400 1.400 0 0 1-1.400-1.400V6.100a1.400 1.400 0 0 1 1.400-1.400H7.500" fill="none" stroke="currentColor" stroke-width="1.500"/><path d="M9.600 1.400h5v5zM13.800 2.200L7.400 8.600" stroke="currentColor" stroke-width="1.700" fill="currentColor"/></svg></span><span class="abs bar" style="left:222.39999999999998px;width:359.2px;top:350.56px;background:linear-gradient(to right,#3ba54b 0%,#3ba54b 14%,#22a352 16%,#22a352 42%,#35a54d 45%,#22a352 48%,#22a352 75%,#3aa54c 80%,#3aa54c 100%)"></span><span class="abs" style="left:14.099999999999966px;top:388.78000000000003px"><svg class="i" width="13" height="13" viewBox="0 0 16 16" fill="currentColor" style="color:#222;"><path d="M1 1.600h14v9.800H1z" fill="none" stroke="currentColor" stroke-width="1.800"/><path d="M1 8.800h14v2.600H1zM6 11.400h4l.5 2.300h1.500v1.100H4v-1.100h1.500z"/></svg></span><span class="abs bt" style="left:35.0px;top:387.28000000000003px">mirfak<span style="margin:0 9px">-</span>alnilam (126)</span><span class="abs" style="left:190.59999999999997px;top:388.58000000000004px"><svg class="i" width="12.5" height="12.5" viewBox="0 0 16 16" fill="currentColor" style="color:#2c64ae;"><path d="M11.300 9.200v3.300a1.400 1.400 0 0 1-1.400 1.400H3.500a1.400 1.400 0 0 1-1.400-1.400V6.100a1.400 1.400 0 0 1 1.400-1.400H7.500" fill="none" stroke="currentColor" stroke-width="1.500"/><path d="M9.600 1.400h5v5zM13.800 2.200L7.400 8.600" stroke="currentColor" stroke-width="1.700" fill="currentColor"/></svg></span><span class="abs bar" style="left:222.39999999999998px;width:359.2px;top:387.28000000000003px;background:linear-gradient(to right,#22a352 0%,#22a352 35%,#2fa54e 37%,#22a352 40%,#22a352 100%)"></span></div><div class="card" style="left:857.8px;top:337.4px;width:597.2px;height:424.6px"><span class="abs ct-i" style="left:6px;top:9.95px"><svg class="i" width="16.5" height="16.5" viewBox="0 0 16 16" fill="currentColor" style="color:#2c64ae;"><path d="M2.800 .4h10.400a.9.9 0 0 1 .9.9v13.400a.9.9 0 0 1-.9.900H2.800a.9.9 0 0 1-.9-.9V1.300a.9.9 0 0 1 .9-.9z"/><g fill="#fff" opacity=".4"><rect x="4.300" y="2.800" width="1.400" height="1.400"/><rect x="7.300" y="2.800" width="1.400" height="1.400"/><rect x="10.300" y="2.800" width="1.400" height="1.400"/><rect x="4.300" y="6" width="1.400" height="1.400"/><rect x="7.300" y="6" width="1.400" height="1.400"/><rect x="10.300" y="6" width="1.400" height="1.400"/></g><rect x="6.800" y="12.600" width="2.400" height="2.400" fill="#fff" opacity=".9"/></svg></span><span class="abs ct" style="left:30px;top:7.7px;letter-spacing:-0.099px">Nodes With the Highest CPU Usage</span><span class="abs" style="left:14.900000000000091px;top:58.8px"><svg class="i" width="12" height="12" viewBox="0 0 16 16" fill="currentColor" style="color:#222;"><path d="M2 .3h12a.6.6 0 0 1 .6.6v14.200a.6.6 0 0 1-.6.600H2a.6.6 0 0 1-.6-.6V.9A.6.6 0 0 1 2 .3z"/><g fill="#fff" opacity=".75"><rect x="4" y="2.600" width="1.500" height="1.500"/><rect x="7.250" y="2.600" width="1.500" height="1.500"/><rect x="10.500" y="2.600" width="1.500" height="1.500"/><rect x="4" y="5.800" width="1.500" height="1.500"/><rect x="7.250" y="5.800" width="1.500" height="1.500"/><rect x="10.500" y="5.800" width="1.500" height="1.500"/><rect x="4" y="9" width="1.500" height="1.500"/><rect x="10.500" y="9" width="1.500" height="1.500"/><rect x="6.700" y="12.300" width="2.600" height="2.600"/></g></svg></span><span class="abs bt" style="left:33.200000000000045px;top:56.8px">alnitak<span style="margin:0 9px">-</span>alkaid</span><span class="abs" style="left:156.40000000000015px;top:58.099999999999994px"><svg class="i" width="12.5" height="12.5" viewBox="0 0 16 16" fill="currentColor" style="color:#2c64ae;"><path d="M11.300 9.200v3.300a1.400 1.400 0 0 1-1.400 1.400H3.500a1.400 1.400 0 0 1-1.400-1.400V6.100a1.400 1.400 0 0 1 1.400-1.400H7.500" fill="none" stroke="currentColor" stroke-width="1.500"/><path d="M9.600 1.400h5v5zM13.800 2.200L7.400 8.600" stroke="currentColor" stroke-width="1.700" fill="currentColor"/></svg></span><span class="abs bar" style="left:187.79999999999995px;width:393.6px;top:56.8px;background:linear-gradient(to right,#2fa24e 0%,#36a34c 8%,#2ba24f 9%,#2ba24f 100%)"></span><span class="abs" style="left:14.900000000000091px;top:95.52px"><svg class="i" width="12" height="12" viewBox="0 0 16 16" fill="currentColor" style="color:#222;"><path d="M2 .3h12a.6.6 0 0 1 .6.6v14.200a.6.6 0 0 1-.6.600H2a.6.6 0 0 1-.6-.6V.9A.6.6 0 0 1 2 .3z"/><g fill="#fff" opacity=".75"><rect x="4" y="2.600" width="1.500" height="1.500"/><rect x="7.250" y="2.600" width="1.500" height="1.500"/><rect x="10.500" y="2.600" width="1.500" height="1.500"/><rect x="4" y="5.800" width="1.500" height="1.500"/><rect x="7.250" y="5.800" width="1.500" height="1.500"/><rect x="10.500" y="5.800" width="1.500" height="1.500"/><rect x="4" y="9" width="1.500" height="1.500"/><rect x="10.500" y="9" width="1.500" height="1.500"/><rect x="6.700" y="12.300" width="2.600" height="2.600"/></g></svg></span><span class="abs bt" style="left:33.200000000000045px;top:93.52px">kochab<span style="margin:0 9px">-</span>nunki</span><span class="abs" style="left:156.40000000000015px;top:94.82px"><svg class="i" width="12.5" height="12.5" viewBox="0 0 16 16" fill="currentColor" style="color:#2c64ae;"><path d="M11.300 9.200v3.300a1.400 1.400 0 0 1-1.400 1.400H3.500a1.400 1.400 0 0 1-1.400-1.400V6.100a1.400 1.400 0 0 1 1.400-1.400H7.500" fill="none" stroke="currentColor" stroke-width="1.500"/><path d="M9.600 1.400h5v5zM13.800 2.200L7.400 8.600" stroke="currentColor" stroke-width="1.700" fill="currentColor"/></svg></span><span class="abs bar" style="left:187.79999999999995px;width:393.6px;top:93.52px;background:linear-gradient(to right,#33a34d 0%,#33a34d 36%,#48a449 37%,#48a449 43%,#33a34d 44%,#33a34d 60%,#40a44b 61%,#33a34d 76%,#3ea44b 78%,#33a34d 92%,#33a34d 100%)"></span><span class="abs" style="left:14.900000000000091px;top:132.24px"><svg class="i" width="12" height="12" viewBox="0 0 16 16" fill="currentColor" style="color:#222;"><path d="M2 .3h12a.6.6 0 0 1 .6.6v14.200a.6.6 0 0 1-.6.600H2a.6.6 0 0 1-.6-.6V.9A.6.6 0 0 1 2 .3z"/><g fill="#fff" opacity=".75"><rect x="4" y="2.600" width="1.500" height="1.500"/><rect x="7.250" y="2.600" width="1.500" height="1.500"/><rect x="10.500" y="2.600" width="1.500" height="1.500"/><rect x="4" y="5.800" width="1.500" height="1.500"/><rect x="7.250" y="5.800" width="1.500" height="1.500"/><rect x="10.500" y="5.800" width="1.500" height="1.500"/><rect x="4" y="9" width="1.500" height="1.500"/><rect x="10.500" y="9" width="1.500" height="1.500"/><rect x="6.700" y="12.300" width="2.600" height="2.600"/></g></svg></span><span class="abs bt" style="left:33.200000000000045px;top:130.24px">kochab<span style="margin:0 9px">-</span>mirfak</span><span class="abs" style="left:156.40000000000015px;top:131.54000000000002px"><svg class="i" width="12.5" height="12.5" viewBox="0 0 16 16" fill="currentColor" style="color:#2c64ae;"><path d="M11.300 9.200v3.300a1.400 1.400 0 0 1-1.400 1.400H3.500a1.400 1.400 0 0 1-1.400-1.400V6.100a1.400 1.400 0 0 1 1.400-1.400H7.500" fill="none" stroke="currentColor" stroke-width="1.500"/><path d="M9.600 1.400h5v5zM13.800 2.200L7.400 8.600" stroke="currentColor" stroke-width="1.700" fill="currentColor"/></svg></span><span class="abs bar" style="left:187.79999999999995px;width:393.6px;top:130.24px;background:linear-gradient(to right,#2ea24e 0%,#2ea24e 36%,#45a44a 37%,#45a44a 43%,#2ea24e 44%,#2ea24e 74%,#3fa44b 75%,#2ea24e 76%,#2ea24e 100%)"></span><span class="abs" style="left:14.900000000000091px;top:168.95999999999998px"><svg class="i" width="12" height="12" viewBox="0 0 16 16" fill="currentColor" style="color:#222;"><path d="M2 .3h12a.6.6 0 0 1 .6.6v14.200a.6.6 0 0 1-.6.600H2a.6.6 0 0 1-.6-.6V.9A.6.6 0 0 1 2 .3z"/><g fill="#fff" opacity=".75"><rect x="4" y="2.600" width="1.500" height="1.500"/><rect x="7.250" y="2.600" width="1.500" height="1.500"/><rect x="10.500" y="2.600" width="1.500" height="1.500"/><rect x="4" y="5.800" width="1.500" height="1.500"/><rect x="7.250" y="5.800" width="1.500" height="1.500"/><rect x="10.500" y="5.800" width="1.500" height="1.500"/><rect x="4" y="9" width="1.500" height="1.500"/><rect x="10.500" y="9" width="1.500" height="1.500"/><rect x="6.700" y="12.300" width="2.600" height="2.600"/></g></svg></span><span class="abs bt" style="left:33.200000000000045px;top:166.95999999999998px">procyon<span style="margin:0 9px">-</span>procyon</span><span class="abs" style="left:156.40000000000015px;top:168.26px"><svg class="i" width="12.5" height="12.5" viewBox="0 0 16 16" fill="currentColor" style="color:#2c64ae;"><path d="M11.300 9.200v3.300a1.400 1.400 0 0 1-1.400 1.400H3.500a1.400 1.400 0 0 1-1.400-1.400V6.100a1.400 1.400 0 0 1 1.400-1.400H7.500" fill="none" stroke="currentColor" stroke-width="1.500"/><path d="M9.600 1.400h5v5zM13.800 2.200L7.400 8.600" stroke="currentColor" stroke-width="1.700" fill="currentColor"/></svg></span><span class="abs bar" style="left:187.79999999999995px;width:393.6px;top:166.95999999999998px;background:linear-gradient(to right,#14a055 0%,#14a055 13%,#35a54f 14%,#14a055 15%,#14a055 30%,#30a550 30.5%,#14a055 31.5%,#14a055 38%,#30a550 39%,#14a055 40%,#3aa44c 42%,#3aa44c 75%,#2ba250 77%,#2ba250 88%,#3fa44b 90%,#3fa44b 100%)"></span><span class="abs" style="left:14.900000000000091px;top:205.68px"><svg class="i" width="12" height="12" viewBox="0 0 16 16" fill="currentColor" style="color:#777;"><path d="M2.300 1.100h11.400v13.800H2.300z" fill="none" stroke="currentColor" stroke-width="1.600"/><path d="M5 4h1.600M7.200 4h1.600M9.400 4H11M5 6.800h1.600M7.200 6.800h1.600M9.400 6.800H11M5 9.600h1.600M9.400 9.600H11M6.800 15v-2.800h2.400V15" stroke="currentColor" stroke-width="1.300" fill="none"/></svg></span><span class="abs bt" style="left:33.200000000000045px;top:203.68px">mirfak<span style="margin:0 9px">-</span>zaniah</span><span class="abs" style="left:156.40000000000015px;top:204.98000000000002px"><svg class="i" width="12.5" height="12.5" viewBox="0 0 16 16" fill="currentColor" style="color:#2c64ae;"><path d="M11.300 9.200v3.300a1.400 1.400 0 0 1-1.400 1.400H3.500a1.400 1.400 0 0 1-1.400-1.400V6.100a1.400 1.400 0 0 1 1.400-1.400H7.500" fill="none" stroke="currentColor" stroke-width="1.500"/><path d="M9.600 1.400h5v5zM13.800 2.200L7.400 8.600" stroke="currentColor" stroke-width="1.700" fill="currentColor"/></svg></span><span class="abs bar" style="left:187.79999999999995px;width:393.6px;top:203.68px;background:linear-gradient(to right,#14a055 0%,#14a055 30%,#35a54f 30.5%,#14a055 31.5%,#14a055 37.5%,#72a03b 38%,#72a03b 46.5%,#14a055 47%,#14a055 88%,#35a54f 88.5%,#14a055 89.5%,#14a055 100%)"></span><span class="abs" style="left:14.900000000000091px;top:242.39999999999998px"><svg class="i" width="12" height="12" viewBox="0 0 16 16" fill="currentColor" style="color:#222;"><path d="M2 .3h12a.6.6 0 0 1 .6.6v14.200a.6.6 0 0 1-.6.600H2a.6.6 0 0 1-.6-.6V.9A.6.6 0 0 1 2 .3z"/><g fill="#fff" opacity=".75"><rect x="4" y="2.600" width="1.500" height="1.500"/><rect x="7.250" y="2.600" width="1.500" height="1.500"/><rect x="10.500" y="2.600" width="1.500" height="1.500"/><rect x="4" y="5.800" width="1.500" height="1.500"/><rect x="7.250" y="5.800" width="1.500" height="1.500"/><rect x="10.500" y="5.800" width="1.500" height="1.500"/><rect x="4" y="9" width="1.500" height="1.500"/><rect x="10.500" y="9" width="1.500" height="1.500"/><rect x="6.700" y="12.300" width="2.600" height="2.600"/></g></svg></span><span class="abs bt" style="left:33.200000000000045px;top:240.39999999999998px">alnitak<span style="margin:0 9px">-</span>nunki</span><span class="abs" style="left:156.40000000000015px;top:241.7px"><svg class="i" width="12.5" height="12.5" viewBox="0 0 16 16" fill="currentColor" style="color:#2c64ae;"><path d="M11.300 9.200v3.300a1.400 1.400 0 0 1-1.400 1.400H3.500a1.400 1.400 0 0 1-1.400-1.400V6.100a1.400 1.400 0 0 1 1.400-1.400H7.500" fill="none" stroke="currentColor" stroke-width="1.500"/><path d="M9.600 1.400h5v5zM13.800 2.200L7.400 8.600" stroke="currentColor" stroke-width="1.700" fill="currentColor"/></svg></span><span class="abs bar" style="left:187.79999999999995px;width:393.6px;top:240.39999999999998px;background:linear-gradient(to right,#2ba24f 0%,#2ba24f 100%)"></span><span class="abs" style="left:14.900000000000091px;top:279.12px"><svg class="i" width="12" height="12" viewBox="0 0 16 16" fill="currentColor" style="color:#222;"><path d="M2 .3h12a.6.6 0 0 1 .6.6v14.200a.6.6 0 0 1-.6.600H2a.6.6 0 0 1-.6-.6V.9A.6.6 0 0 1 2 .3z"/><g fill="#fff" opacity=".75"><rect x="4" y="2.600" width="1.500" height="1.500"/><rect x="7.250" y="2.600" width="1.500" height="1.500"/><rect x="10.500" y="2.600" width="1.500" height="1.500"/><rect x="4" y="5.800" width="1.500" height="1.500"/><rect x="7.250" y="5.800" width="1.500" height="1.500"/><rect x="10.500" y="5.800" width="1.500" height="1.500"/><rect x="4" y="9" width="1.500" height="1.500"/><rect x="10.500" y="9" width="1.500" height="1.500"/><rect x="6.700" y="12.300" width="2.600" height="2.600"/></g></svg></span><span class="abs bt" style="left:33.200000000000045px;top:277.12px">sabik<span style="margin:0 9px">-</span>sabik</span><span class="abs" style="left:156.40000000000015px;top:278.42px"><svg class="i" width="12.5" height="12.5" viewBox="0 0 16 16" fill="currentColor" style="color:#2c64ae;"><path d="M11.300 9.200v3.300a1.400 1.400 0 0 1-1.400 1.400H3.500a1.400 1.400 0 0 1-1.400-1.400V6.100a1.400 1.400 0 0 1 1.400-1.400H7.500" fill="none" stroke="currentColor" stroke-width="1.500"/><path d="M9.600 1.400h5v5zM13.800 2.200L7.400 8.600" stroke="currentColor" stroke-width="1.700" fill="currentColor"/></svg></span><span class="abs bar" style="left:187.79999999999995px;width:393.6px;top:277.12px;background:linear-gradient(to right,#14a055 0%,#14a055 13%,#35a54f 14%,#14a055 15%,#14a055 30%,#35a54f 30.5%,#14a055 31.5%,#14a055 37.5%,#72a03b 38%,#72a03b 46.5%,#14a055 47%,#14a055 100%)"></span><span class="abs" style="left:14.900000000000091px;top:315.84px"><svg class="i" width="12" height="12" viewBox="0 0 16 16" fill="currentColor" style="color:#222;"><path d="M2 .3h12a.6.6 0 0 1 .6.6v14.200a.6.6 0 0 1-.6.600H2a.6.6 0 0 1-.6-.6V.9A.6.6 0 0 1 2 .3z"/><g fill="#fff" opacity=".75"><rect x="4" y="2.600" width="1.500" height="1.500"/><rect x="7.250" y="2.600" width="1.500" height="1.500"/><rect x="10.500" y="2.600" width="1.500" height="1.500"/><rect x="4" y="5.800" width="1.500" height="1.500"/><rect x="7.250" y="5.800" width="1.500" height="1.500"/><rect x="10.500" y="5.800" width="1.500" height="1.500"/><rect x="4" y="9" width="1.500" height="1.500"/><rect x="10.500" y="9" width="1.500" height="1.500"/><rect x="6.700" y="12.300" width="2.600" height="2.600"/></g></svg></span><span class="abs bt" style="left:33.200000000000045px;top:313.84px">kochab<span style="margin:0 9px">-</span>izar</span><span class="abs" style="left:156.40000000000015px;top:315.14px"><svg class="i" width="12.5" height="12.5" viewBox="0 0 16 16" fill="currentColor" style="color:#2c64ae;"><path d="M11.300 9.200v3.300a1.400 1.400 0 0 1-1.400 1.400H3.500a1.400 1.400 0 0 1-1.400-1.400V6.100a1.400 1.400 0 0 1 1.400-1.400H7.500" fill="none" stroke="currentColor" stroke-width="1.500"/><path d="M9.600 1.400h5v5zM13.800 2.200L7.400 8.600" stroke="currentColor" stroke-width="1.700" fill="currentColor"/></svg></span><span class="abs bar" style="left:187.79999999999995px;width:393.6px;top:313.84px;background:linear-gradient(to right,#2ba24f 0%,#2ba24f 100%)"></span><span class="abs" style="left:14.900000000000091px;top:352.56px"><svg class="i" width="12" height="12" viewBox="0 0 16 16" fill="currentColor" style="color:#222;"><path d="M2 .3h12a.6.6 0 0 1 .6.6v14.200a.6.6 0 0 1-.6.600H2a.6.6 0 0 1-.6-.6V.9A.6.6 0 0 1 2 .3z"/><g fill="#fff" opacity=".75"><rect x="4" y="2.600" width="1.500" height="1.500"/><rect x="7.250" y="2.600" width="1.500" height="1.500"/><rect x="10.500" y="2.600" width="1.500" height="1.500"/><rect x="4" y="5.800" width="1.500" height="1.500"/><rect x="7.250" y="5.800" width="1.500" height="1.500"/><rect x="10.500" y="5.800" width="1.500" height="1.500"/><rect x="4" y="9" width="1.500" height="1.500"/><rect x="10.500" y="9" width="1.500" height="1.500"/><rect x="6.700" y="12.300" width="2.600" height="2.600"/></g></svg></span><span class="abs bt" style="left:33.200000000000045px;top:350.56px">mirfak<span style="margin:0 9px">-</span>mirfak</span><span class="abs" style="left:156.40000000000015px;top:351.86px"><svg class="i" width="12.5" height="12.5" viewBox="0 0 16 16" fill="currentColor" style="color:#2c64ae;"><path d="M11.300 9.200v3.300a1.400 1.400 0 0 1-1.400 1.400H3.500a1.400 1.400 0 0 1-1.400-1.400V6.100a1.400 1.400 0 0 1 1.400-1.400H7.500" fill="none" stroke="currentColor" stroke-width="1.500"/><path d="M9.600 1.400h5v5zM13.800 2.200L7.400 8.600" stroke="currentColor" stroke-width="1.700" fill="currentColor"/></svg></span><span class="abs bar" style="left:187.79999999999995px;width:393.6px;top:350.56px;background:linear-gradient(to right,#1fa152 0%,#1fa152 100%)"></span><span class="abs" style="left:14.900000000000091px;top:389.28000000000003px"><svg class="i" width="12" height="12" viewBox="0 0 16 16" fill="currentColor" style="color:#222;"><path d="M2 .3h12a.6.6 0 0 1 .6.6v14.200a.6.6 0 0 1-.6.600H2a.6.6 0 0 1-.6-.6V.9A.6.6 0 0 1 2 .3z"/><g fill="#fff" opacity=".75"><rect x="4" y="2.600" width="1.500" height="1.500"/><rect x="7.250" y="2.600" width="1.500" height="1.500"/><rect x="10.500" y="2.600" width="1.500" height="1.500"/><rect x="4" y="5.800" width="1.500" height="1.500"/><rect x="7.250" y="5.800" width="1.500" height="1.500"/><rect x="10.500" y="5.800" width="1.500" height="1.500"/><rect x="4" y="9" width="1.500" height="1.500"/><rect x="10.500" y="9" width="1.500" height="1.500"/><rect x="6.700" y="12.300" width="2.600" height="2.600"/></g></svg></span><span class="abs bt" style="left:33.200000000000045px;top:387.28000000000003px">sadr<span style="margin:0 9px">-</span>sadr</span><span class="abs" style="left:156.40000000000015px;top:388.58000000000004px"><svg class="i" width="12.5" height="12.5" viewBox="0 0 16 16" fill="currentColor" style="color:#2c64ae;"><path d="M11.300 9.200v3.300a1.400 1.400 0 0 1-1.400 1.400H3.500a1.400 1.400 0 0 1-1.400-1.400V6.100a1.400 1.400 0 0 1 1.400-1.400H7.500" fill="none" stroke="currentColor" stroke-width="1.500"/><path d="M9.600 1.400h5v5zM13.800 2.200L7.400 8.600" stroke="currentColor" stroke-width="1.700" fill="currentColor"/></svg></span><span class="abs bar" style="left:187.79999999999995px;width:393.6px;top:387.28000000000003px;background:linear-gradient(to right,#14a055 0%,#14a055 100%)"></span></div><div class="card" style="left:1471.8px;top:337.4px;width:597.8px;height:424.6px"><span class="abs ct-i" style="left:7.2px;top:9.95px"><svg class="i" width="16.5" height="16.5" viewBox="0 0 16 16" fill="currentColor" style="color:#2c64ae;"><path d="M2.800 .4h10.400a.9.9 0 0 1 .9.9v13.400a.9.9 0 0 1-.9.900H2.800a.9.9 0 0 1-.9-.9V1.300a.9.9 0 0 1 .9-.9z"/><g fill="#fff" opacity=".4"><rect x="4.300" y="2.800" width="1.400" height="1.400"/><rect x="7.300" y="2.800" width="1.400" height="1.400"/><rect x="10.300" y="2.800" width="1.400" height="1.400"/><rect x="4.300" y="6" width="1.400" height="1.400"/><rect x="7.300" y="6" width="1.400" height="1.400"/><rect x="10.300" y="6" width="1.400" height="1.400"/></g><rect x="6.800" y="12.600" width="2.400" height="2.400" fill="#fff" opacity=".9"/></svg></span><span class="abs ct" style="left:31.5px;top:7.7px;letter-spacing:0.029px">Nodes With the Highest Memory Usage</span><span class="abs" style="left:15.700000000000045px;top:58.8px"><svg class="i" width="12" height="12" viewBox="0 0 16 16" fill="currentColor" style="color:#777;"><path d="M2.300 1.100h11.400v13.800H2.300z" fill="none" stroke="currentColor" stroke-width="1.600"/><path d="M5 4h1.600M7.200 4h1.600M9.400 4H11M5 6.800h1.600M7.200 6.800h1.600M9.400 6.800H11M5 9.600h1.600M9.400 9.600H11M6.800 15v-2.800h2.400V15" stroke="currentColor" stroke-width="1.300" fill="none"/></svg></span><span class="abs bt" style="left:34.0px;top:56.8px">mintaka<span style="margin:0 9px">-</span>zaniah</span><span class="abs" style="left:187.2000000000001px;top:58.099999999999994px"><svg class="i" width="12.5" height="12.5" viewBox="0 0 16 16" fill="currentColor" style="color:#2c64ae;"><path d="M11.300 9.200v3.300a1.400 1.400 0 0 1-1.400 1.400H3.500a1.400 1.400 0 0 1-1.400-1.400V6.100a1.400 1.400 0 0 1 1.400-1.400H7.500" fill="none" stroke="currentColor" stroke-width="1.500"/><path d="M9.600 1.400h5v5zM13.800 2.200L7.400 8.600" stroke="currentColor" stroke-width="1.700" fill="currentColor"/></svg></span><span class="abs bar" style="left:219.79999999999995px;width:363.0px;top:56.8px;background:linear-gradient(to right,#a39a20 0%,#a99818 48%,#94982a 50%,#96982a 100%)"></span><span class="abs" style="left:15.700000000000045px;top:95.52px"><svg class="i" width="12" height="12" viewBox="0 0 16 16" fill="currentColor" style="color:#222;"><path d="M2 .3h12a.6.6 0 0 1 .6.6v14.200a.6.6 0 0 1-.6.600H2a.6.6 0 0 1-.6-.6V.9A.6.6 0 0 1 2 .3z"/><g fill="#fff" opacity=".75"><rect x="4" y="2.600" width="1.500" height="1.500"/><rect x="7.250" y="2.600" width="1.500" height="1.500"/><rect x="10.500" y="2.600" width="1.500" height="1.500"/><rect x="4" y="5.800" width="1.500" height="1.500"/><rect x="7.250" y="5.800" width="1.500" height="1.500"/><rect x="10.500" y="5.800" width="1.500" height="1.500"/><rect x="4" y="9" width="1.500" height="1.500"/><rect x="10.500" y="9" width="1.500" height="1.500"/><rect x="6.700" y="12.300" width="2.600" height="2.600"/></g></svg></span><span class="abs bt" style="left:34.0px;top:93.52px">canopus<span style="margin:0 9px">-</span>canopus</span><span class="abs" style="left:187.2000000000001px;top:94.82px"><svg class="i" width="12.5" height="12.5" viewBox="0 0 16 16" fill="currentColor" style="color:#2c64ae;"><path d="M11.300 9.200v3.300a1.400 1.400 0 0 1-1.400 1.400H3.500a1.400 1.400 0 0 1-1.400-1.400V6.100a1.400 1.400 0 0 1 1.400-1.400H7.500" fill="none" stroke="currentColor" stroke-width="1.500"/><path d="M9.600 1.400h5v5zM13.800 2.200L7.400 8.600" stroke="currentColor" stroke-width="1.700" fill="currentColor"/></svg></span><span class="abs bar" style="left:219.79999999999995px;width:363.0px;top:93.52px;background:linear-gradient(to right,#a69a1e 0%,#a8981a 46%,#95992a 52%,#95992a 100%)"></span><span class="abs" style="left:15.700000000000045px;top:132.24px"><svg class="i" width="12" height="12" viewBox="0 0 16 16" fill="currentColor" style="color:#222;"><path d="M2 .3h12a.6.6 0 0 1 .6.6v14.200a.6.6 0 0 1-.6.600H2a.6.6 0 0 1-.6-.6V.9A.6.6 0 0 1 2 .3z"/><g fill="#fff" opacity=".75"><rect x="4" y="2.600" width="1.500" height="1.500"/><rect x="7.250" y="2.600" width="1.500" height="1.500"/><rect x="10.500" y="2.600" width="1.500" height="1.500"/><rect x="4" y="5.800" width="1.500" height="1.500"/><rect x="7.250" y="5.800" width="1.500" height="1.500"/><rect x="10.500" y="5.800" width="1.500" height="1.500"/><rect x="4" y="9" width="1.500" height="1.500"/><rect x="10.500" y="9" width="1.500" height="1.500"/><rect x="6.700" y="12.300" width="2.600" height="2.600"/></g></svg></span><span class="abs bt" style="left:34.0px;top:130.24px">procyon<span style="margin:0 9px">-</span>procyon</span><span class="abs" style="left:187.2000000000001px;top:131.54000000000002px"><svg class="i" width="12.5" height="12.5" viewBox="0 0 16 16" fill="currentColor" style="color:#2c64ae;"><path d="M11.300 9.200v3.300a1.400 1.400 0 0 1-1.400 1.400H3.500a1.400 1.400 0 0 1-1.400-1.400V6.100a1.400 1.400 0 0 1 1.400-1.400H7.500" fill="none" stroke="currentColor" stroke-width="1.500"/><path d="M9.600 1.400h5v5zM13.800 2.200L7.400 8.600" stroke="currentColor" stroke-width="1.700" fill="currentColor"/></svg></span><span class="abs bar" style="left:219.79999999999995px;width:363.0px;top:130.24px;background:linear-gradient(to right,#7f9a34 0%,#849a32 48%,#a39724 50%,#9f9726 56%,#8c9a2e 60%,#b3961a 64%,#b3961a 100%)"></span><span class="abs" style="left:15.700000000000045px;top:168.95999999999998px"><svg class="i" width="12" height="12" viewBox="0 0 16 16" fill="currentColor" style="color:#777;"><path d="M2.300 1.100h11.400v13.800H2.300z" fill="none" stroke="currentColor" stroke-width="1.600"/><path d="M5 4h1.600M7.200 4h1.600M9.400 4H11M5 6.800h1.600M7.200 6.800h1.600M9.400 6.800H11M5 9.600h1.600M9.400 9.600H11M6.800 15v-2.800h2.400V15" stroke="currentColor" stroke-width="1.300" fill="none"/></svg></span><span class="abs bt" style="left:34.0px;top:166.95999999999998px">mirfak<span style="margin:0 9px">-</span>zaniah</span><span class="abs" style="left:187.2000000000001px;top:168.26px"><svg class="i" width="12.5" height="12.5" viewBox="0 0 16 16" fill="currentColor" style="color:#2c64ae;"><path d="M11.300 9.200v3.300a1.400 1.400 0 0 1-1.400 1.400H3.500a1.400 1.400 0 0 1-1.400-1.400V6.100a1.400 1.400 0 0 1 1.400-1.400H7.500" fill="none" stroke="currentColor" stroke-width="1.500"/><path d="M9.600 1.400h5v5zM13.800 2.200L7.400 8.600" stroke="currentColor" stroke-width="1.700" fill="currentColor"/></svg></span><span class="abs bar" style="left:219.79999999999995px;width:363.0px;top:166.95999999999998px;background:linear-gradient(to right,#999a28 0%,#8b9b2f 35%,#a19826 50%,#a49725 85%,#9a9928 100%)"></span><span class="abs" style="left:15.700000000000045px;top:205.68px"><svg class="i" width="12" height="12" viewBox="0 0 16 16" fill="currentColor" style="color:#222;"><path d="M2 .3h12a.6.6 0 0 1 .6.6v14.200a.6.6 0 0 1-.6.600H2a.6.6 0 0 1-.6-.6V.9A.6.6 0 0 1 2 .3z"/><g fill="#fff" opacity=".75"><rect x="4" y="2.600" width="1.500" height="1.500"/><rect x="7.250" y="2.600" width="1.500" height="1.500"/><rect x="10.500" y="2.600" width="1.500" height="1.500"/><rect x="4" y="5.800" width="1.500" height="1.500"/><rect x="7.250" y="5.800" width="1.500" height="1.500"/><rect x="10.500" y="5.800" width="1.500" height="1.500"/><rect x="4" y="9" width="1.500" height="1.500"/><rect x="10.500" y="9" width="1.500" height="1.500"/><rect x="6.700" y="12.300" width="2.600" height="2.600"/></g></svg></span><span class="abs bt" style="left:34.0px;top:203.68px">sabik<span style="margin:0 9px">-</span>sabik</span><span class="abs" style="left:187.2000000000001px;top:204.98000000000002px"><svg class="i" width="12.5" height="12.5" viewBox="0 0 16 16" fill="currentColor" style="color:#2c64ae;"><path d="M11.300 9.200v3.300a1.400 1.400 0 0 1-1.400 1.400H3.500a1.400 1.400 0 0 1-1.400-1.400V6.100a1.400 1.400 0 0 1 1.400-1.400H7.500" fill="none" stroke="currentColor" stroke-width="1.500"/><path d="M9.600 1.400h5v5zM13.800 2.200L7.400 8.600" stroke="currentColor" stroke-width="1.700" fill="currentColor"/></svg></span><span class="abs bar" style="left:219.79999999999995px;width:363.0px;top:203.68px;background:linear-gradient(to right,#9a9928 0%,#8c9b2e 30%,#9d9927 50%,#a09826 85%,#999928 100%)"></span><span class="abs" style="left:15.700000000000045px;top:242.39999999999998px"><svg class="i" width="12" height="12" viewBox="0 0 16 16" fill="currentColor" style="color:#222;"><path d="M2 .3h12a.6.6 0 0 1 .6.6v14.200a.6.6 0 0 1-.6.600H2a.6.6 0 0 1-.6-.6V.9A.6.6 0 0 1 2 .3z"/><g fill="#fff" opacity=".75"><rect x="4" y="2.600" width="1.500" height="1.500"/><rect x="7.250" y="2.600" width="1.500" height="1.500"/><rect x="10.500" y="2.600" width="1.500" height="1.500"/><rect x="4" y="5.800" width="1.500" height="1.500"/><rect x="7.250" y="5.800" width="1.500" height="1.500"/><rect x="10.500" y="5.800" width="1.500" height="1.500"/><rect x="4" y="9" width="1.500" height="1.500"/><rect x="10.500" y="9" width="1.500" height="1.500"/><rect x="6.700" y="12.300" width="2.600" height="2.600"/></g></svg></span><span class="abs bt" style="left:34.0px;top:240.39999999999998px">kochab<span style="margin:0 9px">-</span>mirfak</span><span class="abs" style="left:187.2000000000001px;top:241.7px"><svg class="i" width="12.5" height="12.5" viewBox="0 0 16 16" fill="currentColor" style="color:#2c64ae;"><path d="M11.300 9.200v3.300a1.400 1.400 0 0 1-1.400 1.400H3.500a1.400 1.400 0 0 1-1.400-1.400V6.100a1.400 1.400 0 0 1 1.400-1.400H7.500" fill="none" stroke="currentColor" stroke-width="1.500"/><path d="M9.600 1.400h5v5zM13.800 2.200L7.400 8.600" stroke="currentColor" stroke-width="1.700" fill="currentColor"/></svg></span><span class="abs bar" style="left:219.79999999999995px;width:363.0px;top:240.39999999999998px;background:linear-gradient(to right,#9b9a27 0%,#98992a 100%)"></span><span class="abs" style="left:15.700000000000045px;top:279.12px"><svg class="i" width="12" height="12" viewBox="0 0 16 16" fill="currentColor" style="color:#222;"><path d="M2 .3h12a.6.6 0 0 1 .6.6v14.200a.6.6 0 0 1-.6.600H2a.6.6 0 0 1-.6-.6V.9A.6.6 0 0 1 2 .3z"/><g fill="#fff" opacity=".75"><rect x="4" y="2.600" width="1.500" height="1.500"/><rect x="7.250" y="2.600" width="1.500" height="1.500"/><rect x="10.500" y="2.600" width="1.500" height="1.500"/><rect x="4" y="5.800" width="1.500" height="1.500"/><rect x="7.250" y="5.800" width="1.500" height="1.500"/><rect x="10.500" y="5.800" width="1.500" height="1.500"/><rect x="4" y="9" width="1.500" height="1.500"/><rect x="10.500" y="9" width="1.500" height="1.500"/><rect x="6.700" y="12.300" width="2.600" height="2.600"/></g></svg></span><span class="abs bt" style="left:34.0px;top:277.12px">kochab<span style="margin:0 9px">-</span>nunki</span><span class="abs" style="left:187.2000000000001px;top:278.42px"><svg class="i" width="12.5" height="12.5" viewBox="0 0 16 16" fill="currentColor" style="color:#2c64ae;"><path d="M11.300 9.200v3.300a1.400 1.400 0 0 1-1.400 1.400H3.500a1.400 1.400 0 0 1-1.400-1.400V6.100a1.400 1.400 0 0 1 1.400-1.400H7.500" fill="none" stroke="currentColor" stroke-width="1.500"/><path d="M9.600 1.400h5v5zM13.800 2.200L7.400 8.600" stroke="currentColor" stroke-width="1.700" fill="currentColor"/></svg></span><span class="abs bar" style="left:219.79999999999995px;width:363.0px;top:277.12px;background:linear-gradient(to right,#999a28 0%,#93992b 100%)"></span><span class="abs" style="left:15.700000000000045px;top:315.84px"><svg class="i" width="12" height="12" viewBox="0 0 16 16" fill="currentColor" style="color:#222;"><path d="M2 .3h12a.6.6 0 0 1 .6.6v14.200a.6.6 0 0 1-.6.600H2a.6.6 0 0 1-.6-.6V.9A.6.6 0 0 1 2 .3z"/><g fill="#fff" opacity=".75"><rect x="4" y="2.600" width="1.500" height="1.500"/><rect x="7.250" y="2.600" width="1.500" height="1.500"/><rect x="10.500" y="2.600" width="1.500" height="1.500"/><rect x="4" y="5.800" width="1.500" height="1.500"/><rect x="7.250" y="5.800" width="1.500" height="1.500"/><rect x="10.500" y="5.800" width="1.500" height="1.500"/><rect x="4" y="9" width="1.500" height="1.500"/><rect x="10.500" y="9" width="1.500" height="1.500"/><rect x="6.700" y="12.300" width="2.600" height="2.600"/></g></svg></span><span class="abs bt" style="left:34.0px;top:313.84px">betelgeuse<span style="margin:0 9px">-</span>betelgeuse</span><span class="abs" style="left:187.2000000000001px;top:315.14px"><svg class="i" width="12.5" height="12.5" viewBox="0 0 16 16" fill="currentColor" style="color:#2c64ae;"><path d="M11.300 9.200v3.300a1.400 1.400 0 0 1-1.400 1.400H3.500a1.400 1.400 0 0 1-1.400-1.400V6.100a1.400 1.400 0 0 1 1.400-1.400H7.500" fill="none" stroke="currentColor" stroke-width="1.500"/><path d="M9.600 1.400h5v5zM13.800 2.200L7.400 8.600" stroke="currentColor" stroke-width="1.700" fill="currentColor"/></svg></span><span class="abs bar" style="left:219.79999999999995px;width:363.0px;top:313.84px;background:linear-gradient(to right,#839b34 0%,#7c9d38 50%,#839b34 100%)"></span><span class="abs" style="left:15.700000000000045px;top:352.56px"><svg class="i" width="12" height="12" viewBox="0 0 16 16" fill="currentColor" style="color:#222;"><path d="M2 .3h12a.6.6 0 0 1 .6.6v14.200a.6.6 0 0 1-.6.600H2a.6.6 0 0 1-.6-.6V.9A.6.6 0 0 1 2 .3z"/><g fill="#fff" opacity=".75"><rect x="4" y="2.600" width="1.500" height="1.500"/><rect x="7.250" y="2.600" width="1.500" height="1.500"/><rect x="10.500" y="2.600" width="1.500" height="1.500"/><rect x="4" y="5.800" width="1.500" height="1.500"/><rect x="7.250" y="5.800" width="1.500" height="1.500"/><rect x="10.500" y="5.800" width="1.500" height="1.500"/><rect x="4" y="9" width="1.500" height="1.500"/><rect x="10.500" y="9" width="1.500" height="1.500"/><rect x="6.700" y="12.300" width="2.600" height="2.600"/></g></svg></span><span class="abs bt" style="left:34.0px;top:350.56px">mirfak<span style="margin:0 9px">-</span>mirfak</span><span class="abs" style="left:187.2000000000001px;top:351.86px"><svg class="i" width="12.5" height="12.5" viewBox="0 0 16 16" fill="currentColor" style="color:#2c64ae;"><path d="M11.300 9.200v3.300a1.400 1.400 0 0 1-1.400 1.400H3.500a1.400 1.400 0 0 1-1.400-1.400V6.100a1.400 1.400 0 0 1 1.400-1.400H7.500" fill="none" stroke="currentColor" stroke-width="1.500"/><path d="M9.600 1.400h5v5zM13.800 2.200L7.400 8.600" stroke="currentColor" stroke-width="1.700" fill="currentColor"/></svg></span><span class="abs bar" style="left:219.79999999999995px;width:363.0px;top:350.56px;background:linear-gradient(to right,#879a32 0%,#819b35 100%)"></span><span class="abs" style="left:15.700000000000045px;top:389.28000000000003px"><svg class="i" width="12" height="12" viewBox="0 0 16 16" fill="currentColor" style="color:#222;"><path d="M2 .3h12a.6.6 0 0 1 .6.6v14.200a.6.6 0 0 1-.6.600H2a.6.6 0 0 1-.6-.6V.9A.6.6 0 0 1 2 .3z"/><g fill="#fff" opacity=".75"><rect x="4" y="2.600" width="1.500" height="1.500"/><rect x="7.250" y="2.600" width="1.500" height="1.500"/><rect x="10.500" y="2.600" width="1.500" height="1.500"/><rect x="4" y="5.800" width="1.500" height="1.500"/><rect x="7.250" y="5.800" width="1.500" height="1.500"/><rect x="10.500" y="5.800" width="1.500" height="1.500"/><rect x="4" y="9" width="1.500" height="1.500"/><rect x="10.500" y="9" width="1.500" height="1.500"/><rect x="6.700" y="12.300" width="2.600" height="2.600"/></g></svg></span><span class="abs bt" style="left:34.0px;top:387.28000000000003px">kochab<span style="margin:0 9px">-</span>izar</span><span class="abs" style="left:187.2000000000001px;top:388.58000000000004px"><svg class="i" width="12.5" height="12.5" viewBox="0 0 16 16" fill="currentColor" style="color:#2c64ae;"><path d="M11.300 9.200v3.300a1.400 1.400 0 0 1-1.400 1.400H3.500a1.400 1.400 0 0 1-1.400-1.400V6.100a1.400 1.400 0 0 1 1.400-1.400H7.500" fill="none" stroke="currentColor" stroke-width="1.500"/><path d="M9.600 1.400h5v5zM13.800 2.200L7.400 8.600" stroke="currentColor" stroke-width="1.700" fill="currentColor"/></svg></span><span class="abs bar" style="left:219.79999999999995px;width:363.0px;top:387.28000000000003px;background:linear-gradient(to right,#769c39 0%,#6c9d3d 50%,#729c3a 100%)"></span></div><div class="card" style="left:242.0px;top:777.8px;width:752.6px;height:248.2px"><span class="abs ct-i" style="left:8px;top:10.600000000000001px"><svg class="i" width="16" height="16" viewBox="0 0 16 16" fill="currentColor" style="color:#2c64ae;"><rect x="1" y="2" width="2.800" height="2.600"/><rect x="5" y="2" width="10" height="2.600"/><rect x="1" y="5.300" width="2.800" height="2.600"/><rect x="5" y="5.300" width="10" height="2.600"/><rect x="1" y="8.600" width="2.800" height="2.600"/><rect x="5" y="8.600" width="10" height="2.600"/><rect x="1" y="11.900" width="2.800" height="2.600"/><rect x="5" y="11.900" width="10" height="2.600"/></svg></span><span class="abs ct" style="left:32px;top:8.1px;letter-spacing:0.012px">Task Summary by Category (Last 48h)</span><span class="abs bt" style="left:16px;top:52.80000000000007px">Guest Migrations</span><span class="abs" style="left:513.0px;top:54.600000000000065px"><svg class="i" width="12.5" height="12.5" viewBox="0 0 16 16" fill="currentColor" style="color:#777;"><circle cx="8" cy="8" r="5" fill="none" stroke="currentColor" stroke-width="2.600"/></svg></span><span class="abs bt" style="left:535.4px;top:52.80000000000007px">0</span><span class="abs" style="left:595.0px;top:54.30000000000007px"><svg class="i" width="12.5" height="12.5" viewBox="0 0 16 16" fill="currentColor" style="color:#777;"><path d="M8 1L15.500 14.500H.5z"/><path d="M8 5.500v4.500" stroke="#fff" stroke-width="1.800"/><circle cx="8" cy="12" r="1" fill="#fff"/></svg></span><span class="abs bt" style="left:617.4px;top:52.80000000000007px">0</span><span class="abs" style="left:676.1999999999999px;top:54.600000000000065px"><svg class="i" width="12.5" height="12.5" viewBox="0 0 16 16" fill="currentColor" style="color:#777;"><path d="M1 8.6 L3.4 6.2 L6.3 9.1 L12.6 2.8 L15 5.2 L6.3 13.9 Z"/></svg></span><span class="abs bt" style="left:698.8px;top:52.80000000000007px">0</span><span class="abs bt" style="left:16px;top:85.40000000000006px">Virtual Machine related Tasks</span><span class="abs" style="left:513.0px;top:87.20000000000006px"><svg class="i" width="12.5" height="12.5" viewBox="0 0 16 16" fill="currentColor" style="color:#777;"><circle cx="8" cy="8" r="5" fill="none" stroke="currentColor" stroke-width="2.600"/></svg></span><span class="abs bt" style="left:535.4px;top:85.40000000000006px">0</span><span class="abs" style="left:595.0px;top:86.90000000000006px"><svg class="i" width="12.5" height="12.5" viewBox="0 0 16 16" fill="currentColor" style="color:#777;"><path d="M8 1L15.500 14.500H.5z"/><path d="M8 5.500v4.500" stroke="#fff" stroke-width="1.800"/><circle cx="8" cy="12" r="1" fill="#fff"/></svg></span><span class="abs bt" style="left:617.4px;top:85.40000000000006px">0</span><span class="abs" style="left:676.1999999999999px;top:87.20000000000006px"><svg class="i" width="12.5" height="12.5" viewBox="0 0 16 16" fill="currentColor" style="color:#1a9f53;"><path d="M1 8.6 L3.4 6.2 L6.3 9.1 L12.6 2.8 L15 5.2 L6.3 13.9 Z"/></svg></span><span class="abs bt" style="left:698.8px;top:85.40000000000006px">1</span><span class="abs bt" style="left:16px;top:118.00000000000007px">Container related Tasks</span><span class="abs" style="left:513.0px;top:119.80000000000007px"><svg class="i" width="12.5" height="12.5" viewBox="0 0 16 16" fill="currentColor" style="color:#777;"><circle cx="8" cy="8" r="5" fill="none" stroke="currentColor" stroke-width="2.600"/></svg></span><span class="abs bt" style="left:535.4px;top:118.00000000000007px">0</span><span class="abs" style="left:595.0px;top:119.50000000000007px"><svg class="i" width="12.5" height="12.5" viewBox="0 0 16 16" fill="currentColor" style="color:#777;"><path d="M8 1L15.500 14.500H.5z"/><path d="M8 5.500v4.500" stroke="#fff" stroke-width="1.800"/><circle cx="8" cy="12" r="1" fill="#fff"/></svg></span><span class="abs bt" style="left:617.4px;top:118.00000000000007px">0</span><span class="abs" style="left:676.1999999999999px;top:119.80000000000007px"><svg class="i" width="12.5" height="12.5" viewBox="0 0 16 16" fill="currentColor" style="color:#777;"><path d="M1 8.6 L3.4 6.2 L6.3 9.1 L12.6 2.8 L15 5.2 L6.3 13.9 Z"/></svg></span><span class="abs bt" style="left:698.8px;top:118.00000000000007px">0</span><span class="abs bt" style="left:16px;top:150.60000000000008px">Ceph related Tasks</span><span class="abs" style="left:513.0px;top:152.4000000000001px"><svg class="i" width="12.5" height="12.5" viewBox="0 0 16 16" fill="currentColor" style="color:#777;"><circle cx="8" cy="8" r="5" fill="none" stroke="currentColor" stroke-width="2.600"/></svg></span><span class="abs bt" style="left:535.4px;top:150.60000000000008px">0</span><span class="abs" style="left:595.0px;top:152.10000000000008px"><svg class="i" width="12.5" height="12.5" viewBox="0 0 16 16" fill="currentColor" style="color:#777;"><path d="M8 1L15.500 14.500H.5z"/><path d="M8 5.500v4.500" stroke="#fff" stroke-width="1.800"/><circle cx="8" cy="12" r="1" fill="#fff"/></svg></span><span class="abs bt" style="left:617.4px;top:150.60000000000008px">0</span><span class="abs" style="left:676.1999999999999px;top:152.4000000000001px"><svg class="i" width="12.5" height="12.5" viewBox="0 0 16 16" fill="currentColor" style="color:#777;"><path d="M1 8.6 L3.4 6.2 L6.3 9.1 L12.6 2.8 L15 5.2 L6.3 13.9 Z"/></svg></span><span class="abs bt" style="left:698.8px;top:150.60000000000008px">0</span><span class="abs bt" style="left:16px;top:183.20000000000007px">HA related Tasks</span><span class="abs" style="left:513.0px;top:185.00000000000009px"><svg class="i" width="12.5" height="12.5" viewBox="0 0 16 16" fill="currentColor" style="color:#777;"><circle cx="8" cy="8" r="5" fill="none" stroke="currentColor" stroke-width="2.600"/></svg></span><span class="abs bt" style="left:535.4px;top:183.20000000000007px">0</span><span class="abs" style="left:595.0px;top:184.70000000000007px"><svg class="i" width="12.5" height="12.5" viewBox="0 0 16 16" fill="currentColor" style="color:#777;"><path d="M8 1L15.500 14.500H.5z"/><path d="M8 5.500v4.500" stroke="#fff" stroke-width="1.800"/><circle cx="8" cy="12" r="1" fill="#fff"/></svg></span><span class="abs bt" style="left:617.4px;top:183.20000000000007px">0</span><span class="abs" style="left:676.1999999999999px;top:185.00000000000009px"><svg class="i" width="12.5" height="12.5" viewBox="0 0 16 16" fill="currentColor" style="color:#777;"><path d="M1 8.6 L3.4 6.2 L6.3 9.1 L12.6 2.8 L15 5.2 L6.3 13.9 Z"/></svg></span><span class="abs bt" style="left:698.8px;top:183.20000000000007px">0</span><span class="abs bt" style="left:16px;top:215.80000000000007px">Backups and Backup Jobs</span><span class="abs" style="left:513.0px;top:217.60000000000008px"><svg class="i" width="12.5" height="12.5" viewBox="0 0 16 16" fill="currentColor" style="color:#777;"><circle cx="8" cy="8" r="5" fill="none" stroke="currentColor" stroke-width="2.600"/></svg></span><span class="abs bt" style="left:535.4px;top:215.80000000000007px">0</span><span class="abs" style="left:595.0px;top:217.30000000000007px"><svg class="i" width="12.5" height="12.5" viewBox="0 0 16 16" fill="currentColor" style="color:#777;"><path d="M8 1L15.500 14.500H.5z"/><path d="M8 5.500v4.500" stroke="#fff" stroke-width="1.800"/><circle cx="8" cy="12" r="1" fill="#fff"/></svg></span><span class="abs bt" style="left:617.4px;top:215.80000000000007px">0</span><span class="abs" style="left:676.1999999999999px;top:217.60000000000008px"><svg class="i" width="12.5" height="12.5" viewBox="0 0 16 16" fill="currentColor" style="color:#1a9f53;"><path d="M1 8.6 L3.4 6.2 L6.3 9.1 L12.6 2.8 L15 5.2 L6.3 13.9 Z"/></svg></span><span class="abs bt" style="left:698.8px;top:215.80000000000007px">191</span></div><div class="card" style="left:1010.0px;top:777.8px;width:753.6px;height:248.2px"><span class="abs ct-i" style="left:8px;top:10.600000000000001px"><svg class="i" width="16" height="16" viewBox="0 0 16 16" fill="currentColor" style="color:#2c64ae;"><rect x="1" y="2" width="2.800" height="2.600"/><rect x="5" y="2" width="10" height="2.600"/><rect x="1" y="5.300" width="2.800" height="2.600"/><rect x="5" y="5.300" width="10" height="2.600"/><rect x="1" y="8.600" width="2.800" height="2.600"/><rect x="5" y="8.600" width="10" height="2.600"/><rect x="1" y="11.900" width="2.800" height="2.600"/><rect x="5" y="11.900" width="10" height="2.600"/></svg></span><span class="abs ct" style="left:32px;top:8.1px;letter-spacing:-0.026px">Task Summary Sorted by Failed Tasks (Last 48h)</span><span class="abs bt" style="left:16px;top:52.80000000000007px">mintaka</span><span class="abs" style="left:514.5999999999999px;top:54.600000000000065px"><svg class="i" width="12.5" height="12.5" viewBox="0 0 16 16" fill="currentColor" style="color:#c4203c;"><circle cx="8" cy="8" r="7"/><path d="M5.300 5.300l5.400 5.400M10.700 5.300l-5.400 5.400" stroke="#fff" stroke-width="2.300"/></svg></span><span class="abs bt" style="left:537.0px;top:52.80000000000007px">2</span><span class="abs" style="left:596.3999999999999px;top:54.30000000000007px"><svg class="i" width="12.5" height="12.5" viewBox="0 0 16 16" fill="currentColor" style="color:#777;"><path d="M8 1L15.500 14.500H.5z"/><path d="M8 5.500v4.500" stroke="#fff" stroke-width="1.800"/><circle cx="8" cy="12" r="1" fill="#fff"/></svg></span><span class="abs bt" style="left:618.8px;top:52.80000000000007px">0</span><span class="abs" style="left:677.8px;top:54.600000000000065px"><svg class="i" width="12.5" height="12.5" viewBox="0 0 16 16" fill="currentColor" style="color:#1a9f53;"><path d="M1 8.6 L3.4 6.2 L6.3 9.1 L12.6 2.8 L15 5.2 L6.3 13.9 Z"/></svg></span><span class="abs bt" style="left:700.4000000000001px;top:52.80000000000007px">7997</span><span class="abs bt" style="left:16px;top:85.40000000000006px">mirfak</span><span class="abs" style="left:514.5999999999999px;top:87.20000000000006px"><svg class="i" width="12.5" height="12.5" viewBox="0 0 16 16" fill="currentColor" style="color:#c4203c;"><circle cx="8" cy="8" r="7"/><path d="M5.300 5.300l5.400 5.400M10.700 5.300l-5.400 5.400" stroke="#fff" stroke-width="2.300"/></svg></span><span class="abs bt" style="left:537.0px;top:85.40000000000006px">2</span><span class="abs" style="left:596.3999999999999px;top:86.90000000000006px"><svg class="i" width="12.5" height="12.5" viewBox="0 0 16 16" fill="currentColor" style="color:#777;"><path d="M8 1L15.500 14.500H.5z"/><path d="M8 5.500v4.500" stroke="#fff" stroke-width="1.800"/><circle cx="8" cy="12" r="1" fill="#fff"/></svg></span><span class="abs bt" style="left:618.8px;top:85.40000000000006px">0</span><span class="abs" style="left:677.8px;top:87.20000000000006px"><svg class="i" width="12.5" height="12.5" viewBox="0 0 16 16" fill="currentColor" style="color:#1a9f53;"><path d="M1 8.6 L3.4 6.2 L6.3 9.1 L12.6 2.8 L15 5.2 L6.3 13.9 Z"/></svg></span><span class="abs bt" style="left:700.4000000000001px;top:85.40000000000006px">84</span><span class="abs bt" style="left:16px;top:118.00000000000007px">sadr</span><span class="abs" style="left:514.5999999999999px;top:119.80000000000007px"><svg class="i" width="12.5" height="12.5" viewBox="0 0 16 16" fill="currentColor" style="color:#777;"><circle cx="8" cy="8" r="5" fill="none" stroke="currentColor" stroke-width="2.600"/></svg></span><span class="abs bt" style="left:537.0px;top:118.00000000000007px">0</span><span class="abs" style="left:596.3999999999999px;top:119.50000000000007px"><svg class="i" width="12.5" height="12.5" viewBox="0 0 16 16" fill="currentColor" style="color:#777;"><path d="M8 1L15.500 14.500H.5z"/><path d="M8 5.500v4.500" stroke="#fff" stroke-width="1.800"/><circle cx="8" cy="12" r="1" fill="#fff"/></svg></span><span class="abs bt" style="left:618.8px;top:118.00000000000007px">0</span><span class="abs" style="left:677.8px;top:119.80000000000007px"><svg class="i" width="12.5" height="12.5" viewBox="0 0 16 16" fill="currentColor" style="color:#1a9f53;"><path d="M1 8.6 L3.4 6.2 L6.3 9.1 L12.6 2.8 L15 5.2 L6.3 13.9 Z"/></svg></span><span class="abs bt" style="left:700.4000000000001px;top:118.00000000000007px">26</span><span class="abs bt" style="left:16px;top:150.60000000000008px">canopus</span><span class="abs" style="left:514.5999999999999px;top:152.4000000000001px"><svg class="i" width="12.5" height="12.5" viewBox="0 0 16 16" fill="currentColor" style="color:#777;"><circle cx="8" cy="8" r="5" fill="none" stroke="currentColor" stroke-width="2.600"/></svg></span><span class="abs bt" style="left:537.0px;top:150.60000000000008px">0</span><span class="abs" style="left:596.3999999999999px;top:152.10000000000008px"><svg class="i" width="12.5" height="12.5" viewBox="0 0 16 16" fill="currentColor" style="color:#777;"><path d="M8 1L15.500 14.500H.5z"/><path d="M8 5.500v4.500" stroke="#fff" stroke-width="1.800"/><circle cx="8" cy="12" r="1" fill="#fff"/></svg></span><span class="abs bt" style="left:618.8px;top:150.60000000000008px">0</span><span class="abs" style="left:677.8px;top:152.4000000000001px"><svg class="i" width="12.5" height="12.5" viewBox="0 0 16 16" fill="currentColor" style="color:#1a9f53;"><path d="M1 8.6 L3.4 6.2 L6.3 9.1 L12.6 2.8 L15 5.2 L6.3 13.9 Z"/></svg></span><span class="abs bt" style="left:700.4000000000001px;top:150.60000000000008px">4</span><span class="abs bt" style="left:16px;top:183.20000000000007px">capella</span><span class="abs" style="left:514.5999999999999px;top:185.00000000000009px"><svg class="i" width="12.5" height="12.5" viewBox="0 0 16 16" fill="currentColor" style="color:#777;"><circle cx="8" cy="8" r="5" fill="none" stroke="currentColor" stroke-width="2.600"/></svg></span><span class="abs bt" style="left:537.0px;top:183.20000000000007px">0</span><span class="abs" style="left:596.3999999999999px;top:184.70000000000007px"><svg class="i" width="12.5" height="12.5" viewBox="0 0 16 16" fill="currentColor" style="color:#777;"><path d="M8 1L15.500 14.500H.5z"/><path d="M8 5.500v4.500" stroke="#fff" stroke-width="1.800"/><circle cx="8" cy="12" r="1" fill="#fff"/></svg></span><span class="abs bt" style="left:618.8px;top:183.20000000000007px">0</span><span class="abs" style="left:677.8px;top:185.00000000000009px"><svg class="i" width="12.5" height="12.5" viewBox="0 0 16 16" fill="currentColor" style="color:#1a9f53;"><path d="M1 8.6 L3.4 6.2 L6.3 9.1 L12.6 2.8 L15 5.2 L6.3 13.9 Z"/></svg></span><span class="abs bt" style="left:700.4000000000001px;top:183.20000000000007px">26</span></div><div class="card" style="left:1780.2px;top:777.8px;width:289.8px;height:248.2px"><span class="abs ct-i" style="left:8px;top:11.100000000000001px"><svg class="i" width="15" height="15" viewBox="0 0 16 16" fill="currentColor" style="color:#2c64ae;"><circle cx="3" cy="9" r="1.900"/><circle cx="10.500" cy="3" r="2.300"/><circle cx="11.500" cy="9" r="1.900"/><circle cx="8" cy="13.500" r="1.900"/><path d="M3 9h8.500M7.500 9l3-6M7.500 9l.5 4.500" stroke="currentColor" stroke-width="1.200" fill="none"/></svg></span><span class="abs ct" style="left:29.3px;top:8.1px;letter-spacing:-0.292px">SDN Zones</span><span class="abs" style="left:23.2px;top:61.2px"><svg class="i" width="12" height="12" viewBox="0 0 16 16" fill="currentColor" style="color:#1a9f53;"><path d="M1 8.6 L3.4 6.2 L6.3 9.1 L12.6 2.8 L15 5.2 L6.3 13.9 Z"/></svg></span><span class="abs bt" style="left:43.799999999999955px;top:59.200000000000045px">available</span><span class="abs bt r" style="left:207.99999999999977px;width:40px;top:59.200000000000045px">19</span><span class="abs" style="left:255.00000000000006px;top:61.200000000000045px"><svg class="i" width="12.5" height="12.5" viewBox="0 0 16 16" fill="currentColor" style="color:#222;"><circle cx="6.700" cy="6.700" r="4.700" fill="none" stroke="currentColor" stroke-width="2.400"/><path d="M10.400 10.400l3.900 3.900" stroke="currentColor" stroke-width="2.900" stroke-linecap="round"/></svg></span><span class="abs" style="left:22.7px;top:88.4px"><svg class="i" width="13" height="13" viewBox="0 0 16 16" fill="currentColor" style="color:#c4203c;"><circle cx="8" cy="8" r="7"/><path d="M5.300 5.300l5.400 5.400M10.700 5.300l-5.400 5.400" stroke="#fff" stroke-width="2.300"/></svg></span><span class="abs bt" style="left:43.799999999999955px;top:86.90000000000005px">error</span><span class="abs bt r" style="left:207.99999999999977px;width:40px;top:86.90000000000005px">0</span><span class="abs" style="left:255.00000000000006px;top:88.90000000000005px"><svg class="i" width="12.5" height="12.5" viewBox="0 0 16 16" fill="currentColor" style="color:#222;"><circle cx="6.700" cy="6.700" r="4.700" fill="none" stroke="currentColor" stroke-width="2.400"/><path d="M10.400 10.400l3.900 3.900" stroke="currentColor" stroke-width="2.900" stroke-linecap="round"/></svg></span><span class="abs" style="left:22.95px;top:116.35px"><svg class="i" width="12.5" height="12.5" viewBox="0 0 16 16" fill="currentColor" style="color:#d6c430;"><path d="M13.300 6.300A5.600 5.600 0 0 0 3.200 4.700" fill="none" stroke="currentColor" stroke-width="3"/><path d="M2.700 9.700A5.600 5.600 0 0 0 12.800 11.300" fill="none" stroke="currentColor" stroke-width="3"/><path d="M15.500 .8v6.400H9.100zM.5 15.200V8.800h6.400z"/></svg></span><span class="abs bt" style="left:43.799999999999955px;top:114.60000000000005px">pending</span><span class="abs bt r" style="left:207.99999999999977px;width:40px;top:114.60000000000005px">0</span><span class="abs" style="left:255.00000000000006px;top:116.60000000000005px"><svg class="i" width="12.5" height="12.5" viewBox="0 0 16 16" fill="currentColor" style="color:#222;"><circle cx="6.700" cy="6.700" r="4.700" fill="none" stroke="currentColor" stroke-width="2.400"/><path d="M10.400 10.400l3.900 3.900" stroke="currentColor" stroke-width="2.900" stroke-linecap="round"/></svg></span><span class="abs" style="left:22.7px;top:143.8px"><svg class="i" width="13" height="13" viewBox="0 0 16 16" fill="currentColor" style="color:#444;"><rect x="1" y="2.500" width="14" height="11" rx=".6"/><path d="M1 6.200h14M1 9.800h14" stroke="#fff" stroke-width=".9" opacity=".7"/></svg></span><span class="abs bt" style="left:43.799999999999955px;top:142.30000000000004px">All</span><span class="abs bt r" style="left:207.99999999999977px;width:40px;top:142.30000000000004px">19</span><span class="abs" style="left:255.00000000000006px;top:144.30000000000004px"><svg class="i" width="12.5" height="12.5" viewBox="0 0 16 16" fill="currentColor" style="color:#222;"><circle cx="6.700" cy="6.700" r="4.700" fill="none" stroke="currentColor" stroke-width="2.400"/><path d="M10.400 10.400l3.900 3.900" stroke="currentColor" stroke-width="2.900" stroke-linecap="round"/></svg></span></div></div></div>
</div>
</body></html>
